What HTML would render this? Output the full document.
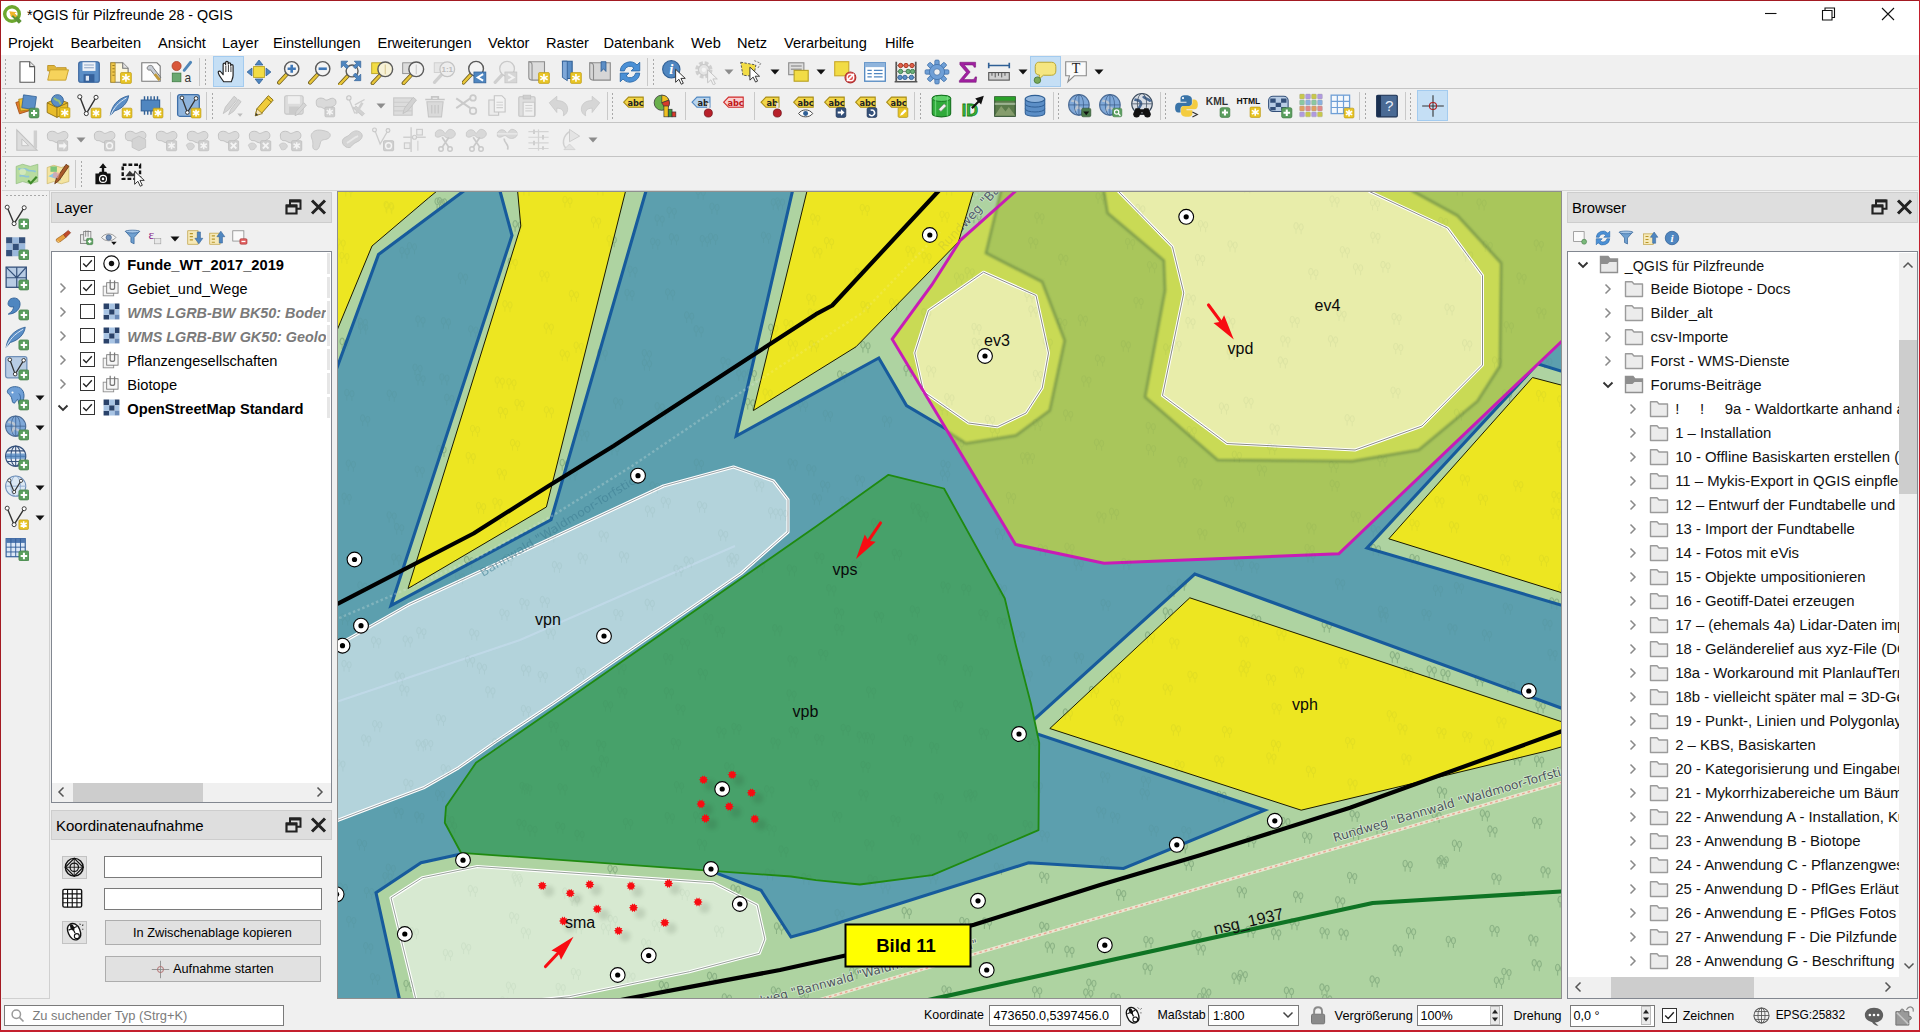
<!DOCTYPE html><html lang="de"><head><meta charset="utf-8"><title>QGIS für Pilzfreunde 28 - QGIS</title><style>
*{box-sizing:border-box}
html,body{margin:0;padding:0}
body{width:1920px;height:1032px;overflow:hidden;background:#f0f0f0;font-family:"Liberation Sans",sans-serif;color:#000;position:relative}
div{position:absolute}
.t{white-space:nowrap}
svg{position:absolute}
.hl{background:#c5dff5;border:1px solid #a3cbef}
.sep{background:#c9c9c9;width:1px}
.hsep{background:#c4c4c4;height:1px}
.hd{width:3px;background-image:radial-gradient(circle,#a8a8a8 0.9px,transparent 1.1px);background-size:3px 4px}
.inp{background:#fff;border:1px solid #7a7a7a}
.btn{background:#e1e1e1;border:1px solid #adadad;text-align:center}
.ttl{background:#dedede;border:1px solid #cdcdcd}
.tree{background:#fff;border:1px solid #828790}
.cb{width:15px;height:15px;background:#fff;border:1px solid #333}
</style></head><body>
<div style="left:0px;top:0px;width:1920px;height:30px;background:#fff"></div>
<div style="left:0px;top:30px;width:1920px;height:25px;background:#fff"></div>
<div class="t" style="left:27px;top:5px;font-size:14.3px;line-height:20px;">*QGIS für Pilzfreunde 28 - QGIS</div>
<div class="t" style="left:8px;top:32.5px;font-size:14.6px;line-height:20px;">Projekt</div>
<div class="t" style="left:70.5px;top:32.5px;font-size:14.6px;line-height:20px;">Bearbeiten</div>
<div class="t" style="left:158px;top:32.5px;font-size:14.6px;line-height:20px;">Ansicht</div>
<div class="t" style="left:222px;top:32.5px;font-size:14.6px;line-height:20px;">Layer</div>
<div class="t" style="left:273px;top:32.5px;font-size:14.6px;line-height:20px;">Einstellungen</div>
<div class="t" style="left:377.5px;top:32.5px;font-size:14.6px;line-height:20px;">Erweiterungen</div>
<div class="t" style="left:488px;top:32.5px;font-size:14.6px;line-height:20px;">Vektor</div>
<div class="t" style="left:546px;top:32.5px;font-size:14.6px;line-height:20px;">Raster</div>
<div class="t" style="left:603.5px;top:32.5px;font-size:14.6px;line-height:20px;">Datenbank</div>
<div class="t" style="left:691px;top:32.5px;font-size:14.6px;line-height:20px;">Web</div>
<div class="t" style="left:737px;top:32.5px;font-size:14.6px;line-height:20px;">Netz</div>
<div class="t" style="left:784px;top:32.5px;font-size:14.6px;line-height:20px;">Verarbeitung</div>
<div class="t" style="left:885px;top:32.5px;font-size:14.6px;line-height:20px;">Hilfe</div>
<svg style="left:1750px;top:0" width="170" height="30" viewBox="0 0 170 30"><g fill="none" stroke="#111" stroke-width="1.1"><path d="M15 13.5h11.5"/><path d="M72.500 10.500h9.500v9.500h-9.500z M75 10.500v-2.500h9.500v9.500h-2.500"/><path d="M132 8l12 12M144 8l-12 12"/></g></svg>
<div class="hsep" style="left:2px;top:88px;width:1916px;height:1px;"></div>
<div class="hsep" style="left:2px;top:122px;width:1916px;height:1px;"></div>
<div class="hsep" style="left:2px;top:156px;width:1916px;height:1px;"></div>
<div style="left:2px;top:190px;width:1916px;height:1px;background:#d5d5d5"></div>
<svg width="1223" height="807" viewBox="338 191 1223 807" style="position:absolute;left:338px;top:191px;display:block;overflow:hidden">
<defs><filter id="bl" x="-20%" y="-20%" width="140%" height="140%"><feGaussianBlur stdDeviation="1.1"/></filter><filter id="sh" x="-100%" y="-100%" width="300%" height="300%"><feGaussianBlur stdDeviation="2.2"/></filter></defs>
<rect x="330" y="180" width="1250" height="830" fill="#aed3a1"/>
<path d="M345.7 196.6v-4.5a2.1 3.3 0 1 1 .1 0M350.8 197.2v-4.2a2 3.1 0 1 1 .1 0M386.7 213.6v-4.5a2.1 3.3 0 1 1 .1 0M391.8 214.2v-4.2a2 3.1 0 1 1 .1 0M386.1 212.3v-4.5a2.1 3.3 0 1 1 .1 0M391.2 212.9v-4.2a2 3.1 0 1 1 .1 0M437.1 209.1v-4.5a2.1 3.3 0 1 1 .1 0M442.2 209.7v-4.2a2 3.1 0 1 1 .1 0M439.5 208.7v-4.5a2.1 3.3 0 1 1 .1 0M444.6 209.3v-4.2a2 3.1 0 1 1 .1 0M523.9 195.4v-4.5a2.1 3.3 0 1 1 .1 0M529.0 196.0v-4.2a2 3.1 0 1 1 .1 0M515.1 231.7v-4.5a2.1 3.3 0 1 1 .1 0M520.2 232.3v-4.2a2 3.1 0 1 1 .1 0M564.9 207.5v-4.5a2.1 3.3 0 1 1 .1 0M570.0 208.1v-4.2a2 3.1 0 1 1 .1 0M593.5 227.8v-4.5a2.1 3.3 0 1 1 .1 0M598.6 228.4v-4.2a2 3.1 0 1 1 .1 0M597.8 195.2v-4.5a2.1 3.3 0 1 1 .1 0M602.9 195.8v-4.2a2 3.1 0 1 1 .1 0M657.1 225.9v-4.5a2.1 3.3 0 1 1 .1 0M662.2 226.5v-4.2a2 3.1 0 1 1 .1 0M669.1 218.1v-4.5a2.1 3.3 0 1 1 .1 0M674.2 218.7v-4.2a2 3.1 0 1 1 .1 0M711.9 214.1v-4.5a2.1 3.3 0 1 1 .1 0M717.0 214.7v-4.2a2 3.1 0 1 1 .1 0M698.1 199.1v-4.5a2.1 3.3 0 1 1 .1 0M703.2 199.7v-4.2a2 3.1 0 1 1 .1 0M777.4 208.8v-4.5a2.1 3.3 0 1 1 .1 0M782.5 209.4v-4.2a2 3.1 0 1 1 .1 0M773.3 209.9v-4.5a2.1 3.3 0 1 1 .1 0M778.4 210.5v-4.2a2 3.1 0 1 1 .1 0M812.7 225.0v-4.5a2.1 3.3 0 1 1 .1 0M817.8 225.6v-4.2a2 3.1 0 1 1 .1 0M862.2 215.3v-4.5a2.1 3.3 0 1 1 .1 0M867.3 215.9v-4.2a2 3.1 0 1 1 .1 0M942.0 222.1v-4.5a2.1 3.3 0 1 1 .1 0M947.1 222.7v-4.2a2 3.1 0 1 1 .1 0M946.6 195.2v-4.5a2.1 3.3 0 1 1 .1 0M951.7 195.8v-4.2a2 3.1 0 1 1 .1 0M973.9 223.3v-4.5a2.1 3.3 0 1 1 .1 0M979.0 223.9v-4.2a2 3.1 0 1 1 .1 0M977.0 191.7v-4.5a2.1 3.3 0 1 1 .1 0M982.1 192.3v-4.2a2 3.1 0 1 1 .1 0M1036.9 223.6v-4.5a2.1 3.3 0 1 1 .1 0M1042.0 224.2v-4.2a2 3.1 0 1 1 .1 0M1098.0 203.8v-4.5a2.1 3.3 0 1 1 .1 0M1103.1 204.4v-4.2a2 3.1 0 1 1 .1 0M1137.7 215.5v-4.5a2.1 3.3 0 1 1 .1 0M1142.8 216.1v-4.2a2 3.1 0 1 1 .1 0M1200.5 231.6v-4.5a2.1 3.3 0 1 1 .1 0M1205.6 232.2v-4.2a2 3.1 0 1 1 .1 0M1244.7 192.7v-4.5a2.1 3.3 0 1 1 .1 0M1249.8 193.3v-4.2a2 3.1 0 1 1 .1 0M1296.0 233.7v-4.5a2.1 3.3 0 1 1 .1 0M1301.1 234.3v-4.2a2 3.1 0 1 1 .1 0M1332.0 207.0v-4.5a2.1 3.3 0 1 1 .1 0M1337.1 207.6v-4.2a2 3.1 0 1 1 .1 0M1372.5 210.3v-4.5a2.1 3.3 0 1 1 .1 0M1377.6 210.9v-4.2a2 3.1 0 1 1 .1 0M1376.7 192.6v-4.5a2.1 3.3 0 1 1 .1 0M1381.8 193.2v-4.2a2 3.1 0 1 1 .1 0M1457.3 195.7v-4.5a2.1 3.3 0 1 1 .1 0M1462.4 196.3v-4.2a2 3.1 0 1 1 .1 0M1440.7 228.3v-4.5a2.1 3.3 0 1 1 .1 0M1445.8 228.9v-4.2a2 3.1 0 1 1 .1 0M1479.0 209.8v-4.5a2.1 3.3 0 1 1 .1 0M1484.1 210.4v-4.2a2 3.1 0 1 1 .1 0M1566.4 226.0v-4.5a2.1 3.3 0 1 1 .1 0M1571.5 226.6v-4.2a2 3.1 0 1 1 .1 0M1591.8 208.3v-4.5a2.1 3.3 0 1 1 .1 0M1596.9 208.9v-4.2a2 3.1 0 1 1 .1 0M1618.4 232.1v-4.5a2.1 3.3 0 1 1 .1 0M1623.5 232.7v-4.2a2 3.1 0 1 1 .1 0M338.1 249.8v-4.5a2.1 3.3 0 1 1 .1 0M343.2 250.4v-4.2a2 3.1 0 1 1 .1 0M341.8 263.3v-4.5a2.1 3.3 0 1 1 .1 0M346.9 263.9v-4.2a2 3.1 0 1 1 .1 0M409.4 253.6v-4.5a2.1 3.3 0 1 1 .1 0M414.5 254.2v-4.2a2 3.1 0 1 1 .1 0M401.9 258.2v-4.5a2.1 3.3 0 1 1 .1 0M407.0 258.8v-4.2a2 3.1 0 1 1 .1 0M460.4 283.9v-4.5a2.1 3.3 0 1 1 .1 0M465.5 284.5v-4.2a2 3.1 0 1 1 .1 0M510.2 269.2v-4.5a2.1 3.3 0 1 1 .1 0M515.3 269.8v-4.2a2 3.1 0 1 1 .1 0M541.9 281.6v-4.5a2.1 3.3 0 1 1 .1 0M547.0 282.2v-4.2a2 3.1 0 1 1 .1 0M630.0 277.1v-4.5a2.1 3.3 0 1 1 .1 0M635.1 277.7v-4.2a2 3.1 0 1 1 .1 0M609.1 246.6v-4.5a2.1 3.3 0 1 1 .1 0M614.2 247.2v-4.2a2 3.1 0 1 1 .1 0M671.4 244.7v-4.5a2.1 3.3 0 1 1 .1 0M676.5 245.3v-4.2a2 3.1 0 1 1 .1 0M652.7 249.1v-4.5a2.1 3.3 0 1 1 .1 0M657.8 249.7v-4.2a2 3.1 0 1 1 .1 0M710.5 244.3v-4.5a2.1 3.3 0 1 1 .1 0M715.6 244.9v-4.2a2 3.1 0 1 1 .1 0M702.2 246.5v-4.5a2.1 3.3 0 1 1 .1 0M707.3 247.1v-4.2a2 3.1 0 1 1 .1 0M763.5 243.1v-4.5a2.1 3.3 0 1 1 .1 0M768.6 243.7v-4.2a2 3.1 0 1 1 .1 0M826.5 248.5v-4.5a2.1 3.3 0 1 1 .1 0M831.6 249.1v-4.2a2 3.1 0 1 1 .1 0M814.8 258.0v-4.5a2.1 3.3 0 1 1 .1 0M819.9 258.6v-4.2a2 3.1 0 1 1 .1 0M856.9 279.4v-4.5a2.1 3.3 0 1 1 .1 0M862.0 280.0v-4.2a2 3.1 0 1 1 .1 0M924.0 263.3v-4.5a2.1 3.3 0 1 1 .1 0M929.1 263.9v-4.2a2 3.1 0 1 1 .1 0M908.0 257.1v-4.5a2.1 3.3 0 1 1 .1 0M913.1 257.7v-4.2a2 3.1 0 1 1 .1 0M967.1 278.5v-4.5a2.1 3.3 0 1 1 .1 0M972.2 279.1v-4.2a2 3.1 0 1 1 .1 0M956.5 283.8v-4.5a2.1 3.3 0 1 1 .1 0M961.6 284.4v-4.2a2 3.1 0 1 1 .1 0M1030.7 248.5v-4.5a2.1 3.3 0 1 1 .1 0M1035.8 249.1v-4.2a2 3.1 0 1 1 .1 0M1060.7 265.2v-4.5a2.1 3.3 0 1 1 .1 0M1065.8 265.8v-4.2a2 3.1 0 1 1 .1 0M1149.5 272.6v-4.5a2.1 3.3 0 1 1 .1 0M1154.6 273.2v-4.2a2 3.1 0 1 1 .1 0M1127.6 249.3v-4.5a2.1 3.3 0 1 1 .1 0M1132.7 249.9v-4.2a2 3.1 0 1 1 .1 0M1197.5 265.4v-4.5a2.1 3.3 0 1 1 .1 0M1202.6 266.0v-4.2a2 3.1 0 1 1 .1 0M1230.0 251.8v-4.5a2.1 3.3 0 1 1 .1 0M1235.1 252.4v-4.2a2 3.1 0 1 1 .1 0M1310.8 279.5v-4.5a2.1 3.3 0 1 1 .1 0M1315.9 280.1v-4.2a2 3.1 0 1 1 .1 0M1355.5 274.6v-4.5a2.1 3.3 0 1 1 .1 0M1360.6 275.2v-4.2a2 3.1 0 1 1 .1 0M1342.3 257.6v-4.5a2.1 3.3 0 1 1 .1 0M1347.4 258.2v-4.2a2 3.1 0 1 1 .1 0M1372.8 243.2v-4.5a2.1 3.3 0 1 1 .1 0M1377.9 243.8v-4.2a2 3.1 0 1 1 .1 0M1382.9 272.5v-4.5a2.1 3.3 0 1 1 .1 0M1388.0 273.1v-4.2a2 3.1 0 1 1 .1 0M1465.6 261.7v-4.5a2.1 3.3 0 1 1 .1 0M1470.7 262.3v-4.2a2 3.1 0 1 1 .1 0M1519.0 284.0v-4.5a2.1 3.3 0 1 1 .1 0M1524.1 284.6v-4.2a2 3.1 0 1 1 .1 0M1485.2 252.0v-4.5a2.1 3.3 0 1 1 .1 0M1490.3 252.6v-4.2a2 3.1 0 1 1 .1 0M1536.2 251.0v-4.5a2.1 3.3 0 1 1 .1 0M1541.3 251.6v-4.2a2 3.1 0 1 1 .1 0M1619.1 279.0v-4.5a2.1 3.3 0 1 1 .1 0M1624.2 279.6v-4.2a2 3.1 0 1 1 .1 0M360.2 329.2v-4.5a2.1 3.3 0 1 1 .1 0M365.3 329.8v-4.2a2 3.1 0 1 1 .1 0M360.6 334.0v-4.5a2.1 3.3 0 1 1 .1 0M365.7 334.6v-4.2a2 3.1 0 1 1 .1 0M417.9 327.0v-4.5a2.1 3.3 0 1 1 .1 0M423.0 327.6v-4.2a2 3.1 0 1 1 .1 0M443.4 328.7v-4.5a2.1 3.3 0 1 1 .1 0M448.5 329.3v-4.2a2 3.1 0 1 1 .1 0M470.7 336.8v-4.5a2.1 3.3 0 1 1 .1 0M475.8 337.4v-4.2a2 3.1 0 1 1 .1 0M504.9 311.7v-4.5a2.1 3.3 0 1 1 .1 0M510.0 312.3v-4.2a2 3.1 0 1 1 .1 0M571.4 301.5v-4.5a2.1 3.3 0 1 1 .1 0M576.5 302.1v-4.2a2 3.1 0 1 1 .1 0M546.2 333.8v-4.5a2.1 3.3 0 1 1 .1 0M551.3 334.4v-4.2a2 3.1 0 1 1 .1 0M627.0 300.4v-4.5a2.1 3.3 0 1 1 .1 0M632.1 301.0v-4.2a2 3.1 0 1 1 .1 0M686.6 322.9v-4.5a2.1 3.3 0 1 1 .1 0M691.7 323.5v-4.2a2 3.1 0 1 1 .1 0M667.6 299.8v-4.5a2.1 3.3 0 1 1 .1 0M672.7 300.4v-4.2a2 3.1 0 1 1 .1 0M696.1 336.7v-4.5a2.1 3.3 0 1 1 .1 0M701.2 337.3v-4.2a2 3.1 0 1 1 .1 0M770.7 335.1v-4.5a2.1 3.3 0 1 1 .1 0M775.8 335.7v-4.2a2 3.1 0 1 1 .1 0M785.9 330.4v-4.5a2.1 3.3 0 1 1 .1 0M791.0 331.0v-4.2a2 3.1 0 1 1 .1 0M808.8 305.1v-4.5a2.1 3.3 0 1 1 .1 0M813.9 305.7v-4.2a2 3.1 0 1 1 .1 0M810.1 319.8v-4.5a2.1 3.3 0 1 1 .1 0M815.2 320.4v-4.2a2 3.1 0 1 1 .1 0M862.9 312.4v-4.5a2.1 3.3 0 1 1 .1 0M868.0 313.0v-4.2a2 3.1 0 1 1 .1 0M891.5 309.6v-4.5a2.1 3.3 0 1 1 .1 0M896.6 310.2v-4.2a2 3.1 0 1 1 .1 0M923.7 319.7v-4.5a2.1 3.3 0 1 1 .1 0M928.8 320.3v-4.2a2 3.1 0 1 1 .1 0M974.0 334.4v-4.5a2.1 3.3 0 1 1 .1 0M979.1 335.0v-4.2a2 3.1 0 1 1 .1 0M1030.9 317.0v-4.5a2.1 3.3 0 1 1 .1 0M1036.0 317.6v-4.2a2 3.1 0 1 1 .1 0M1026.9 302.1v-4.5a2.1 3.3 0 1 1 .1 0M1032.0 302.7v-4.2a2 3.1 0 1 1 .1 0M1059.7 329.2v-4.5a2.1 3.3 0 1 1 .1 0M1064.8 329.8v-4.2a2 3.1 0 1 1 .1 0M1080.3 325.9v-4.5a2.1 3.3 0 1 1 .1 0M1085.4 326.5v-4.2a2 3.1 0 1 1 .1 0M1136.0 308.3v-4.5a2.1 3.3 0 1 1 .1 0M1141.1 308.9v-4.2a2 3.1 0 1 1 .1 0M1187.9 328.5v-4.5a2.1 3.3 0 1 1 .1 0M1193.0 329.1v-4.2a2 3.1 0 1 1 .1 0M1188.2 304.9v-4.5a2.1 3.3 0 1 1 .1 0M1193.3 305.5v-4.2a2 3.1 0 1 1 .1 0M1227.7 328.0v-4.5a2.1 3.3 0 1 1 .1 0M1232.8 328.6v-4.2a2 3.1 0 1 1 .1 0M1292.2 327.4v-4.5a2.1 3.3 0 1 1 .1 0M1297.3 328.0v-4.2a2 3.1 0 1 1 .1 0M1339.0 321.0v-4.5a2.1 3.3 0 1 1 .1 0M1344.1 321.6v-4.2a2 3.1 0 1 1 .1 0M1394.0 324.5v-4.5a2.1 3.3 0 1 1 .1 0M1399.1 325.1v-4.2a2 3.1 0 1 1 .1 0M1447.0 315.0v-4.5a2.1 3.3 0 1 1 .1 0M1452.1 315.6v-4.2a2 3.1 0 1 1 .1 0M1506.3 332.6v-4.5a2.1 3.3 0 1 1 .1 0M1511.4 333.2v-4.2a2 3.1 0 1 1 .1 0M1538.9 318.6v-4.5a2.1 3.3 0 1 1 .1 0M1544.0 319.2v-4.2a2 3.1 0 1 1 .1 0M1616.5 300.0v-4.5a2.1 3.3 0 1 1 .1 0M1621.6 300.6v-4.2a2 3.1 0 1 1 .1 0M1599.0 297.2v-4.5a2.1 3.3 0 1 1 .1 0M1604.1 297.8v-4.2a2 3.1 0 1 1 .1 0M342.1 349.2v-4.5a2.1 3.3 0 1 1 .1 0M347.2 349.8v-4.2a2 3.1 0 1 1 .1 0M418.0 385.5v-4.5a2.1 3.3 0 1 1 .1 0M423.1 386.1v-4.2a2 3.1 0 1 1 .1 0M415.0 375.1v-4.5a2.1 3.3 0 1 1 .1 0M420.1 375.7v-4.2a2 3.1 0 1 1 .1 0M441.8 384.8v-4.5a2.1 3.3 0 1 1 .1 0M446.9 385.4v-4.2a2 3.1 0 1 1 .1 0M497.2 387.9v-4.5a2.1 3.3 0 1 1 .1 0M502.3 388.5v-4.2a2 3.1 0 1 1 .1 0M508.9 389.6v-4.5a2.1 3.3 0 1 1 .1 0M514.0 390.2v-4.2a2 3.1 0 1 1 .1 0M576.1 353.1v-4.5a2.1 3.3 0 1 1 .1 0M581.2 353.7v-4.2a2 3.1 0 1 1 .1 0M562.2 360.9v-4.5a2.1 3.3 0 1 1 .1 0M567.3 361.5v-4.2a2 3.1 0 1 1 .1 0M600.1 360.0v-4.5a2.1 3.3 0 1 1 .1 0M605.2 360.6v-4.2a2 3.1 0 1 1 .1 0M644.4 370.4v-4.5a2.1 3.3 0 1 1 .1 0M649.5 371.0v-4.2a2 3.1 0 1 1 .1 0M644.3 360.6v-4.5a2.1 3.3 0 1 1 .1 0M649.4 361.2v-4.2a2 3.1 0 1 1 .1 0M723.0 368.5v-4.5a2.1 3.3 0 1 1 .1 0M728.1 369.1v-4.2a2 3.1 0 1 1 .1 0M738.8 380.7v-4.5a2.1 3.3 0 1 1 .1 0M743.9 381.3v-4.2a2 3.1 0 1 1 .1 0M790.3 350.6v-4.5a2.1 3.3 0 1 1 .1 0M795.4 351.2v-4.2a2 3.1 0 1 1 .1 0M749.2 380.3v-4.5a2.1 3.3 0 1 1 .1 0M754.3 380.9v-4.2a2 3.1 0 1 1 .1 0M811.4 351.7v-4.5a2.1 3.3 0 1 1 .1 0M816.5 352.3v-4.2a2 3.1 0 1 1 .1 0M839.6 382.0v-4.5a2.1 3.3 0 1 1 .1 0M844.7 382.6v-4.2a2 3.1 0 1 1 .1 0M862.9 352.6v-4.5a2.1 3.3 0 1 1 .1 0M868.0 353.2v-4.2a2 3.1 0 1 1 .1 0M928.6 376.8v-4.5a2.1 3.3 0 1 1 .1 0M933.7 377.4v-4.2a2 3.1 0 1 1 .1 0M906.0 376.3v-4.5a2.1 3.3 0 1 1 .1 0M911.1 376.9v-4.2a2 3.1 0 1 1 .1 0M974.2 349.2v-4.5a2.1 3.3 0 1 1 .1 0M979.3 349.8v-4.2a2 3.1 0 1 1 .1 0M1035.4 381.3v-4.5a2.1 3.3 0 1 1 .1 0M1040.5 381.9v-4.2a2 3.1 0 1 1 .1 0M1045.2 348.9v-4.5a2.1 3.3 0 1 1 .1 0M1050.3 349.5v-4.2a2 3.1 0 1 1 .1 0M1097.5 366.0v-4.5a2.1 3.3 0 1 1 .1 0M1102.6 366.6v-4.2a2 3.1 0 1 1 .1 0M1083.8 386.8v-4.5a2.1 3.3 0 1 1 .1 0M1088.9 387.4v-4.2a2 3.1 0 1 1 .1 0M1123.3 351.7v-4.5a2.1 3.3 0 1 1 .1 0M1128.4 352.3v-4.2a2 3.1 0 1 1 .1 0M1174.0 350.8v-4.5a2.1 3.3 0 1 1 .1 0M1179.1 351.4v-4.2a2 3.1 0 1 1 .1 0M1165.7 354.9v-4.5a2.1 3.3 0 1 1 .1 0M1170.8 355.5v-4.2a2 3.1 0 1 1 .1 0M1229.2 359.4v-4.5a2.1 3.3 0 1 1 .1 0M1234.3 360.0v-4.2a2 3.1 0 1 1 .1 0M1280.3 368.0v-4.5a2.1 3.3 0 1 1 .1 0M1285.4 368.6v-4.2a2 3.1 0 1 1 .1 0M1282.8 346.8v-4.5a2.1 3.3 0 1 1 .1 0M1287.9 347.4v-4.2a2 3.1 0 1 1 .1 0M1330.5 346.7v-4.5a2.1 3.3 0 1 1 .1 0M1335.6 347.3v-4.2a2 3.1 0 1 1 .1 0M1395.7 354.3v-4.5a2.1 3.3 0 1 1 .1 0M1400.8 354.9v-4.2a2 3.1 0 1 1 .1 0M1464.6 350.7v-4.5a2.1 3.3 0 1 1 .1 0M1469.7 351.3v-4.2a2 3.1 0 1 1 .1 0M1494.5 367.8v-4.5a2.1 3.3 0 1 1 .1 0M1499.6 368.4v-4.2a2 3.1 0 1 1 .1 0M1544.8 368.3v-4.5a2.1 3.3 0 1 1 .1 0M1549.9 368.9v-4.2a2 3.1 0 1 1 .1 0M1622.7 361.1v-4.5a2.1 3.3 0 1 1 .1 0M1627.8 361.7v-4.2a2 3.1 0 1 1 .1 0M362.6 426.0v-4.5a2.1 3.3 0 1 1 .1 0M367.7 426.6v-4.2a2 3.1 0 1 1 .1 0M346.8 400.4v-4.5a2.1 3.3 0 1 1 .1 0M351.9 401.0v-4.2a2 3.1 0 1 1 .1 0M389.2 401.1v-4.5a2.1 3.3 0 1 1 .1 0M394.3 401.7v-4.2a2 3.1 0 1 1 .1 0M446.7 405.2v-4.5a2.1 3.3 0 1 1 .1 0M451.8 405.8v-4.2a2 3.1 0 1 1 .1 0M472.5 436.3v-4.5a2.1 3.3 0 1 1 .1 0M477.6 436.9v-4.2a2 3.1 0 1 1 .1 0M517.0 410.4v-4.5a2.1 3.3 0 1 1 .1 0M522.1 411.0v-4.2a2 3.1 0 1 1 .1 0M500.4 418.2v-4.5a2.1 3.3 0 1 1 .1 0M505.5 418.8v-4.2a2 3.1 0 1 1 .1 0M546.4 417.6v-4.5a2.1 3.3 0 1 1 .1 0M551.5 418.2v-4.2a2 3.1 0 1 1 .1 0M581.8 440.8v-4.5a2.1 3.3 0 1 1 .1 0M586.9 441.4v-4.2a2 3.1 0 1 1 .1 0M615.6 408.8v-4.5a2.1 3.3 0 1 1 .1 0M620.7 409.4v-4.2a2 3.1 0 1 1 .1 0M657.1 413.7v-4.5a2.1 3.3 0 1 1 .1 0M662.2 414.3v-4.2a2 3.1 0 1 1 .1 0M660.3 418.9v-4.5a2.1 3.3 0 1 1 .1 0M665.4 419.5v-4.2a2 3.1 0 1 1 .1 0M717.6 406.8v-4.5a2.1 3.3 0 1 1 .1 0M722.7 407.4v-4.2a2 3.1 0 1 1 .1 0M747.7 409.6v-4.5a2.1 3.3 0 1 1 .1 0M752.8 410.2v-4.2a2 3.1 0 1 1 .1 0M765.1 399.8v-4.5a2.1 3.3 0 1 1 .1 0M770.2 400.4v-4.2a2 3.1 0 1 1 .1 0M800.5 411.4v-4.5a2.1 3.3 0 1 1 .1 0M805.6 412.0v-4.2a2 3.1 0 1 1 .1 0M825.3 421.3v-4.5a2.1 3.3 0 1 1 .1 0M830.4 421.9v-4.2a2 3.1 0 1 1 .1 0M884.5 426.9v-4.5a2.1 3.3 0 1 1 .1 0M889.6 427.5v-4.2a2 3.1 0 1 1 .1 0M942.2 415.1v-4.5a2.1 3.3 0 1 1 .1 0M947.3 415.7v-4.2a2 3.1 0 1 1 .1 0M946.8 404.6v-4.5a2.1 3.3 0 1 1 .1 0M951.9 405.2v-4.2a2 3.1 0 1 1 .1 0M987.4 426.3v-4.5a2.1 3.3 0 1 1 .1 0M992.5 426.9v-4.2a2 3.1 0 1 1 .1 0M992.3 437.2v-4.5a2.1 3.3 0 1 1 .1 0M997.4 437.8v-4.2a2 3.1 0 1 1 .1 0M1035.1 430.3v-4.5a2.1 3.3 0 1 1 .1 0M1040.2 430.9v-4.2a2 3.1 0 1 1 .1 0M1065.6 421.0v-4.5a2.1 3.3 0 1 1 .1 0M1070.7 421.6v-4.2a2 3.1 0 1 1 .1 0M1148.2 433.4v-4.5a2.1 3.3 0 1 1 .1 0M1153.3 434.0v-4.2a2 3.1 0 1 1 .1 0M1189.2 437.3v-4.5a2.1 3.3 0 1 1 .1 0M1194.3 437.9v-4.2a2 3.1 0 1 1 .1 0M1246.0 408.1v-4.5a2.1 3.3 0 1 1 .1 0M1251.1 408.7v-4.2a2 3.1 0 1 1 .1 0M1221.4 413.9v-4.5a2.1 3.3 0 1 1 .1 0M1226.5 414.5v-4.2a2 3.1 0 1 1 .1 0M1272.1 434.8v-4.5a2.1 3.3 0 1 1 .1 0M1277.2 435.4v-4.2a2 3.1 0 1 1 .1 0M1347.1 425.6v-4.5a2.1 3.3 0 1 1 .1 0M1352.2 426.2v-4.2a2 3.1 0 1 1 .1 0M1393.0 398.1v-4.5a2.1 3.3 0 1 1 .1 0M1398.1 398.7v-4.2a2 3.1 0 1 1 .1 0M1456.4 420.1v-4.5a2.1 3.3 0 1 1 .1 0M1461.5 420.7v-4.2a2 3.1 0 1 1 .1 0M1504.5 400.9v-4.5a2.1 3.3 0 1 1 .1 0M1509.6 401.5v-4.2a2 3.1 0 1 1 .1 0M1538.6 401.3v-4.5a2.1 3.3 0 1 1 .1 0M1543.7 401.9v-4.2a2 3.1 0 1 1 .1 0M1559.6 407.0v-4.5a2.1 3.3 0 1 1 .1 0M1564.7 407.6v-4.2a2 3.1 0 1 1 .1 0M1612.1 440.9v-4.5a2.1 3.3 0 1 1 .1 0M1617.2 441.5v-4.2a2 3.1 0 1 1 .1 0M348.3 471.1v-4.5a2.1 3.3 0 1 1 .1 0M353.4 471.7v-4.2a2 3.1 0 1 1 .1 0M417.2 477.1v-4.5a2.1 3.3 0 1 1 .1 0M422.3 477.7v-4.2a2 3.1 0 1 1 .1 0M438.9 456.5v-4.5a2.1 3.3 0 1 1 .1 0M444.0 457.1v-4.2a2 3.1 0 1 1 .1 0M468.2 463.4v-4.5a2.1 3.3 0 1 1 .1 0M473.3 464.0v-4.2a2 3.1 0 1 1 .1 0M512.5 450.5v-4.5a2.1 3.3 0 1 1 .1 0M517.6 451.1v-4.2a2 3.1 0 1 1 .1 0M499.3 479.6v-4.5a2.1 3.3 0 1 1 .1 0M504.4 480.2v-4.2a2 3.1 0 1 1 .1 0M570.0 479.7v-4.5a2.1 3.3 0 1 1 .1 0M575.1 480.3v-4.2a2 3.1 0 1 1 .1 0M562.2 470.4v-4.5a2.1 3.3 0 1 1 .1 0M567.3 471.0v-4.2a2 3.1 0 1 1 .1 0M612.0 455.2v-4.5a2.1 3.3 0 1 1 .1 0M617.1 455.8v-4.2a2 3.1 0 1 1 .1 0M652.3 493.0v-4.5a2.1 3.3 0 1 1 .1 0M657.4 493.6v-4.2a2 3.1 0 1 1 .1 0M696.3 470.2v-4.5a2.1 3.3 0 1 1 .1 0M701.4 470.8v-4.2a2 3.1 0 1 1 .1 0M790.1 469.8v-4.5a2.1 3.3 0 1 1 .1 0M795.2 470.4v-4.2a2 3.1 0 1 1 .1 0M756.7 491.6v-4.5a2.1 3.3 0 1 1 .1 0M761.8 492.2v-4.2a2 3.1 0 1 1 .1 0M808.8 475.6v-4.5a2.1 3.3 0 1 1 .1 0M813.9 476.2v-4.2a2 3.1 0 1 1 .1 0M822.6 491.9v-4.5a2.1 3.3 0 1 1 .1 0M827.7 492.5v-4.2a2 3.1 0 1 1 .1 0M857.3 486.1v-4.5a2.1 3.3 0 1 1 .1 0M862.4 486.7v-4.2a2 3.1 0 1 1 .1 0M942.5 480.9v-4.5a2.1 3.3 0 1 1 .1 0M947.6 481.5v-4.2a2 3.1 0 1 1 .1 0M943.0 471.4v-4.5a2.1 3.3 0 1 1 .1 0M948.1 472.0v-4.2a2 3.1 0 1 1 .1 0M956.6 450.2v-4.5a2.1 3.3 0 1 1 .1 0M961.7 450.8v-4.2a2 3.1 0 1 1 .1 0M1027.3 463.3v-4.5a2.1 3.3 0 1 1 .1 0M1032.4 463.9v-4.2a2 3.1 0 1 1 .1 0M1022.6 463.9v-4.5a2.1 3.3 0 1 1 .1 0M1027.7 464.5v-4.2a2 3.1 0 1 1 .1 0M1096.5 450.1v-4.5a2.1 3.3 0 1 1 .1 0M1101.6 450.7v-4.2a2 3.1 0 1 1 .1 0M1148.4 455.3v-4.5a2.1 3.3 0 1 1 .1 0M1153.5 455.9v-4.2a2 3.1 0 1 1 .1 0M1194.9 489.7v-4.5a2.1 3.3 0 1 1 .1 0M1200.0 490.3v-4.2a2 3.1 0 1 1 .1 0M1179.9 467.3v-4.5a2.1 3.3 0 1 1 .1 0M1185.0 467.9v-4.2a2 3.1 0 1 1 .1 0M1259.4 475.9v-4.5a2.1 3.3 0 1 1 .1 0M1264.5 476.5v-4.2a2 3.1 0 1 1 .1 0M1234.3 462.1v-4.5a2.1 3.3 0 1 1 .1 0M1239.4 462.7v-4.2a2 3.1 0 1 1 .1 0M1269.6 454.5v-4.5a2.1 3.3 0 1 1 .1 0M1274.7 455.1v-4.2a2 3.1 0 1 1 .1 0M1332.1 491.2v-4.5a2.1 3.3 0 1 1 .1 0M1337.2 491.8v-4.2a2 3.1 0 1 1 .1 0M1331.2 472.5v-4.5a2.1 3.3 0 1 1 .1 0M1336.3 473.1v-4.2a2 3.1 0 1 1 .1 0M1379.9 466.4v-4.5a2.1 3.3 0 1 1 .1 0M1385.0 467.0v-4.2a2 3.1 0 1 1 .1 0M1462.4 485.7v-4.5a2.1 3.3 0 1 1 .1 0M1467.5 486.3v-4.2a2 3.1 0 1 1 .1 0M1515.7 491.4v-4.5a2.1 3.3 0 1 1 .1 0M1520.8 492.0v-4.2a2 3.1 0 1 1 .1 0M1559.2 452.2v-4.5a2.1 3.3 0 1 1 .1 0M1564.3 452.8v-4.2a2 3.1 0 1 1 .1 0M1599.3 483.1v-4.5a2.1 3.3 0 1 1 .1 0M1604.4 483.7v-4.2a2 3.1 0 1 1 .1 0M344.1 504.2v-4.5a2.1 3.3 0 1 1 .1 0M349.2 504.8v-4.2a2 3.1 0 1 1 .1 0M389.1 522.8v-4.5a2.1 3.3 0 1 1 .1 0M394.2 523.4v-4.2a2 3.1 0 1 1 .1 0M396.6 534.5v-4.5a2.1 3.3 0 1 1 .1 0M401.7 535.1v-4.2a2 3.1 0 1 1 .1 0M478.5 513.4v-4.5a2.1 3.3 0 1 1 .1 0M483.6 514.0v-4.2a2 3.1 0 1 1 .1 0M500.7 526.5v-4.5a2.1 3.3 0 1 1 .1 0M505.8 527.1v-4.2a2 3.1 0 1 1 .1 0M494.9 509.1v-4.5a2.1 3.3 0 1 1 .1 0M500.0 509.7v-4.2a2 3.1 0 1 1 .1 0M548.6 541.9v-4.5a2.1 3.3 0 1 1 .1 0M553.7 542.5v-4.2a2 3.1 0 1 1 .1 0M601.2 541.9v-4.5a2.1 3.3 0 1 1 .1 0M606.3 542.5v-4.2a2 3.1 0 1 1 .1 0M663.3 508.1v-4.5a2.1 3.3 0 1 1 .1 0M668.4 508.7v-4.2a2 3.1 0 1 1 .1 0M647.5 517.0v-4.5a2.1 3.3 0 1 1 .1 0M652.6 517.6v-4.2a2 3.1 0 1 1 .1 0M699.5 512.5v-4.5a2.1 3.3 0 1 1 .1 0M704.6 513.1v-4.2a2 3.1 0 1 1 .1 0M720.6 541.0v-4.5a2.1 3.3 0 1 1 .1 0M725.7 541.6v-4.2a2 3.1 0 1 1 .1 0M780.5 520.2v-4.5a2.1 3.3 0 1 1 .1 0M785.6 520.8v-4.2a2 3.1 0 1 1 .1 0M770.6 518.6v-4.5a2.1 3.3 0 1 1 .1 0M775.7 519.2v-4.2a2 3.1 0 1 1 .1 0M814.4 504.7v-4.5a2.1 3.3 0 1 1 .1 0M819.5 505.3v-4.2a2 3.1 0 1 1 .1 0M842.1 507.5v-4.5a2.1 3.3 0 1 1 .1 0M847.2 508.1v-4.2a2 3.1 0 1 1 .1 0M873.6 529.7v-4.5a2.1 3.3 0 1 1 .1 0M878.7 530.3v-4.2a2 3.1 0 1 1 .1 0M913.0 513.9v-4.5a2.1 3.3 0 1 1 .1 0M918.1 514.5v-4.2a2 3.1 0 1 1 .1 0M921.1 521.6v-4.5a2.1 3.3 0 1 1 .1 0M926.2 522.2v-4.2a2 3.1 0 1 1 .1 0M997.5 539.3v-4.5a2.1 3.3 0 1 1 .1 0M1002.6 539.9v-4.2a2 3.1 0 1 1 .1 0M1008.5 503.4v-4.5a2.1 3.3 0 1 1 .1 0M1013.6 504.0v-4.2a2 3.1 0 1 1 .1 0M1098.9 522.8v-4.5a2.1 3.3 0 1 1 .1 0M1104.0 523.4v-4.2a2 3.1 0 1 1 .1 0M1111.5 519.2v-4.5a2.1 3.3 0 1 1 .1 0M1116.6 519.8v-4.2a2 3.1 0 1 1 .1 0M1199.8 539.6v-4.5a2.1 3.3 0 1 1 .1 0M1204.9 540.2v-4.2a2 3.1 0 1 1 .1 0M1226.4 506.8v-4.5a2.1 3.3 0 1 1 .1 0M1231.5 507.4v-4.2a2 3.1 0 1 1 .1 0M1238.5 532.0v-4.5a2.1 3.3 0 1 1 .1 0M1243.6 532.6v-4.2a2 3.1 0 1 1 .1 0M1308.9 533.8v-4.5a2.1 3.3 0 1 1 .1 0M1314.0 534.4v-4.2a2 3.1 0 1 1 .1 0M1353.2 522.1v-4.5a2.1 3.3 0 1 1 .1 0M1358.3 522.7v-4.2a2 3.1 0 1 1 .1 0M1373.2 536.4v-4.5a2.1 3.3 0 1 1 .1 0M1378.3 537.0v-4.2a2 3.1 0 1 1 .1 0M1412.0 530.4v-4.5a2.1 3.3 0 1 1 .1 0M1417.1 531.0v-4.2a2 3.1 0 1 1 .1 0M1436.9 507.6v-4.5a2.1 3.3 0 1 1 .1 0M1442.0 508.2v-4.2a2 3.1 0 1 1 .1 0M1451.5 532.7v-4.5a2.1 3.3 0 1 1 .1 0M1456.6 533.3v-4.2a2 3.1 0 1 1 .1 0M1480.4 505.1v-4.5a2.1 3.3 0 1 1 .1 0M1485.5 505.7v-4.2a2 3.1 0 1 1 .1 0M1553.1 519.1v-4.5a2.1 3.3 0 1 1 .1 0M1558.2 519.7v-4.2a2 3.1 0 1 1 .1 0M1553.9 502.5v-4.5a2.1 3.3 0 1 1 .1 0M1559.0 503.1v-4.2a2 3.1 0 1 1 .1 0M1592.8 522.3v-4.5a2.1 3.3 0 1 1 .1 0M1597.9 522.9v-4.2a2 3.1 0 1 1 .1 0M359.9 592.9v-4.5a2.1 3.3 0 1 1 .1 0M365.0 593.5v-4.2a2 3.1 0 1 1 .1 0M393.8 564.9v-4.5a2.1 3.3 0 1 1 .1 0M398.9 565.5v-4.2a2 3.1 0 1 1 .1 0M466.5 567.5v-4.5a2.1 3.3 0 1 1 .1 0M471.6 568.1v-4.2a2 3.1 0 1 1 .1 0M457.4 583.7v-4.5a2.1 3.3 0 1 1 .1 0M462.5 584.3v-4.2a2 3.1 0 1 1 .1 0M506.0 565.3v-4.5a2.1 3.3 0 1 1 .1 0M511.1 565.9v-4.2a2 3.1 0 1 1 .1 0M580.2 564.0v-4.5a2.1 3.3 0 1 1 .1 0M585.3 564.6v-4.2a2 3.1 0 1 1 .1 0M554.4 572.5v-4.5a2.1 3.3 0 1 1 .1 0M559.5 573.1v-4.2a2 3.1 0 1 1 .1 0M621.5 562.7v-4.5a2.1 3.3 0 1 1 .1 0M626.6 563.3v-4.2a2 3.1 0 1 1 .1 0M676.0 576.2v-4.5a2.1 3.3 0 1 1 .1 0M681.1 576.8v-4.2a2 3.1 0 1 1 .1 0M686.2 567.7v-4.5a2.1 3.3 0 1 1 .1 0M691.3 568.3v-4.2a2 3.1 0 1 1 .1 0M731.6 564.2v-4.5a2.1 3.3 0 1 1 .1 0M736.7 564.8v-4.2a2 3.1 0 1 1 .1 0M729.0 567.0v-4.5a2.1 3.3 0 1 1 .1 0M734.1 567.6v-4.2a2 3.1 0 1 1 .1 0M789.4 575.8v-4.5a2.1 3.3 0 1 1 .1 0M794.5 576.4v-4.2a2 3.1 0 1 1 .1 0M757.3 572.3v-4.5a2.1 3.3 0 1 1 .1 0M762.4 572.9v-4.2a2 3.1 0 1 1 .1 0M828.8 595.7v-4.5a2.1 3.3 0 1 1 .1 0M833.9 596.3v-4.2a2 3.1 0 1 1 .1 0M816.8 563.4v-4.5a2.1 3.3 0 1 1 .1 0M821.9 564.0v-4.2a2 3.1 0 1 1 .1 0M894.4 560.2v-4.5a2.1 3.3 0 1 1 .1 0M899.5 560.8v-4.2a2 3.1 0 1 1 .1 0M854.1 571.3v-4.5a2.1 3.3 0 1 1 .1 0M859.2 571.9v-4.2a2 3.1 0 1 1 .1 0M943.0 592.9v-4.5a2.1 3.3 0 1 1 .1 0M948.1 593.5v-4.2a2 3.1 0 1 1 .1 0M999.4 595.0v-4.5a2.1 3.3 0 1 1 .1 0M1004.5 595.6v-4.2a2 3.1 0 1 1 .1 0M963.7 595.2v-4.5a2.1 3.3 0 1 1 .1 0M968.8 595.8v-4.2a2 3.1 0 1 1 .1 0M1040.3 555.4v-4.5a2.1 3.3 0 1 1 .1 0M1045.4 556.0v-4.2a2 3.1 0 1 1 .1 0M1076.2 570.5v-4.5a2.1 3.3 0 1 1 .1 0M1081.3 571.1v-4.2a2 3.1 0 1 1 .1 0M1066.9 554.1v-4.5a2.1 3.3 0 1 1 .1 0M1072.0 554.7v-4.2a2 3.1 0 1 1 .1 0M1123.8 569.5v-4.5a2.1 3.3 0 1 1 .1 0M1128.9 570.1v-4.2a2 3.1 0 1 1 .1 0M1168.9 596.4v-4.5a2.1 3.3 0 1 1 .1 0M1174.0 597.0v-4.2a2 3.1 0 1 1 .1 0M1179.2 590.1v-4.5a2.1 3.3 0 1 1 .1 0M1184.3 590.7v-4.2a2 3.1 0 1 1 .1 0M1251.7 573.0v-4.5a2.1 3.3 0 1 1 .1 0M1256.8 573.6v-4.2a2 3.1 0 1 1 .1 0M1236.3 570.4v-4.5a2.1 3.3 0 1 1 .1 0M1241.4 571.0v-4.2a2 3.1 0 1 1 .1 0M1308.0 562.5v-4.5a2.1 3.3 0 1 1 .1 0M1313.1 563.1v-4.2a2 3.1 0 1 1 .1 0M1307.0 555.3v-4.5a2.1 3.3 0 1 1 .1 0M1312.1 555.9v-4.2a2 3.1 0 1 1 .1 0M1337.6 589.7v-4.5a2.1 3.3 0 1 1 .1 0M1342.7 590.3v-4.2a2 3.1 0 1 1 .1 0M1373.3 555.5v-4.5a2.1 3.3 0 1 1 .1 0M1378.4 556.1v-4.2a2 3.1 0 1 1 .1 0M1412.0 565.3v-4.5a2.1 3.3 0 1 1 .1 0M1417.1 565.9v-4.2a2 3.1 0 1 1 .1 0M1456.4 593.5v-4.5a2.1 3.3 0 1 1 .1 0M1461.5 594.1v-4.2a2 3.1 0 1 1 .1 0M1435.5 596.1v-4.5a2.1 3.3 0 1 1 .1 0M1440.6 596.7v-4.2a2 3.1 0 1 1 .1 0M1502.6 565.5v-4.5a2.1 3.3 0 1 1 .1 0M1507.7 566.1v-4.2a2 3.1 0 1 1 .1 0M1541.4 566.1v-4.5a2.1 3.3 0 1 1 .1 0M1546.5 566.7v-4.2a2 3.1 0 1 1 .1 0M1560.7 594.3v-4.5a2.1 3.3 0 1 1 .1 0M1565.8 594.9v-4.2a2 3.1 0 1 1 .1 0M1607.4 595.5v-4.5a2.1 3.3 0 1 1 .1 0M1612.5 596.1v-4.2a2 3.1 0 1 1 .1 0M1589.8 574.9v-4.5a2.1 3.3 0 1 1 .1 0M1594.9 575.5v-4.2a2 3.1 0 1 1 .1 0M373.6 648.0v-4.5a2.1 3.3 0 1 1 .1 0M378.7 648.6v-4.2a2 3.1 0 1 1 .1 0M342.5 624.9v-4.5a2.1 3.3 0 1 1 .1 0M347.6 625.5v-4.2a2 3.1 0 1 1 .1 0M405.2 646.8v-4.5a2.1 3.3 0 1 1 .1 0M410.3 647.4v-4.2a2 3.1 0 1 1 .1 0M418.8 638.5v-4.5a2.1 3.3 0 1 1 .1 0M423.9 639.1v-4.2a2 3.1 0 1 1 .1 0M471.7 640.0v-4.5a2.1 3.3 0 1 1 .1 0M476.8 640.6v-4.2a2 3.1 0 1 1 .1 0M501.9 620.1v-4.5a2.1 3.3 0 1 1 .1 0M507.0 620.7v-4.2a2 3.1 0 1 1 .1 0M521.9 609.5v-4.5a2.1 3.3 0 1 1 .1 0M527.0 610.1v-4.2a2 3.1 0 1 1 .1 0M548.2 639.1v-4.5a2.1 3.3 0 1 1 .1 0M553.3 639.7v-4.2a2 3.1 0 1 1 .1 0M542.3 607.5v-4.5a2.1 3.3 0 1 1 .1 0M547.4 608.1v-4.2a2 3.1 0 1 1 .1 0M615.8 620.3v-4.5a2.1 3.3 0 1 1 .1 0M620.9 620.9v-4.2a2 3.1 0 1 1 .1 0M682.4 649.5v-4.5a2.1 3.3 0 1 1 .1 0M687.5 650.1v-4.2a2 3.1 0 1 1 .1 0M647.2 610.2v-4.5a2.1 3.3 0 1 1 .1 0M652.3 610.8v-4.2a2 3.1 0 1 1 .1 0M717.4 637.2v-4.5a2.1 3.3 0 1 1 .1 0M722.5 637.8v-4.2a2 3.1 0 1 1 .1 0M705.8 624.3v-4.5a2.1 3.3 0 1 1 .1 0M710.9 624.9v-4.2a2 3.1 0 1 1 .1 0M774.8 635.7v-4.5a2.1 3.3 0 1 1 .1 0M779.9 636.3v-4.2a2 3.1 0 1 1 .1 0M836.8 635.2v-4.5a2.1 3.3 0 1 1 .1 0M841.9 635.8v-4.2a2 3.1 0 1 1 .1 0M836.5 618.9v-4.5a2.1 3.3 0 1 1 .1 0M841.6 619.5v-4.2a2 3.1 0 1 1 .1 0M876.4 622.4v-4.5a2.1 3.3 0 1 1 .1 0M881.5 623.0v-4.2a2 3.1 0 1 1 .1 0M912.3 616.9v-4.5a2.1 3.3 0 1 1 .1 0M917.4 617.5v-4.2a2 3.1 0 1 1 .1 0M910.2 644.9v-4.5a2.1 3.3 0 1 1 .1 0M915.3 645.5v-4.2a2 3.1 0 1 1 .1 0M980.9 620.4v-4.5a2.1 3.3 0 1 1 .1 0M986.0 621.0v-4.2a2 3.1 0 1 1 .1 0M999.2 628.3v-4.5a2.1 3.3 0 1 1 .1 0M1004.3 628.9v-4.2a2 3.1 0 1 1 .1 0M1017.7 641.6v-4.5a2.1 3.3 0 1 1 .1 0M1022.8 642.2v-4.2a2 3.1 0 1 1 .1 0M1103.1 610.5v-4.5a2.1 3.3 0 1 1 .1 0M1108.2 611.1v-4.2a2 3.1 0 1 1 .1 0M1147.5 643.0v-4.5a2.1 3.3 0 1 1 .1 0M1152.6 643.6v-4.2a2 3.1 0 1 1 .1 0M1165.3 618.9v-4.5a2.1 3.3 0 1 1 .1 0M1170.4 619.5v-4.2a2 3.1 0 1 1 .1 0M1171.8 648.8v-4.5a2.1 3.3 0 1 1 .1 0M1176.9 649.4v-4.2a2 3.1 0 1 1 .1 0M1241.2 646.9v-4.5a2.1 3.3 0 1 1 .1 0M1246.3 647.5v-4.2a2 3.1 0 1 1 .1 0M1253.6 625.8v-4.5a2.1 3.3 0 1 1 .1 0M1258.7 626.4v-4.2a2 3.1 0 1 1 .1 0M1278.9 640.2v-4.5a2.1 3.3 0 1 1 .1 0M1284.0 640.8v-4.2a2 3.1 0 1 1 .1 0M1324.2 632.2v-4.5a2.1 3.3 0 1 1 .1 0M1329.3 632.8v-4.2a2 3.1 0 1 1 .1 0M1381.1 622.2v-4.5a2.1 3.3 0 1 1 .1 0M1386.2 622.8v-4.2a2 3.1 0 1 1 .1 0M1380.5 617.2v-4.5a2.1 3.3 0 1 1 .1 0M1385.6 617.8v-4.2a2 3.1 0 1 1 .1 0M1449.9 634.7v-4.5a2.1 3.3 0 1 1 .1 0M1455.0 635.3v-4.2a2 3.1 0 1 1 .1 0M1424.0 620.4v-4.5a2.1 3.3 0 1 1 .1 0M1429.1 621.0v-4.2a2 3.1 0 1 1 .1 0M1505.3 614.1v-4.5a2.1 3.3 0 1 1 .1 0M1510.4 614.7v-4.2a2 3.1 0 1 1 .1 0M1484.4 641.0v-4.5a2.1 3.3 0 1 1 .1 0M1489.5 641.6v-4.2a2 3.1 0 1 1 .1 0M1551.6 608.8v-4.5a2.1 3.3 0 1 1 .1 0M1556.7 609.4v-4.2a2 3.1 0 1 1 .1 0M1544.9 630.2v-4.5a2.1 3.3 0 1 1 .1 0M1550.0 630.8v-4.2a2 3.1 0 1 1 .1 0M1607.6 610.0v-4.5a2.1 3.3 0 1 1 .1 0M1612.7 610.6v-4.2a2 3.1 0 1 1 .1 0M1610.1 624.0v-4.5a2.1 3.3 0 1 1 .1 0M1615.2 624.6v-4.2a2 3.1 0 1 1 .1 0M344.0 671.5v-4.5a2.1 3.3 0 1 1 .1 0M349.1 672.1v-4.2a2 3.1 0 1 1 .1 0M397.2 682.9v-4.5a2.1 3.3 0 1 1 .1 0M402.3 683.5v-4.2a2 3.1 0 1 1 .1 0M401.8 696.0v-4.5a2.1 3.3 0 1 1 .1 0M406.9 696.6v-4.2a2 3.1 0 1 1 .1 0M479.4 674.0v-4.5a2.1 3.3 0 1 1 .1 0M484.5 674.6v-4.2a2 3.1 0 1 1 .1 0M467.5 667.0v-4.5a2.1 3.3 0 1 1 .1 0M472.6 667.6v-4.2a2 3.1 0 1 1 .1 0M487.8 697.7v-4.5a2.1 3.3 0 1 1 .1 0M492.9 698.3v-4.2a2 3.1 0 1 1 .1 0M523.6 675.9v-4.5a2.1 3.3 0 1 1 .1 0M528.7 676.5v-4.2a2 3.1 0 1 1 .1 0M578.3 678.3v-4.5a2.1 3.3 0 1 1 .1 0M583.4 678.9v-4.2a2 3.1 0 1 1 .1 0M540.2 682.3v-4.5a2.1 3.3 0 1 1 .1 0M545.3 682.9v-4.2a2 3.1 0 1 1 .1 0M619.7 698.0v-4.5a2.1 3.3 0 1 1 .1 0M624.8 698.6v-4.2a2 3.1 0 1 1 .1 0M618.9 674.3v-4.5a2.1 3.3 0 1 1 .1 0M624.0 674.9v-4.2a2 3.1 0 1 1 .1 0M665.7 664.4v-4.5a2.1 3.3 0 1 1 .1 0M670.8 665.0v-4.2a2 3.1 0 1 1 .1 0M666.4 698.7v-4.5a2.1 3.3 0 1 1 .1 0M671.5 699.3v-4.2a2 3.1 0 1 1 .1 0M700.3 679.6v-4.5a2.1 3.3 0 1 1 .1 0M705.4 680.2v-4.2a2 3.1 0 1 1 .1 0M790.0 666.7v-4.5a2.1 3.3 0 1 1 .1 0M795.1 667.3v-4.2a2 3.1 0 1 1 .1 0M789.0 700.9v-4.5a2.1 3.3 0 1 1 .1 0M794.1 701.5v-4.2a2 3.1 0 1 1 .1 0M820.7 660.3v-4.5a2.1 3.3 0 1 1 .1 0M825.8 660.9v-4.2a2 3.1 0 1 1 .1 0M868.6 697.8v-4.5a2.1 3.3 0 1 1 .1 0M873.7 698.4v-4.2a2 3.1 0 1 1 .1 0M939.8 665.1v-4.5a2.1 3.3 0 1 1 .1 0M944.9 665.7v-4.2a2 3.1 0 1 1 .1 0M965.3 675.8v-4.5a2.1 3.3 0 1 1 .1 0M970.4 676.4v-4.2a2 3.1 0 1 1 .1 0M1044.0 666.1v-4.5a2.1 3.3 0 1 1 .1 0M1049.1 666.7v-4.2a2 3.1 0 1 1 .1 0M1025.1 680.8v-4.5a2.1 3.3 0 1 1 .1 0M1030.2 681.4v-4.2a2 3.1 0 1 1 .1 0M1076.4 663.4v-4.5a2.1 3.3 0 1 1 .1 0M1081.5 664.0v-4.2a2 3.1 0 1 1 .1 0M1091.4 697.5v-4.5a2.1 3.3 0 1 1 .1 0M1096.5 698.1v-4.2a2 3.1 0 1 1 .1 0M1113.3 682.7v-4.5a2.1 3.3 0 1 1 .1 0M1118.4 683.3v-4.2a2 3.1 0 1 1 .1 0M1165.2 694.9v-4.5a2.1 3.3 0 1 1 .1 0M1170.3 695.5v-4.2a2 3.1 0 1 1 .1 0M1189.9 682.2v-4.5a2.1 3.3 0 1 1 .1 0M1195.0 682.8v-4.2a2 3.1 0 1 1 .1 0M1243.1 671.5v-4.5a2.1 3.3 0 1 1 .1 0M1248.2 672.1v-4.2a2 3.1 0 1 1 .1 0M1241.1 676.7v-4.5a2.1 3.3 0 1 1 .1 0M1246.2 677.3v-4.2a2 3.1 0 1 1 .1 0M1296.5 677.7v-4.5a2.1 3.3 0 1 1 .1 0M1301.6 678.3v-4.2a2 3.1 0 1 1 .1 0M1268.5 685.2v-4.5a2.1 3.3 0 1 1 .1 0M1273.6 685.8v-4.2a2 3.1 0 1 1 .1 0M1341.0 668.4v-4.5a2.1 3.3 0 1 1 .1 0M1346.1 669.0v-4.2a2 3.1 0 1 1 .1 0M1405.8 678.2v-4.5a2.1 3.3 0 1 1 .1 0M1410.9 678.8v-4.2a2 3.1 0 1 1 .1 0M1392.3 662.7v-4.5a2.1 3.3 0 1 1 .1 0M1397.4 663.3v-4.2a2 3.1 0 1 1 .1 0M1429.2 676.9v-4.5a2.1 3.3 0 1 1 .1 0M1434.3 677.5v-4.2a2 3.1 0 1 1 .1 0M1442.9 680.4v-4.5a2.1 3.3 0 1 1 .1 0M1448.0 681.0v-4.2a2 3.1 0 1 1 .1 0M1477.3 686.0v-4.5a2.1 3.3 0 1 1 .1 0M1482.4 686.6v-4.2a2 3.1 0 1 1 .1 0M1507.8 692.2v-4.5a2.1 3.3 0 1 1 .1 0M1512.9 692.8v-4.2a2 3.1 0 1 1 .1 0M1550.0 660.4v-4.5a2.1 3.3 0 1 1 .1 0M1555.1 661.0v-4.2a2 3.1 0 1 1 .1 0M1596.1 699.8v-4.5a2.1 3.3 0 1 1 .1 0M1601.2 700.4v-4.2a2 3.1 0 1 1 .1 0M1617.2 701.8v-4.5a2.1 3.3 0 1 1 .1 0M1622.3 702.4v-4.2a2 3.1 0 1 1 .1 0M363.7 745.9v-4.5a2.1 3.3 0 1 1 .1 0M368.8 746.5v-4.2a2 3.1 0 1 1 .1 0M374.7 731.6v-4.5a2.1 3.3 0 1 1 .1 0M379.8 732.2v-4.2a2 3.1 0 1 1 .1 0M425.6 750.3v-4.5a2.1 3.3 0 1 1 .1 0M430.7 750.9v-4.2a2 3.1 0 1 1 .1 0M418.2 750.9v-4.5a2.1 3.3 0 1 1 .1 0M423.3 751.5v-4.2a2 3.1 0 1 1 .1 0M438.4 725.4v-4.5a2.1 3.3 0 1 1 .1 0M443.5 726.0v-4.2a2 3.1 0 1 1 .1 0M494.5 749.4v-4.5a2.1 3.3 0 1 1 .1 0M499.6 750.0v-4.2a2 3.1 0 1 1 .1 0M523.4 716.3v-4.5a2.1 3.3 0 1 1 .1 0M528.5 716.9v-4.2a2 3.1 0 1 1 .1 0M561.6 750.5v-4.5a2.1 3.3 0 1 1 .1 0M566.7 751.1v-4.2a2 3.1 0 1 1 .1 0M551.1 732.3v-4.5a2.1 3.3 0 1 1 .1 0M556.2 732.9v-4.2a2 3.1 0 1 1 .1 0M605.5 711.6v-4.5a2.1 3.3 0 1 1 .1 0M610.6 712.2v-4.2a2 3.1 0 1 1 .1 0M598.6 751.2v-4.5a2.1 3.3 0 1 1 .1 0M603.7 751.8v-4.2a2 3.1 0 1 1 .1 0M673.4 749.4v-4.5a2.1 3.3 0 1 1 .1 0M678.5 750.0v-4.2a2 3.1 0 1 1 .1 0M678.0 715.1v-4.5a2.1 3.3 0 1 1 .1 0M683.1 715.7v-4.2a2 3.1 0 1 1 .1 0M718.9 738.0v-4.5a2.1 3.3 0 1 1 .1 0M724.0 738.6v-4.2a2 3.1 0 1 1 .1 0M733.9 734.4v-4.5a2.1 3.3 0 1 1 .1 0M739.0 735.0v-4.2a2 3.1 0 1 1 .1 0M773.0 748.8v-4.5a2.1 3.3 0 1 1 .1 0M778.1 749.4v-4.2a2 3.1 0 1 1 .1 0M791.2 737.7v-4.5a2.1 3.3 0 1 1 .1 0M796.3 738.3v-4.2a2 3.1 0 1 1 .1 0M816.8 745.1v-4.5a2.1 3.3 0 1 1 .1 0M821.9 745.7v-4.2a2 3.1 0 1 1 .1 0M843.1 735.4v-4.5a2.1 3.3 0 1 1 .1 0M848.2 736.0v-4.2a2 3.1 0 1 1 .1 0M867.4 743.6v-4.5a2.1 3.3 0 1 1 .1 0M872.5 744.2v-4.2a2 3.1 0 1 1 .1 0M859.3 742.7v-4.5a2.1 3.3 0 1 1 .1 0M864.4 743.3v-4.2a2 3.1 0 1 1 .1 0M905.6 746.1v-4.5a2.1 3.3 0 1 1 .1 0M910.7 746.7v-4.2a2 3.1 0 1 1 .1 0M931.6 753.3v-4.5a2.1 3.3 0 1 1 .1 0M936.7 753.9v-4.2a2 3.1 0 1 1 .1 0M981.3 739.2v-4.5a2.1 3.3 0 1 1 .1 0M986.4 739.8v-4.2a2 3.1 0 1 1 .1 0M955.6 711.5v-4.5a2.1 3.3 0 1 1 .1 0M960.7 712.1v-4.2a2 3.1 0 1 1 .1 0M1014.1 737.1v-4.5a2.1 3.3 0 1 1 .1 0M1019.2 737.7v-4.2a2 3.1 0 1 1 .1 0M1030.1 749.4v-4.5a2.1 3.3 0 1 1 .1 0M1035.2 750.0v-4.2a2 3.1 0 1 1 .1 0M1065.3 720.0v-4.5a2.1 3.3 0 1 1 .1 0M1070.4 720.6v-4.2a2 3.1 0 1 1 .1 0M1112.5 710.1v-4.5a2.1 3.3 0 1 1 .1 0M1117.6 710.7v-4.2a2 3.1 0 1 1 .1 0M1116.2 725.7v-4.5a2.1 3.3 0 1 1 .1 0M1121.3 726.3v-4.2a2 3.1 0 1 1 .1 0M1173.4 735.7v-4.5a2.1 3.3 0 1 1 .1 0M1178.5 736.3v-4.2a2 3.1 0 1 1 .1 0M1224.5 737.5v-4.5a2.1 3.3 0 1 1 .1 0M1229.6 738.1v-4.2a2 3.1 0 1 1 .1 0M1273.4 751.2v-4.5a2.1 3.3 0 1 1 .1 0M1278.5 751.8v-4.2a2 3.1 0 1 1 .1 0M1274.1 714.2v-4.5a2.1 3.3 0 1 1 .1 0M1279.2 714.8v-4.2a2 3.1 0 1 1 .1 0M1347.6 748.3v-4.5a2.1 3.3 0 1 1 .1 0M1352.7 748.9v-4.2a2 3.1 0 1 1 .1 0M1389.2 721.6v-4.5a2.1 3.3 0 1 1 .1 0M1394.3 722.2v-4.2a2 3.1 0 1 1 .1 0M1399.9 734.7v-4.5a2.1 3.3 0 1 1 .1 0M1405.0 735.3v-4.2a2 3.1 0 1 1 .1 0M1438.9 738.4v-4.5a2.1 3.3 0 1 1 .1 0M1444.0 739.0v-4.2a2 3.1 0 1 1 .1 0M1464.7 742.3v-4.5a2.1 3.3 0 1 1 .1 0M1469.8 742.9v-4.2a2 3.1 0 1 1 .1 0M1486.4 749.8v-4.5a2.1 3.3 0 1 1 .1 0M1491.5 750.4v-4.2a2 3.1 0 1 1 .1 0M1498.9 727.9v-4.5a2.1 3.3 0 1 1 .1 0M1504.0 728.5v-4.2a2 3.1 0 1 1 .1 0M1538.0 712.6v-4.5a2.1 3.3 0 1 1 .1 0M1543.1 713.2v-4.2a2 3.1 0 1 1 .1 0M1580.0 734.2v-4.5a2.1 3.3 0 1 1 .1 0M1585.1 734.8v-4.2a2 3.1 0 1 1 .1 0M337.8 770.8v-4.5a2.1 3.3 0 1 1 .1 0M342.9 771.4v-4.2a2 3.1 0 1 1 .1 0M405.8 790.2v-4.5a2.1 3.3 0 1 1 .1 0M410.9 790.8v-4.2a2 3.1 0 1 1 .1 0M443.2 775.6v-4.5a2.1 3.3 0 1 1 .1 0M448.3 776.2v-4.2a2 3.1 0 1 1 .1 0M437.6 801.1v-4.5a2.1 3.3 0 1 1 .1 0M442.7 801.7v-4.2a2 3.1 0 1 1 .1 0M522.0 793.5v-4.5a2.1 3.3 0 1 1 .1 0M527.1 794.1v-4.2a2 3.1 0 1 1 .1 0M524.7 794.8v-4.5a2.1 3.3 0 1 1 .1 0M529.8 795.4v-4.2a2 3.1 0 1 1 .1 0M560.0 794.6v-4.5a2.1 3.3 0 1 1 .1 0M565.1 795.2v-4.2a2 3.1 0 1 1 .1 0M601.4 766.6v-4.5a2.1 3.3 0 1 1 .1 0M606.5 767.2v-4.2a2 3.1 0 1 1 .1 0M593.2 776.8v-4.5a2.1 3.3 0 1 1 .1 0M598.3 777.4v-4.2a2 3.1 0 1 1 .1 0M676.5 792.6v-4.5a2.1 3.3 0 1 1 .1 0M681.6 793.2v-4.2a2 3.1 0 1 1 .1 0M726.8 773.7v-4.5a2.1 3.3 0 1 1 .1 0M731.9 774.3v-4.2a2 3.1 0 1 1 .1 0M766.7 796.7v-4.5a2.1 3.3 0 1 1 .1 0M771.8 797.3v-4.2a2 3.1 0 1 1 .1 0M811.2 790.2v-4.5a2.1 3.3 0 1 1 .1 0M816.3 790.8v-4.2a2 3.1 0 1 1 .1 0M861.0 800.7v-4.5a2.1 3.3 0 1 1 .1 0M866.1 801.3v-4.2a2 3.1 0 1 1 .1 0M863.0 772.4v-4.5a2.1 3.3 0 1 1 .1 0M868.1 773.0v-4.2a2 3.1 0 1 1 .1 0M936.2 803.6v-4.5a2.1 3.3 0 1 1 .1 0M941.3 804.2v-4.2a2 3.1 0 1 1 .1 0M969.9 800.7v-4.5a2.1 3.3 0 1 1 .1 0M975.0 801.3v-4.2a2 3.1 0 1 1 .1 0M966.0 801.9v-4.5a2.1 3.3 0 1 1 .1 0M971.1 802.5v-4.2a2 3.1 0 1 1 .1 0M1035.3 792.5v-4.5a2.1 3.3 0 1 1 .1 0M1040.4 793.1v-4.2a2 3.1 0 1 1 .1 0M1102.6 782.7v-4.5a2.1 3.3 0 1 1 .1 0M1107.7 783.3v-4.2a2 3.1 0 1 1 .1 0M1142.2 799.7v-4.5a2.1 3.3 0 1 1 .1 0M1147.3 800.3v-4.2a2 3.1 0 1 1 .1 0M1143.4 787.1v-4.5a2.1 3.3 0 1 1 .1 0M1148.5 787.7v-4.2a2 3.1 0 1 1 .1 0M1177.0 771.3v-4.5a2.1 3.3 0 1 1 .1 0M1182.1 771.9v-4.2a2 3.1 0 1 1 .1 0M1218.9 802.1v-4.5a2.1 3.3 0 1 1 .1 0M1224.0 802.7v-4.2a2 3.1 0 1 1 .1 0M1216.7 766.7v-4.5a2.1 3.3 0 1 1 .1 0M1221.8 767.3v-4.2a2 3.1 0 1 1 .1 0M1308.4 777.2v-4.5a2.1 3.3 0 1 1 .1 0M1313.5 777.8v-4.2a2 3.1 0 1 1 .1 0M1268.8 763.8v-4.5a2.1 3.3 0 1 1 .1 0M1273.9 764.4v-4.2a2 3.1 0 1 1 .1 0M1350.0 789.9v-4.5a2.1 3.3 0 1 1 .1 0M1355.1 790.5v-4.2a2 3.1 0 1 1 .1 0M1403.9 764.9v-4.5a2.1 3.3 0 1 1 .1 0M1409.0 765.5v-4.2a2 3.1 0 1 1 .1 0M1439.5 798.0v-4.5a2.1 3.3 0 1 1 .1 0M1444.6 798.6v-4.2a2 3.1 0 1 1 .1 0M1514.7 764.9v-4.5a2.1 3.3 0 1 1 .1 0M1519.8 765.5v-4.2a2 3.1 0 1 1 .1 0M1567.7 803.6v-4.5a2.1 3.3 0 1 1 .1 0M1572.8 804.2v-4.2a2 3.1 0 1 1 .1 0M1536.6 766.9v-4.5a2.1 3.3 0 1 1 .1 0M1541.7 767.5v-4.2a2 3.1 0 1 1 .1 0M1581.0 799.3v-4.5a2.1 3.3 0 1 1 .1 0M1586.1 799.9v-4.2a2 3.1 0 1 1 .1 0M359.4 850.3v-4.5a2.1 3.3 0 1 1 .1 0M364.5 850.9v-4.2a2 3.1 0 1 1 .1 0M396.1 818.4v-4.5a2.1 3.3 0 1 1 .1 0M401.2 819.0v-4.2a2 3.1 0 1 1 .1 0M416.8 823.0v-4.5a2.1 3.3 0 1 1 .1 0M421.9 823.6v-4.2a2 3.1 0 1 1 .1 0M449.5 832.6v-4.5a2.1 3.3 0 1 1 .1 0M454.6 833.2v-4.2a2 3.1 0 1 1 .1 0M446.8 826.4v-4.5a2.1 3.3 0 1 1 .1 0M451.9 827.0v-4.2a2 3.1 0 1 1 .1 0M519.0 830.2v-4.5a2.1 3.3 0 1 1 .1 0M524.1 830.8v-4.2a2 3.1 0 1 1 .1 0M529.9 836.2v-4.5a2.1 3.3 0 1 1 .1 0M535.0 836.8v-4.2a2 3.1 0 1 1 .1 0M577.0 841.2v-4.5a2.1 3.3 0 1 1 .1 0M582.1 841.8v-4.2a2 3.1 0 1 1 .1 0M557.7 833.2v-4.5a2.1 3.3 0 1 1 .1 0M562.8 833.8v-4.2a2 3.1 0 1 1 .1 0M625.5 829.3v-4.5a2.1 3.3 0 1 1 .1 0M630.6 829.9v-4.2a2 3.1 0 1 1 .1 0M667.2 823.5v-4.5a2.1 3.3 0 1 1 .1 0M672.3 824.1v-4.2a2 3.1 0 1 1 .1 0M699.5 850.1v-4.5a2.1 3.3 0 1 1 .1 0M704.6 850.7v-4.2a2 3.1 0 1 1 .1 0M695.6 822.9v-4.5a2.1 3.3 0 1 1 .1 0M700.7 823.5v-4.2a2 3.1 0 1 1 .1 0M781.0 857.0v-4.5a2.1 3.3 0 1 1 .1 0M786.1 857.6v-4.2a2 3.1 0 1 1 .1 0M769.1 835.6v-4.5a2.1 3.3 0 1 1 .1 0M774.2 836.2v-4.2a2 3.1 0 1 1 .1 0M834.6 822.1v-4.5a2.1 3.3 0 1 1 .1 0M839.7 822.7v-4.2a2 3.1 0 1 1 .1 0M866.8 850.6v-4.5a2.1 3.3 0 1 1 .1 0M871.9 851.2v-4.2a2 3.1 0 1 1 .1 0M893.0 826.5v-4.5a2.1 3.3 0 1 1 .1 0M898.1 827.1v-4.2a2 3.1 0 1 1 .1 0M912.9 844.8v-4.5a2.1 3.3 0 1 1 .1 0M918.0 845.4v-4.2a2 3.1 0 1 1 .1 0M960.3 842.0v-4.5a2.1 3.3 0 1 1 .1 0M965.4 842.6v-4.2a2 3.1 0 1 1 .1 0M990.2 844.7v-4.5a2.1 3.3 0 1 1 .1 0M995.3 845.3v-4.2a2 3.1 0 1 1 .1 0M1042.1 841.6v-4.5a2.1 3.3 0 1 1 .1 0M1047.2 842.2v-4.2a2 3.1 0 1 1 .1 0M1025.2 831.4v-4.5a2.1 3.3 0 1 1 .1 0M1030.3 832.0v-4.2a2 3.1 0 1 1 .1 0M1098.7 817.8v-4.5a2.1 3.3 0 1 1 .1 0M1103.8 818.4v-4.2a2 3.1 0 1 1 .1 0M1112.6 823.1v-4.5a2.1 3.3 0 1 1 .1 0M1117.7 823.7v-4.2a2 3.1 0 1 1 .1 0M1151.2 836.1v-4.5a2.1 3.3 0 1 1 .1 0M1156.3 836.7v-4.2a2 3.1 0 1 1 .1 0M1180.2 852.9v-4.5a2.1 3.3 0 1 1 .1 0M1185.3 853.5v-4.2a2 3.1 0 1 1 .1 0M1183.8 837.4v-4.5a2.1 3.3 0 1 1 .1 0M1188.9 838.0v-4.2a2 3.1 0 1 1 .1 0M1248.7 847.1v-4.5a2.1 3.3 0 1 1 .1 0M1253.8 847.7v-4.2a2 3.1 0 1 1 .1 0M1282.8 828.4v-4.5a2.1 3.3 0 1 1 .1 0M1287.9 829.0v-4.2a2 3.1 0 1 1 .1 0M1304.6 843.1v-4.5a2.1 3.3 0 1 1 .1 0M1309.7 843.7v-4.2a2 3.1 0 1 1 .1 0M1352.1 821.5v-4.5a2.1 3.3 0 1 1 .1 0M1357.2 822.1v-4.2a2 3.1 0 1 1 .1 0M1353.5 839.5v-4.5a2.1 3.3 0 1 1 .1 0M1358.6 840.1v-4.2a2 3.1 0 1 1 .1 0M1377.0 834.3v-4.5a2.1 3.3 0 1 1 .1 0M1382.1 834.9v-4.2a2 3.1 0 1 1 .1 0M1434.0 822.4v-4.5a2.1 3.3 0 1 1 .1 0M1439.1 823.0v-4.2a2 3.1 0 1 1 .1 0M1454.4 851.1v-4.5a2.1 3.3 0 1 1 .1 0M1459.5 851.7v-4.2a2 3.1 0 1 1 .1 0M1482.3 820.9v-4.5a2.1 3.3 0 1 1 .1 0M1487.4 821.5v-4.2a2 3.1 0 1 1 .1 0M1489.9 837.0v-4.5a2.1 3.3 0 1 1 .1 0M1495.0 837.6v-4.2a2 3.1 0 1 1 .1 0M1534.6 828.4v-4.5a2.1 3.3 0 1 1 .1 0M1539.7 829.0v-4.2a2 3.1 0 1 1 .1 0M1570.4 846.1v-4.5a2.1 3.3 0 1 1 .1 0M1575.5 846.7v-4.2a2 3.1 0 1 1 .1 0M1584.0 856.3v-4.5a2.1 3.3 0 1 1 .1 0M1589.1 856.9v-4.2a2 3.1 0 1 1 .1 0M1596.4 857.3v-4.5a2.1 3.3 0 1 1 .1 0M1601.5 857.9v-4.2a2 3.1 0 1 1 .1 0M366.5 898.3v-4.5a2.1 3.3 0 1 1 .1 0M371.6 898.9v-4.2a2 3.1 0 1 1 .1 0M340.1 894.1v-4.5a2.1 3.3 0 1 1 .1 0M345.2 894.7v-4.2a2 3.1 0 1 1 .1 0M388.2 875.1v-4.5a2.1 3.3 0 1 1 .1 0M393.3 875.7v-4.2a2 3.1 0 1 1 .1 0M385.0 883.6v-4.5a2.1 3.3 0 1 1 .1 0M390.1 884.2v-4.2a2 3.1 0 1 1 .1 0M470.3 896.5v-4.5a2.1 3.3 0 1 1 .1 0M475.4 897.1v-4.2a2 3.1 0 1 1 .1 0M515.3 886.4v-4.5a2.1 3.3 0 1 1 .1 0M520.4 887.0v-4.2a2 3.1 0 1 1 .1 0M514.1 883.8v-4.5a2.1 3.3 0 1 1 .1 0M519.2 884.4v-4.2a2 3.1 0 1 1 .1 0M572.1 906.0v-4.5a2.1 3.3 0 1 1 .1 0M577.2 906.6v-4.2a2 3.1 0 1 1 .1 0M564.8 899.0v-4.5a2.1 3.3 0 1 1 .1 0M569.9 899.6v-4.2a2 3.1 0 1 1 .1 0M610.0 876.1v-4.5a2.1 3.3 0 1 1 .1 0M615.1 876.7v-4.2a2 3.1 0 1 1 .1 0M682.2 900.1v-4.5a2.1 3.3 0 1 1 .1 0M687.3 900.7v-4.2a2 3.1 0 1 1 .1 0M733.0 895.9v-4.5a2.1 3.3 0 1 1 .1 0M738.1 896.5v-4.2a2 3.1 0 1 1 .1 0M767.5 879.8v-4.5a2.1 3.3 0 1 1 .1 0M772.6 880.4v-4.2a2 3.1 0 1 1 .1 0M803.8 884.5v-4.5a2.1 3.3 0 1 1 .1 0M808.9 885.1v-4.2a2 3.1 0 1 1 .1 0M882.9 893.7v-4.5a2.1 3.3 0 1 1 .1 0M888.0 894.3v-4.2a2 3.1 0 1 1 .1 0M870.1 886.0v-4.5a2.1 3.3 0 1 1 .1 0M875.2 886.6v-4.2a2 3.1 0 1 1 .1 0M930.8 884.0v-4.5a2.1 3.3 0 1 1 .1 0M935.9 884.6v-4.2a2 3.1 0 1 1 .1 0M996.4 874.1v-4.5a2.1 3.3 0 1 1 .1 0M1001.5 874.7v-4.2a2 3.1 0 1 1 .1 0M1041.7 883.1v-4.5a2.1 3.3 0 1 1 .1 0M1046.8 883.7v-4.2a2 3.1 0 1 1 .1 0M1102.4 867.7v-4.5a2.1 3.3 0 1 1 .1 0M1107.5 868.3v-4.2a2 3.1 0 1 1 .1 0M1118.6 900.4v-4.5a2.1 3.3 0 1 1 .1 0M1123.7 901.0v-4.2a2 3.1 0 1 1 .1 0M1186.3 870.4v-4.5a2.1 3.3 0 1 1 .1 0M1191.4 871.0v-4.2a2 3.1 0 1 1 .1 0M1239.3 897.6v-4.5a2.1 3.3 0 1 1 .1 0M1244.4 898.2v-4.2a2 3.1 0 1 1 .1 0M1295.6 902.5v-4.5a2.1 3.3 0 1 1 .1 0M1300.7 903.1v-4.2a2 3.1 0 1 1 .1 0M1337.6 907.7v-4.5a2.1 3.3 0 1 1 .1 0M1342.7 908.3v-4.2a2 3.1 0 1 1 .1 0M1349.6 883.3v-4.5a2.1 3.3 0 1 1 .1 0M1354.7 883.9v-4.2a2 3.1 0 1 1 .1 0M1405.1 871.4v-4.5a2.1 3.3 0 1 1 .1 0M1410.2 872.0v-4.2a2 3.1 0 1 1 .1 0M1439.1 868.5v-4.5a2.1 3.3 0 1 1 .1 0M1444.2 869.1v-4.2a2 3.1 0 1 1 .1 0M1441.1 866.6v-4.5a2.1 3.3 0 1 1 .1 0M1446.2 867.2v-4.2a2 3.1 0 1 1 .1 0M1493.9 884.5v-4.5a2.1 3.3 0 1 1 .1 0M1499.0 885.1v-4.2a2 3.1 0 1 1 .1 0M1543.0 877.7v-4.5a2.1 3.3 0 1 1 .1 0M1548.1 878.3v-4.2a2 3.1 0 1 1 .1 0M1560.1 907.4v-4.5a2.1 3.3 0 1 1 .1 0M1565.2 908.0v-4.2a2 3.1 0 1 1 .1 0M1602.7 875.6v-4.5a2.1 3.3 0 1 1 .1 0M1607.8 876.2v-4.2a2 3.1 0 1 1 .1 0M348.7 927.3v-4.5a2.1 3.3 0 1 1 .1 0M353.8 927.9v-4.2a2 3.1 0 1 1 .1 0M365.7 953.6v-4.5a2.1 3.3 0 1 1 .1 0M370.8 954.2v-4.2a2 3.1 0 1 1 .1 0M411.4 938.6v-4.5a2.1 3.3 0 1 1 .1 0M416.5 939.2v-4.2a2 3.1 0 1 1 .1 0M445.4 960.4v-4.5a2.1 3.3 0 1 1 .1 0M450.5 961.0v-4.2a2 3.1 0 1 1 .1 0M463.6 954.0v-4.5a2.1 3.3 0 1 1 .1 0M468.7 954.6v-4.2a2 3.1 0 1 1 .1 0M523.4 938.6v-4.5a2.1 3.3 0 1 1 .1 0M528.5 939.2v-4.2a2 3.1 0 1 1 .1 0M511.6 923.5v-4.5a2.1 3.3 0 1 1 .1 0M516.7 924.1v-4.2a2 3.1 0 1 1 .1 0M576.2 933.6v-4.5a2.1 3.3 0 1 1 .1 0M581.3 934.2v-4.2a2 3.1 0 1 1 .1 0M603.3 934.6v-4.5a2.1 3.3 0 1 1 .1 0M608.4 935.2v-4.2a2 3.1 0 1 1 .1 0M610.2 926.2v-4.5a2.1 3.3 0 1 1 .1 0M615.3 926.8v-4.2a2 3.1 0 1 1 .1 0M643.6 949.8v-4.5a2.1 3.3 0 1 1 .1 0M648.7 950.4v-4.2a2 3.1 0 1 1 .1 0M654.3 931.3v-4.5a2.1 3.3 0 1 1 .1 0M659.4 931.9v-4.2a2 3.1 0 1 1 .1 0M716.6 936.9v-4.5a2.1 3.3 0 1 1 .1 0M721.7 937.5v-4.2a2 3.1 0 1 1 .1 0M776.5 933.9v-4.5a2.1 3.3 0 1 1 .1 0M781.6 934.5v-4.2a2 3.1 0 1 1 .1 0M837.1 920.5v-4.5a2.1 3.3 0 1 1 .1 0M842.2 921.1v-4.2a2 3.1 0 1 1 .1 0M891.4 952.5v-4.5a2.1 3.3 0 1 1 .1 0M896.5 953.1v-4.2a2 3.1 0 1 1 .1 0M888.1 945.9v-4.5a2.1 3.3 0 1 1 .1 0M893.2 946.5v-4.2a2 3.1 0 1 1 .1 0M904.2 918.5v-4.5a2.1 3.3 0 1 1 .1 0M909.3 919.1v-4.2a2 3.1 0 1 1 .1 0M984.4 929.0v-4.5a2.1 3.3 0 1 1 .1 0M989.5 929.6v-4.2a2 3.1 0 1 1 .1 0M961.8 928.3v-4.5a2.1 3.3 0 1 1 .1 0M966.9 928.9v-4.2a2 3.1 0 1 1 .1 0M1041.7 933.2v-4.5a2.1 3.3 0 1 1 .1 0M1046.8 933.8v-4.2a2 3.1 0 1 1 .1 0M1047.3 952.8v-4.5a2.1 3.3 0 1 1 .1 0M1052.4 953.4v-4.2a2 3.1 0 1 1 .1 0M1066.9 957.2v-4.5a2.1 3.3 0 1 1 .1 0M1072.0 957.8v-4.2a2 3.1 0 1 1 .1 0M1145.9 947.4v-4.5a2.1 3.3 0 1 1 .1 0M1151.0 948.0v-4.2a2 3.1 0 1 1 .1 0M1198.2 954.9v-4.5a2.1 3.3 0 1 1 .1 0M1203.3 955.5v-4.2a2 3.1 0 1 1 .1 0M1194.0 941.4v-4.5a2.1 3.3 0 1 1 .1 0M1199.1 942.0v-4.2a2 3.1 0 1 1 .1 0M1248.1 937.3v-4.5a2.1 3.3 0 1 1 .1 0M1253.2 937.9v-4.2a2 3.1 0 1 1 .1 0M1291.9 929.6v-4.5a2.1 3.3 0 1 1 .1 0M1297.0 930.2v-4.2a2 3.1 0 1 1 .1 0M1273.6 939.7v-4.5a2.1 3.3 0 1 1 .1 0M1278.7 940.3v-4.2a2 3.1 0 1 1 .1 0M1322.1 938.6v-4.5a2.1 3.3 0 1 1 .1 0M1327.2 939.2v-4.2a2 3.1 0 1 1 .1 0M1341.1 939.9v-4.5a2.1 3.3 0 1 1 .1 0M1346.2 940.5v-4.2a2 3.1 0 1 1 .1 0M1395.2 956.0v-4.5a2.1 3.3 0 1 1 .1 0M1400.3 956.6v-4.2a2 3.1 0 1 1 .1 0M1408.5 938.6v-4.5a2.1 3.3 0 1 1 .1 0M1413.6 939.2v-4.2a2 3.1 0 1 1 .1 0M1448.3 947.3v-4.5a2.1 3.3 0 1 1 .1 0M1453.4 947.9v-4.2a2 3.1 0 1 1 .1 0M1492.0 936.4v-4.5a2.1 3.3 0 1 1 .1 0M1497.1 937.0v-4.2a2 3.1 0 1 1 .1 0M1530.8 946.0v-4.5a2.1 3.3 0 1 1 .1 0M1535.9 946.6v-4.2a2 3.1 0 1 1 .1 0M1580.8 944.8v-4.5a2.1 3.3 0 1 1 .1 0M1585.9 945.4v-4.2a2 3.1 0 1 1 .1 0M372.5 984.5v-4.5a2.1 3.3 0 1 1 .1 0M377.6 985.1v-4.2a2 3.1 0 1 1 .1 0M406.0 991.3v-4.5a2.1 3.3 0 1 1 .1 0M411.1 991.9v-4.2a2 3.1 0 1 1 .1 0M437.0 1001.6v-4.5a2.1 3.3 0 1 1 .1 0M442.1 1002.2v-4.2a2 3.1 0 1 1 .1 0M502.4 1007.9v-4.5a2.1 3.3 0 1 1 .1 0M507.5 1008.5v-4.2a2 3.1 0 1 1 .1 0M508.4 993.1v-4.5a2.1 3.3 0 1 1 .1 0M513.5 993.7v-4.2a2 3.1 0 1 1 .1 0M573.4 979.3v-4.5a2.1 3.3 0 1 1 .1 0M578.5 979.9v-4.2a2 3.1 0 1 1 .1 0M558.1 994.4v-4.5a2.1 3.3 0 1 1 .1 0M563.2 995.0v-4.2a2 3.1 0 1 1 .1 0M627.9 982.9v-4.5a2.1 3.3 0 1 1 .1 0M633.0 983.5v-4.2a2 3.1 0 1 1 .1 0M661.3 992.2v-4.5a2.1 3.3 0 1 1 .1 0M666.4 992.8v-4.2a2 3.1 0 1 1 .1 0M665.8 1012.9v-4.5a2.1 3.3 0 1 1 .1 0M670.9 1013.5v-4.2a2 3.1 0 1 1 .1 0M724.3 1004.8v-4.5a2.1 3.3 0 1 1 .1 0M729.4 1005.4v-4.2a2 3.1 0 1 1 .1 0M709.5 983.2v-4.5a2.1 3.3 0 1 1 .1 0M714.6 983.8v-4.2a2 3.1 0 1 1 .1 0M773.3 997.9v-4.5a2.1 3.3 0 1 1 .1 0M778.4 998.5v-4.2a2 3.1 0 1 1 .1 0M801.3 1001.8v-4.5a2.1 3.3 0 1 1 .1 0M806.4 1002.4v-4.2a2 3.1 0 1 1 .1 0M875.5 972.2v-4.5a2.1 3.3 0 1 1 .1 0M880.6 972.8v-4.2a2 3.1 0 1 1 .1 0M851.8 978.4v-4.5a2.1 3.3 0 1 1 .1 0M856.9 979.0v-4.2a2 3.1 0 1 1 .1 0M944.0 996.8v-4.5a2.1 3.3 0 1 1 .1 0M949.1 997.4v-4.2a2 3.1 0 1 1 .1 0M990.2 1010.0v-4.5a2.1 3.3 0 1 1 .1 0M995.3 1010.6v-4.2a2 3.1 0 1 1 .1 0M1034.6 997.6v-4.5a2.1 3.3 0 1 1 .1 0M1039.7 998.2v-4.2a2 3.1 0 1 1 .1 0M1085.7 1000.0v-4.5a2.1 3.3 0 1 1 .1 0M1090.8 1000.6v-4.2a2 3.1 0 1 1 .1 0M1088.8 990.1v-4.5a2.1 3.3 0 1 1 .1 0M1093.9 990.7v-4.2a2 3.1 0 1 1 .1 0M1145.1 974.5v-4.5a2.1 3.3 0 1 1 .1 0M1150.2 975.1v-4.2a2 3.1 0 1 1 .1 0M1113.1 1004.1v-4.5a2.1 3.3 0 1 1 .1 0M1118.2 1004.7v-4.2a2 3.1 0 1 1 .1 0M1203.7 998.9v-4.5a2.1 3.3 0 1 1 .1 0M1208.8 999.5v-4.2a2 3.1 0 1 1 .1 0M1199.7 1004.6v-4.5a2.1 3.3 0 1 1 .1 0M1204.8 1005.2v-4.2a2 3.1 0 1 1 .1 0M1240.2 981.4v-4.5a2.1 3.3 0 1 1 .1 0M1245.3 982.0v-4.2a2 3.1 0 1 1 .1 0M1234.1 984.0v-4.5a2.1 3.3 0 1 1 .1 0M1239.2 984.6v-4.2a2 3.1 0 1 1 .1 0M1286.4 998.2v-4.5a2.1 3.3 0 1 1 .1 0M1291.5 998.8v-4.2a2 3.1 0 1 1 .1 0M1321.9 995.0v-4.5a2.1 3.3 0 1 1 .1 0M1327.0 995.6v-4.2a2 3.1 0 1 1 .1 0M1324.7 1005.7v-4.5a2.1 3.3 0 1 1 .1 0M1329.8 1006.3v-4.2a2 3.1 0 1 1 .1 0M1396.8 1010.4v-4.5a2.1 3.3 0 1 1 .1 0M1401.9 1011.0v-4.2a2 3.1 0 1 1 .1 0M1372.1 987.0v-4.5a2.1 3.3 0 1 1 .1 0M1377.2 987.6v-4.2a2 3.1 0 1 1 .1 0M1449.5 1011.3v-4.5a2.1 3.3 0 1 1 .1 0M1454.6 1011.9v-4.2a2 3.1 0 1 1 .1 0M1496.4 988.1v-4.5a2.1 3.3 0 1 1 .1 0M1501.5 988.7v-4.2a2 3.1 0 1 1 .1 0M1503.9 979.3v-4.5a2.1 3.3 0 1 1 .1 0M1509.0 979.9v-4.2a2 3.1 0 1 1 .1 0M1534.2 970.7v-4.5a2.1 3.3 0 1 1 .1 0M1539.3 971.3v-4.2a2 3.1 0 1 1 .1 0M1557.6 975.4v-4.5a2.1 3.3 0 1 1 .1 0M1562.7 976.0v-4.2a2 3.1 0 1 1 .1 0M1622.0 973.9v-4.5a2.1 3.3 0 1 1 .1 0M1627.1 974.5v-4.2a2 3.1 0 1 1 .1 0" fill="#2d5a3a" fill-opacity=".12" stroke="#2d5a3a" stroke-width="1.1" opacity=".22"/>
<text transform="translate(943.5 251.5) rotate(-47)" font-family="'DejaVu Sans','Liberation Sans',sans-serif" font-size="12.5" fill="#56626c" stroke="#cfe6cb" stroke-width="1.2" paint-order="stroke">Rundweg "Bannwald</text>
<polyline points="700.0,1035.0 971.0,955.0 1296.0,860.0 1561.0,782.5 1580.0,777.0" fill="none" stroke="#f3ead9" stroke-width="3.2" opacity=".85"/>
<polyline points="700.0,1035.0 971.0,955.0 1296.0,860.0 1561.0,782.5 1580.0,777.0" fill="none" stroke="#e89884" stroke-width="1.5" stroke-dasharray="2.6 3" opacity=".8"/>
<polygon points="330.0,386.0 338.0,365.0 378.5,254.5 463.7,191.0 470.0,186.0 496.0,186.0 500.0,191.0 512.0,235.5 391.0,605.5 551.0,519.8 646.0,191.0 648.0,186.0 794.0,186.0 792.5,191.0 736.2,436.0 878.8,358.0 906.5,405.5 948.5,430.5 1000.0,470.0 1200.0,500.0 1450.0,440.0 1570.0,330.0 1570.0,373.0 1561.0,371.0 1537.5,363.8 1367.0,548.0 1561.0,605.0 1570.0,607.5 1570.0,711.0 1561.0,708.0 1194.8,574.0 1030.5,722.8 1037.2,734.0 1264.8,810.2 1123.5,868.5 1028.5,862.8 816.0,930.0 791.0,937.0 761.0,890.2 718.5,874.0 700.0,860.0 480.0,845.0 461.0,854.0 421.0,862.8 376.0,892.8 399.3,998.3 401.0,1006.0 330.0,1006.0" fill="#5c9fae" stroke="#175b9c" stroke-width="3.1" stroke-linejoin="miter"/>
<polyline points="330.0,622.0 391.0,596.0 480.0,556.0 553.6,515.0 632.0,466.0 700.0,420.0 758.5,380.5 816.0,343.0 862.0,313.0 985.0,186.0" fill="none" stroke="#d8e6e2" stroke-width="2.4" stroke-dasharray="2.5 2.5" opacity=".3"/>
<polygon points="330.0,186.0 443.0,186.0 437.0,191.0 428.5,198.0 372.0,246.0 338.0,328.0 330.0,347.0" fill="#ede621" stroke="#1a1a00" stroke-width="1"/>
<polygon points="517.5,186.0 517.6,191.0 520.8,226.0 408.0,588.5 546.4,507.0 625.6,191.0 627.0,186.0" fill="#ede621" stroke="#1a1a00" stroke-width="1"/>
<polygon points="808.0,186.0 807.0,191.0 753.4,410.5 856.0,346.8 958.5,241.8 973.5,191.0 975.0,186.0" fill="#ede621" stroke="#1a1a00" stroke-width="1"/>
<polygon points="1532.5,377.5 1388.8,538.8 1561.0,592.5 1575.0,597.0 1575.0,388.5 1561.0,385.0" fill="#ede621" stroke="#1a1a00" stroke-width="1"/>
<polygon points="1189.8,597.8 1049.8,728.5 1301.2,810.2 1400.0,786.5 1550.0,750.2 1561.0,747.0 1580.0,741.0 1580.0,728.0 1561.0,721.5" fill="#ede621" stroke="#1a1a00" stroke-width="1"/>
<polyline points="758.5,380.5 816.0,343.0 862.0,313.0 940.0,232.0" fill="none" stroke="#f6f0a0" stroke-width="2.4" stroke-dasharray="2.5 2.5" opacity=".22"/>
<polygon points="330.0,649.0 338.0,644.8 408.5,604.8 663.5,486.0 733.5,467.0 773.5,481.0 788.0,499.8 788.0,532.0 741.0,573.5 552.2,704.0 496.0,741.5 458.5,767.8 423.5,787.8 338.0,820.2 330.0,823.0" fill="#b3d3db" stroke="#ffffff" stroke-width="3.2" stroke-linejoin="round"/>
<polygon points="330.0,649.0 338.0,644.8 408.5,604.8 663.5,486.0 733.5,467.0 773.5,481.0 788.0,499.8 788.0,532.0 741.0,573.5 552.2,704.0 496.0,741.5 458.5,767.8 423.5,787.8 338.0,820.2 330.0,823.0" fill="none" stroke="#7d8a90" stroke-width=".8" stroke-linejoin="round"/>
<polyline points="330.0,704.0 520.0,640.0 735.0,546.0" fill="none" stroke="#c4dcec" stroke-width="2.2" opacity=".7"/>
<polygon points="477.2,866.5 713.5,882.8 757.2,905.2 764.8,939.0 759.3,953.3 689.3,971.7 569.3,996.7 500.0,1004.0 417.0,1004.0 391.0,897.8 422.2,877.8" fill="#d7e9d1" stroke="#ffffff" stroke-width="3.2" stroke-linejoin="round"/>
<polygon points="477.2,866.5 713.5,882.8 757.2,905.2 764.8,939.0 759.3,953.3 689.3,971.7 569.3,996.7 500.0,1004.0 417.0,1004.0 391.0,897.8 422.2,877.8" fill="none" stroke="#7d8a80" stroke-width=".8" stroke-linejoin="round"/>
<polygon points="888.5,474.8 944.0,488.5 1004.8,598.5 1016.0,646.0 1031.0,704.0 1039.2,742.8 1038.5,830.2 932.2,875.2 859.8,884.5 816.0,880.2 791.0,876.5 461.0,852.8 444.8,822.8 446.0,806.5 476.0,762.8 561.0,704.0 816.0,526.5" fill="#47a16a" stroke="#1f8a10" stroke-width="1.8" stroke-linejoin="round"/>
<polygon points="1015.8,191.0 960.3,240.3 931.8,285.0 892.2,339.2 1015.5,544.5 1104.0,563.2 1338.8,553.8 1561.0,342.0 1600.0,305.0 1600.0,150.0 1050.0,150.0" fill="#c9da55"/>
<polygon points="1002.0,186.0 1001.0,191.0 986.0,253.0 1042.2,281.8 1064.8,340.5 1049.8,410.5 1016.0,435.5 966.0,443.5 948.0,432.0 1015.5,544.5 1104.0,563.2 1338.8,553.8 1561.0,342.0 1600.0,305.0 1600.0,150.0 1412.5,150.0 1412.5,191.0 1457.5,215.5 1501.2,263.0 1500.0,366.0 1477.5,401.2 1418.8,450.0 1352.5,461.2 1217.5,460.0 1145.0,397.0 1165.0,290.5 1163.8,260.5 1107.5,213.0 1103.8,191.0 1103.8,150.0" fill="#a9c65b"/>
<polyline points="1002.0,186.0 1001.0,191.0 986.0,253.0 1042.2,281.8 1064.8,340.5 1049.8,410.5 1016.0,435.5 966.0,443.5 948.0,432.0" fill="none" stroke="#7f9d4b" stroke-width="2.6" filter="url(#bl)"/>
<polyline points="1412.5,186.0 1412.5,191.0 1457.5,215.5 1501.2,263.0 1500.0,366.0 1477.5,401.2 1418.8,450.0 1352.5,461.2 1217.5,460.0 1145.0,397.0 1165.0,290.5 1163.8,260.5 1107.5,213.0 1103.8,191.0 1103.8,186.0" fill="none" stroke="#7f9d4b" stroke-width="2.6" filter="url(#bl)"/>
<polygon points="983.5,272.2 1036.0,295.5 1048.5,353.0 1042.2,388.0 1026.0,413.0 997.2,426.8 968.5,423.0 923.5,391.8 914.8,353.0 928.5,310.5" fill="#e8edaa" stroke="#ffffff" stroke-width="3" stroke-linejoin="round"/>
<polygon points="983.5,272.2 1036.0,295.5 1048.5,353.0 1042.2,388.0 1026.0,413.0 997.2,426.8 968.5,423.0 923.5,391.8 914.8,353.0 928.5,310.5" fill="none" stroke="#6d6d66" stroke-width=".8" stroke-linejoin="round"/>
<polygon points="1118.8,191.8 1172.5,246.8 1183.8,293.0 1162.5,395.5 1227.0,443.5 1355.0,450.0 1422.0,426.0 1482.5,365.0 1482.5,275.5 1447.5,228.0 1370.0,191.8 1362.0,186.0 1113.0,186.0" fill="#e8edaa" stroke="#ffffff" stroke-width="3" stroke-linejoin="round"/>
<polygon points="1118.8,191.8 1172.5,246.8 1183.8,293.0 1162.5,395.5 1227.0,443.5 1355.0,450.0 1422.0,426.0 1482.5,365.0 1482.5,275.5 1447.5,228.0 1370.0,191.8 1362.0,186.0 1113.0,186.0" fill="none" stroke="#6d6d66" stroke-width=".8" stroke-linejoin="round"/>
<polygon points="1015.8,191.0 960.3,240.3 931.8,285.0 892.2,339.2 1015.5,544.5 1104.0,563.2 1338.8,553.8 1561.0,342.0 1600.0,305.0 1600.0,150.0 1050.0,150.0" fill="none" stroke="#c81cb6" stroke-width="3" stroke-linejoin="miter"/>
<polyline points="330.0,607.5 338.0,603.5 473.5,533.5 548.5,486.0 613.5,446.0 816.0,314.2 832.2,305.5 938.5,191.0 943.0,186.0" fill="none" stroke="#000" stroke-width="4.2" stroke-linejoin="round"/>
<polyline points="600.0,1004.3 629.3,998.3 780.0,970.0 844.3,955.8 962.0,928.0 974.0,924.8 1100.0,885.0 1200.0,855.2 1350.0,807.8 1561.0,731.5 1575.0,726.5" fill="none" stroke="#000" stroke-width="4.2" stroke-linejoin="round"/>
<polyline points="915.0,1003.0 936.0,998.3 1372.7,903.0 1561.0,891.5 1575.0,890.6" fill="none" stroke="#0f7424" stroke-width="4.2" stroke-linejoin="round"/>
<path d="M345.7 196.6v-4.5a2.1 3.3 0 1 1 .1 0M350.8 197.2v-4.2a2 3.1 0 1 1 .1 0M386.7 213.6v-4.5a2.1 3.3 0 1 1 .1 0M391.8 214.2v-4.2a2 3.1 0 1 1 .1 0M386.1 212.3v-4.5a2.1 3.3 0 1 1 .1 0M391.2 212.9v-4.2a2 3.1 0 1 1 .1 0M437.1 209.1v-4.5a2.1 3.3 0 1 1 .1 0M442.2 209.7v-4.2a2 3.1 0 1 1 .1 0M439.5 208.7v-4.5a2.1 3.3 0 1 1 .1 0M444.6 209.3v-4.2a2 3.1 0 1 1 .1 0M523.9 195.4v-4.5a2.1 3.3 0 1 1 .1 0M529.0 196.0v-4.2a2 3.1 0 1 1 .1 0M515.1 231.7v-4.5a2.1 3.3 0 1 1 .1 0M520.2 232.3v-4.2a2 3.1 0 1 1 .1 0M564.9 207.5v-4.5a2.1 3.3 0 1 1 .1 0M570.0 208.1v-4.2a2 3.1 0 1 1 .1 0M593.5 227.8v-4.5a2.1 3.3 0 1 1 .1 0M598.6 228.4v-4.2a2 3.1 0 1 1 .1 0M597.8 195.2v-4.5a2.1 3.3 0 1 1 .1 0M602.9 195.8v-4.2a2 3.1 0 1 1 .1 0M657.1 225.9v-4.5a2.1 3.3 0 1 1 .1 0M662.2 226.5v-4.2a2 3.1 0 1 1 .1 0M669.1 218.1v-4.5a2.1 3.3 0 1 1 .1 0M674.2 218.7v-4.2a2 3.1 0 1 1 .1 0M711.9 214.1v-4.5a2.1 3.3 0 1 1 .1 0M717.0 214.7v-4.2a2 3.1 0 1 1 .1 0M698.1 199.1v-4.5a2.1 3.3 0 1 1 .1 0M703.2 199.7v-4.2a2 3.1 0 1 1 .1 0M777.4 208.8v-4.5a2.1 3.3 0 1 1 .1 0M782.5 209.4v-4.2a2 3.1 0 1 1 .1 0M773.3 209.9v-4.5a2.1 3.3 0 1 1 .1 0M778.4 210.5v-4.2a2 3.1 0 1 1 .1 0M812.7 225.0v-4.5a2.1 3.3 0 1 1 .1 0M817.8 225.6v-4.2a2 3.1 0 1 1 .1 0M862.2 215.3v-4.5a2.1 3.3 0 1 1 .1 0M867.3 215.9v-4.2a2 3.1 0 1 1 .1 0M942.0 222.1v-4.5a2.1 3.3 0 1 1 .1 0M947.1 222.7v-4.2a2 3.1 0 1 1 .1 0M946.6 195.2v-4.5a2.1 3.3 0 1 1 .1 0M951.7 195.8v-4.2a2 3.1 0 1 1 .1 0M973.9 223.3v-4.5a2.1 3.3 0 1 1 .1 0M979.0 223.9v-4.2a2 3.1 0 1 1 .1 0M977.0 191.7v-4.5a2.1 3.3 0 1 1 .1 0M982.1 192.3v-4.2a2 3.1 0 1 1 .1 0M1036.9 223.6v-4.5a2.1 3.3 0 1 1 .1 0M1042.0 224.2v-4.2a2 3.1 0 1 1 .1 0M1098.0 203.8v-4.5a2.1 3.3 0 1 1 .1 0M1103.1 204.4v-4.2a2 3.1 0 1 1 .1 0M1137.7 215.5v-4.5a2.1 3.3 0 1 1 .1 0M1142.8 216.1v-4.2a2 3.1 0 1 1 .1 0M1200.5 231.6v-4.5a2.1 3.3 0 1 1 .1 0M1205.6 232.2v-4.2a2 3.1 0 1 1 .1 0M1244.7 192.7v-4.5a2.1 3.3 0 1 1 .1 0M1249.8 193.3v-4.2a2 3.1 0 1 1 .1 0M1296.0 233.7v-4.5a2.1 3.3 0 1 1 .1 0M1301.1 234.3v-4.2a2 3.1 0 1 1 .1 0M1332.0 207.0v-4.5a2.1 3.3 0 1 1 .1 0M1337.1 207.6v-4.2a2 3.1 0 1 1 .1 0M1372.5 210.3v-4.5a2.1 3.3 0 1 1 .1 0M1377.6 210.9v-4.2a2 3.1 0 1 1 .1 0M1376.7 192.6v-4.5a2.1 3.3 0 1 1 .1 0M1381.8 193.2v-4.2a2 3.1 0 1 1 .1 0M1457.3 195.7v-4.5a2.1 3.3 0 1 1 .1 0M1462.4 196.3v-4.2a2 3.1 0 1 1 .1 0M1440.7 228.3v-4.5a2.1 3.3 0 1 1 .1 0M1445.8 228.9v-4.2a2 3.1 0 1 1 .1 0M1479.0 209.8v-4.5a2.1 3.3 0 1 1 .1 0M1484.1 210.4v-4.2a2 3.1 0 1 1 .1 0M1566.4 226.0v-4.5a2.1 3.3 0 1 1 .1 0M1571.5 226.6v-4.2a2 3.1 0 1 1 .1 0M1591.8 208.3v-4.5a2.1 3.3 0 1 1 .1 0M1596.9 208.9v-4.2a2 3.1 0 1 1 .1 0M1618.4 232.1v-4.5a2.1 3.3 0 1 1 .1 0M1623.5 232.7v-4.2a2 3.1 0 1 1 .1 0M338.1 249.8v-4.5a2.1 3.3 0 1 1 .1 0M343.2 250.4v-4.2a2 3.1 0 1 1 .1 0M341.8 263.3v-4.5a2.1 3.3 0 1 1 .1 0M346.9 263.9v-4.2a2 3.1 0 1 1 .1 0M409.4 253.6v-4.5a2.1 3.3 0 1 1 .1 0M414.5 254.2v-4.2a2 3.1 0 1 1 .1 0M401.9 258.2v-4.5a2.1 3.3 0 1 1 .1 0M407.0 258.8v-4.2a2 3.1 0 1 1 .1 0M460.4 283.9v-4.5a2.1 3.3 0 1 1 .1 0M465.5 284.5v-4.2a2 3.1 0 1 1 .1 0M510.2 269.2v-4.5a2.1 3.3 0 1 1 .1 0M515.3 269.8v-4.2a2 3.1 0 1 1 .1 0M541.9 281.6v-4.5a2.1 3.3 0 1 1 .1 0M547.0 282.2v-4.2a2 3.1 0 1 1 .1 0M630.0 277.1v-4.5a2.1 3.3 0 1 1 .1 0M635.1 277.7v-4.2a2 3.1 0 1 1 .1 0M609.1 246.6v-4.5a2.1 3.3 0 1 1 .1 0M614.2 247.2v-4.2a2 3.1 0 1 1 .1 0M671.4 244.7v-4.5a2.1 3.3 0 1 1 .1 0M676.5 245.3v-4.2a2 3.1 0 1 1 .1 0M652.7 249.1v-4.5a2.1 3.3 0 1 1 .1 0M657.8 249.7v-4.2a2 3.1 0 1 1 .1 0M710.5 244.3v-4.5a2.1 3.3 0 1 1 .1 0M715.6 244.9v-4.2a2 3.1 0 1 1 .1 0M702.2 246.5v-4.5a2.1 3.3 0 1 1 .1 0M707.3 247.1v-4.2a2 3.1 0 1 1 .1 0M763.5 243.1v-4.5a2.1 3.3 0 1 1 .1 0M768.6 243.7v-4.2a2 3.1 0 1 1 .1 0M826.5 248.5v-4.5a2.1 3.3 0 1 1 .1 0M831.6 249.1v-4.2a2 3.1 0 1 1 .1 0M814.8 258.0v-4.5a2.1 3.3 0 1 1 .1 0M819.9 258.6v-4.2a2 3.1 0 1 1 .1 0M856.9 279.4v-4.5a2.1 3.3 0 1 1 .1 0M862.0 280.0v-4.2a2 3.1 0 1 1 .1 0M924.0 263.3v-4.5a2.1 3.3 0 1 1 .1 0M929.1 263.9v-4.2a2 3.1 0 1 1 .1 0M908.0 257.1v-4.5a2.1 3.3 0 1 1 .1 0M913.1 257.7v-4.2a2 3.1 0 1 1 .1 0M967.1 278.5v-4.5a2.1 3.3 0 1 1 .1 0M972.2 279.1v-4.2a2 3.1 0 1 1 .1 0M956.5 283.8v-4.5a2.1 3.3 0 1 1 .1 0M961.6 284.4v-4.2a2 3.1 0 1 1 .1 0M1030.7 248.5v-4.5a2.1 3.3 0 1 1 .1 0M1035.8 249.1v-4.2a2 3.1 0 1 1 .1 0M1060.7 265.2v-4.5a2.1 3.3 0 1 1 .1 0M1065.8 265.8v-4.2a2 3.1 0 1 1 .1 0M1149.5 272.6v-4.5a2.1 3.3 0 1 1 .1 0M1154.6 273.2v-4.2a2 3.1 0 1 1 .1 0M1127.6 249.3v-4.5a2.1 3.3 0 1 1 .1 0M1132.7 249.9v-4.2a2 3.1 0 1 1 .1 0M1197.5 265.4v-4.5a2.1 3.3 0 1 1 .1 0M1202.6 266.0v-4.2a2 3.1 0 1 1 .1 0M1230.0 251.8v-4.5a2.1 3.3 0 1 1 .1 0M1235.1 252.4v-4.2a2 3.1 0 1 1 .1 0M1310.8 279.5v-4.5a2.1 3.3 0 1 1 .1 0M1315.9 280.1v-4.2a2 3.1 0 1 1 .1 0M1355.5 274.6v-4.5a2.1 3.3 0 1 1 .1 0M1360.6 275.2v-4.2a2 3.1 0 1 1 .1 0M1342.3 257.6v-4.5a2.1 3.3 0 1 1 .1 0M1347.4 258.2v-4.2a2 3.1 0 1 1 .1 0M1372.8 243.2v-4.5a2.1 3.3 0 1 1 .1 0M1377.9 243.8v-4.2a2 3.1 0 1 1 .1 0M1382.9 272.5v-4.5a2.1 3.3 0 1 1 .1 0M1388.0 273.1v-4.2a2 3.1 0 1 1 .1 0M1465.6 261.7v-4.5a2.1 3.3 0 1 1 .1 0M1470.7 262.3v-4.2a2 3.1 0 1 1 .1 0M1519.0 284.0v-4.5a2.1 3.3 0 1 1 .1 0M1524.1 284.6v-4.2a2 3.1 0 1 1 .1 0M1485.2 252.0v-4.5a2.1 3.3 0 1 1 .1 0M1490.3 252.6v-4.2a2 3.1 0 1 1 .1 0M1536.2 251.0v-4.5a2.1 3.3 0 1 1 .1 0M1541.3 251.6v-4.2a2 3.1 0 1 1 .1 0M1619.1 279.0v-4.5a2.1 3.3 0 1 1 .1 0M1624.2 279.6v-4.2a2 3.1 0 1 1 .1 0M360.2 329.2v-4.5a2.1 3.3 0 1 1 .1 0M365.3 329.8v-4.2a2 3.1 0 1 1 .1 0M360.6 334.0v-4.5a2.1 3.3 0 1 1 .1 0M365.7 334.6v-4.2a2 3.1 0 1 1 .1 0M417.9 327.0v-4.5a2.1 3.3 0 1 1 .1 0M423.0 327.6v-4.2a2 3.1 0 1 1 .1 0M443.4 328.7v-4.5a2.1 3.3 0 1 1 .1 0M448.5 329.3v-4.2a2 3.1 0 1 1 .1 0M470.7 336.8v-4.5a2.1 3.3 0 1 1 .1 0M475.8 337.4v-4.2a2 3.1 0 1 1 .1 0M504.9 311.7v-4.5a2.1 3.3 0 1 1 .1 0M510.0 312.3v-4.2a2 3.1 0 1 1 .1 0M571.4 301.5v-4.5a2.1 3.3 0 1 1 .1 0M576.5 302.1v-4.2a2 3.1 0 1 1 .1 0M546.2 333.8v-4.5a2.1 3.3 0 1 1 .1 0M551.3 334.4v-4.2a2 3.1 0 1 1 .1 0M627.0 300.4v-4.5a2.1 3.3 0 1 1 .1 0M632.1 301.0v-4.2a2 3.1 0 1 1 .1 0M686.6 322.9v-4.5a2.1 3.3 0 1 1 .1 0M691.7 323.5v-4.2a2 3.1 0 1 1 .1 0M667.6 299.8v-4.5a2.1 3.3 0 1 1 .1 0M672.7 300.4v-4.2a2 3.1 0 1 1 .1 0M696.1 336.7v-4.5a2.1 3.3 0 1 1 .1 0M701.2 337.3v-4.2a2 3.1 0 1 1 .1 0M770.7 335.1v-4.5a2.1 3.3 0 1 1 .1 0M775.8 335.7v-4.2a2 3.1 0 1 1 .1 0M785.9 330.4v-4.5a2.1 3.3 0 1 1 .1 0M791.0 331.0v-4.2a2 3.1 0 1 1 .1 0M808.8 305.1v-4.5a2.1 3.3 0 1 1 .1 0M813.9 305.7v-4.2a2 3.1 0 1 1 .1 0M810.1 319.8v-4.5a2.1 3.3 0 1 1 .1 0M815.2 320.4v-4.2a2 3.1 0 1 1 .1 0M862.9 312.4v-4.5a2.1 3.3 0 1 1 .1 0M868.0 313.0v-4.2a2 3.1 0 1 1 .1 0M891.5 309.6v-4.5a2.1 3.3 0 1 1 .1 0M896.6 310.2v-4.2a2 3.1 0 1 1 .1 0M923.7 319.7v-4.5a2.1 3.3 0 1 1 .1 0M928.8 320.3v-4.2a2 3.1 0 1 1 .1 0M974.0 334.4v-4.5a2.1 3.3 0 1 1 .1 0M979.1 335.0v-4.2a2 3.1 0 1 1 .1 0M1030.9 317.0v-4.5a2.1 3.3 0 1 1 .1 0M1036.0 317.6v-4.2a2 3.1 0 1 1 .1 0M1026.9 302.1v-4.5a2.1 3.3 0 1 1 .1 0M1032.0 302.7v-4.2a2 3.1 0 1 1 .1 0M1059.7 329.2v-4.5a2.1 3.3 0 1 1 .1 0M1064.8 329.8v-4.2a2 3.1 0 1 1 .1 0M1080.3 325.9v-4.5a2.1 3.3 0 1 1 .1 0M1085.4 326.5v-4.2a2 3.1 0 1 1 .1 0M1136.0 308.3v-4.5a2.1 3.3 0 1 1 .1 0M1141.1 308.9v-4.2a2 3.1 0 1 1 .1 0M1187.9 328.5v-4.5a2.1 3.3 0 1 1 .1 0M1193.0 329.1v-4.2a2 3.1 0 1 1 .1 0M1188.2 304.9v-4.5a2.1 3.3 0 1 1 .1 0M1193.3 305.5v-4.2a2 3.1 0 1 1 .1 0M1227.7 328.0v-4.5a2.1 3.3 0 1 1 .1 0M1232.8 328.6v-4.2a2 3.1 0 1 1 .1 0M1292.2 327.4v-4.5a2.1 3.3 0 1 1 .1 0M1297.3 328.0v-4.2a2 3.1 0 1 1 .1 0M1339.0 321.0v-4.5a2.1 3.3 0 1 1 .1 0M1344.1 321.6v-4.2a2 3.1 0 1 1 .1 0M1394.0 324.5v-4.5a2.1 3.3 0 1 1 .1 0M1399.1 325.1v-4.2a2 3.1 0 1 1 .1 0M1447.0 315.0v-4.5a2.1 3.3 0 1 1 .1 0M1452.1 315.6v-4.2a2 3.1 0 1 1 .1 0M1506.3 332.6v-4.5a2.1 3.3 0 1 1 .1 0M1511.4 333.2v-4.2a2 3.1 0 1 1 .1 0M1538.9 318.6v-4.5a2.1 3.3 0 1 1 .1 0M1544.0 319.2v-4.2a2 3.1 0 1 1 .1 0M1616.5 300.0v-4.5a2.1 3.3 0 1 1 .1 0M1621.6 300.6v-4.2a2 3.1 0 1 1 .1 0M1599.0 297.2v-4.5a2.1 3.3 0 1 1 .1 0M1604.1 297.8v-4.2a2 3.1 0 1 1 .1 0M342.1 349.2v-4.5a2.1 3.3 0 1 1 .1 0M347.2 349.8v-4.2a2 3.1 0 1 1 .1 0M418.0 385.5v-4.5a2.1 3.3 0 1 1 .1 0M423.1 386.1v-4.2a2 3.1 0 1 1 .1 0M415.0 375.1v-4.5a2.1 3.3 0 1 1 .1 0M420.1 375.7v-4.2a2 3.1 0 1 1 .1 0M441.8 384.8v-4.5a2.1 3.3 0 1 1 .1 0M446.9 385.4v-4.2a2 3.1 0 1 1 .1 0M497.2 387.9v-4.5a2.1 3.3 0 1 1 .1 0M502.3 388.5v-4.2a2 3.1 0 1 1 .1 0M508.9 389.6v-4.5a2.1 3.3 0 1 1 .1 0M514.0 390.2v-4.2a2 3.1 0 1 1 .1 0M576.1 353.1v-4.5a2.1 3.3 0 1 1 .1 0M581.2 353.7v-4.2a2 3.1 0 1 1 .1 0M562.2 360.9v-4.5a2.1 3.3 0 1 1 .1 0M567.3 361.5v-4.2a2 3.1 0 1 1 .1 0M600.1 360.0v-4.5a2.1 3.3 0 1 1 .1 0M605.2 360.6v-4.2a2 3.1 0 1 1 .1 0M644.4 370.4v-4.5a2.1 3.3 0 1 1 .1 0M649.5 371.0v-4.2a2 3.1 0 1 1 .1 0M644.3 360.6v-4.5a2.1 3.3 0 1 1 .1 0M649.4 361.2v-4.2a2 3.1 0 1 1 .1 0M723.0 368.5v-4.5a2.1 3.3 0 1 1 .1 0M728.1 369.1v-4.2a2 3.1 0 1 1 .1 0M738.8 380.7v-4.5a2.1 3.3 0 1 1 .1 0M743.9 381.3v-4.2a2 3.1 0 1 1 .1 0M790.3 350.6v-4.5a2.1 3.3 0 1 1 .1 0M795.4 351.2v-4.2a2 3.1 0 1 1 .1 0M749.2 380.3v-4.5a2.1 3.3 0 1 1 .1 0M754.3 380.9v-4.2a2 3.1 0 1 1 .1 0M811.4 351.7v-4.5a2.1 3.3 0 1 1 .1 0M816.5 352.3v-4.2a2 3.1 0 1 1 .1 0M839.6 382.0v-4.5a2.1 3.3 0 1 1 .1 0M844.7 382.6v-4.2a2 3.1 0 1 1 .1 0M862.9 352.6v-4.5a2.1 3.3 0 1 1 .1 0M868.0 353.2v-4.2a2 3.1 0 1 1 .1 0M928.6 376.8v-4.5a2.1 3.3 0 1 1 .1 0M933.7 377.4v-4.2a2 3.1 0 1 1 .1 0M906.0 376.3v-4.5a2.1 3.3 0 1 1 .1 0M911.1 376.9v-4.2a2 3.1 0 1 1 .1 0M974.2 349.2v-4.5a2.1 3.3 0 1 1 .1 0M979.3 349.8v-4.2a2 3.1 0 1 1 .1 0M1035.4 381.3v-4.5a2.1 3.3 0 1 1 .1 0M1040.5 381.9v-4.2a2 3.1 0 1 1 .1 0M1045.2 348.9v-4.5a2.1 3.3 0 1 1 .1 0M1050.3 349.5v-4.2a2 3.1 0 1 1 .1 0M1097.5 366.0v-4.5a2.1 3.3 0 1 1 .1 0M1102.6 366.6v-4.2a2 3.1 0 1 1 .1 0M1083.8 386.8v-4.5a2.1 3.3 0 1 1 .1 0M1088.9 387.4v-4.2a2 3.1 0 1 1 .1 0M1123.3 351.7v-4.5a2.1 3.3 0 1 1 .1 0M1128.4 352.3v-4.2a2 3.1 0 1 1 .1 0M1174.0 350.8v-4.5a2.1 3.3 0 1 1 .1 0M1179.1 351.4v-4.2a2 3.1 0 1 1 .1 0M1165.7 354.9v-4.5a2.1 3.3 0 1 1 .1 0M1170.8 355.5v-4.2a2 3.1 0 1 1 .1 0M1229.2 359.4v-4.5a2.1 3.3 0 1 1 .1 0M1234.3 360.0v-4.2a2 3.1 0 1 1 .1 0M1280.3 368.0v-4.5a2.1 3.3 0 1 1 .1 0M1285.4 368.6v-4.2a2 3.1 0 1 1 .1 0M1282.8 346.8v-4.5a2.1 3.3 0 1 1 .1 0M1287.9 347.4v-4.2a2 3.1 0 1 1 .1 0M1330.5 346.7v-4.5a2.1 3.3 0 1 1 .1 0M1335.6 347.3v-4.2a2 3.1 0 1 1 .1 0M1395.7 354.3v-4.5a2.1 3.3 0 1 1 .1 0M1400.8 354.9v-4.2a2 3.1 0 1 1 .1 0M1464.6 350.7v-4.5a2.1 3.3 0 1 1 .1 0M1469.7 351.3v-4.2a2 3.1 0 1 1 .1 0M1494.5 367.8v-4.5a2.1 3.3 0 1 1 .1 0M1499.6 368.4v-4.2a2 3.1 0 1 1 .1 0M1544.8 368.3v-4.5a2.1 3.3 0 1 1 .1 0M1549.9 368.9v-4.2a2 3.1 0 1 1 .1 0M1622.7 361.1v-4.5a2.1 3.3 0 1 1 .1 0M1627.8 361.7v-4.2a2 3.1 0 1 1 .1 0M362.6 426.0v-4.5a2.1 3.3 0 1 1 .1 0M367.7 426.6v-4.2a2 3.1 0 1 1 .1 0M346.8 400.4v-4.5a2.1 3.3 0 1 1 .1 0M351.9 401.0v-4.2a2 3.1 0 1 1 .1 0M389.2 401.1v-4.5a2.1 3.3 0 1 1 .1 0M394.3 401.7v-4.2a2 3.1 0 1 1 .1 0M446.7 405.2v-4.5a2.1 3.3 0 1 1 .1 0M451.8 405.8v-4.2a2 3.1 0 1 1 .1 0M472.5 436.3v-4.5a2.1 3.3 0 1 1 .1 0M477.6 436.9v-4.2a2 3.1 0 1 1 .1 0M517.0 410.4v-4.5a2.1 3.3 0 1 1 .1 0M522.1 411.0v-4.2a2 3.1 0 1 1 .1 0M500.4 418.2v-4.5a2.1 3.3 0 1 1 .1 0M505.5 418.8v-4.2a2 3.1 0 1 1 .1 0M546.4 417.6v-4.5a2.1 3.3 0 1 1 .1 0M551.5 418.2v-4.2a2 3.1 0 1 1 .1 0M581.8 440.8v-4.5a2.1 3.3 0 1 1 .1 0M586.9 441.4v-4.2a2 3.1 0 1 1 .1 0M615.6 408.8v-4.5a2.1 3.3 0 1 1 .1 0M620.7 409.4v-4.2a2 3.1 0 1 1 .1 0M657.1 413.7v-4.5a2.1 3.3 0 1 1 .1 0M662.2 414.3v-4.2a2 3.1 0 1 1 .1 0M660.3 418.9v-4.5a2.1 3.3 0 1 1 .1 0M665.4 419.5v-4.2a2 3.1 0 1 1 .1 0M717.6 406.8v-4.5a2.1 3.3 0 1 1 .1 0M722.7 407.4v-4.2a2 3.1 0 1 1 .1 0M747.7 409.6v-4.5a2.1 3.3 0 1 1 .1 0M752.8 410.2v-4.2a2 3.1 0 1 1 .1 0M765.1 399.8v-4.5a2.1 3.3 0 1 1 .1 0M770.2 400.4v-4.2a2 3.1 0 1 1 .1 0M800.5 411.4v-4.5a2.1 3.3 0 1 1 .1 0M805.6 412.0v-4.2a2 3.1 0 1 1 .1 0M825.3 421.3v-4.5a2.1 3.3 0 1 1 .1 0M830.4 421.9v-4.2a2 3.1 0 1 1 .1 0M884.5 426.9v-4.5a2.1 3.3 0 1 1 .1 0M889.6 427.5v-4.2a2 3.1 0 1 1 .1 0M942.2 415.1v-4.5a2.1 3.3 0 1 1 .1 0M947.3 415.7v-4.2a2 3.1 0 1 1 .1 0M946.8 404.6v-4.5a2.1 3.3 0 1 1 .1 0M951.9 405.2v-4.2a2 3.1 0 1 1 .1 0M987.4 426.3v-4.5a2.1 3.3 0 1 1 .1 0M992.5 426.9v-4.2a2 3.1 0 1 1 .1 0M992.3 437.2v-4.5a2.1 3.3 0 1 1 .1 0M997.4 437.8v-4.2a2 3.1 0 1 1 .1 0M1035.1 430.3v-4.5a2.1 3.3 0 1 1 .1 0M1040.2 430.9v-4.2a2 3.1 0 1 1 .1 0M1065.6 421.0v-4.5a2.1 3.3 0 1 1 .1 0M1070.7 421.6v-4.2a2 3.1 0 1 1 .1 0M1148.2 433.4v-4.5a2.1 3.3 0 1 1 .1 0M1153.3 434.0v-4.2a2 3.1 0 1 1 .1 0M1189.2 437.3v-4.5a2.1 3.3 0 1 1 .1 0M1194.3 437.9v-4.2a2 3.1 0 1 1 .1 0M1246.0 408.1v-4.5a2.1 3.3 0 1 1 .1 0M1251.1 408.7v-4.2a2 3.1 0 1 1 .1 0M1221.4 413.9v-4.5a2.1 3.3 0 1 1 .1 0M1226.5 414.5v-4.2a2 3.1 0 1 1 .1 0M1272.1 434.8v-4.5a2.1 3.3 0 1 1 .1 0M1277.2 435.4v-4.2a2 3.1 0 1 1 .1 0M1347.1 425.6v-4.5a2.1 3.3 0 1 1 .1 0M1352.2 426.2v-4.2a2 3.1 0 1 1 .1 0M1393.0 398.1v-4.5a2.1 3.3 0 1 1 .1 0M1398.1 398.7v-4.2a2 3.1 0 1 1 .1 0M1456.4 420.1v-4.5a2.1 3.3 0 1 1 .1 0M1461.5 420.7v-4.2a2 3.1 0 1 1 .1 0M1504.5 400.9v-4.5a2.1 3.3 0 1 1 .1 0M1509.6 401.5v-4.2a2 3.1 0 1 1 .1 0M1538.6 401.3v-4.5a2.1 3.3 0 1 1 .1 0M1543.7 401.9v-4.2a2 3.1 0 1 1 .1 0M1559.6 407.0v-4.5a2.1 3.3 0 1 1 .1 0M1564.7 407.6v-4.2a2 3.1 0 1 1 .1 0M1612.1 440.9v-4.5a2.1 3.3 0 1 1 .1 0M1617.2 441.5v-4.2a2 3.1 0 1 1 .1 0M348.3 471.1v-4.5a2.1 3.3 0 1 1 .1 0M353.4 471.7v-4.2a2 3.1 0 1 1 .1 0M417.2 477.1v-4.5a2.1 3.3 0 1 1 .1 0M422.3 477.7v-4.2a2 3.1 0 1 1 .1 0M438.9 456.5v-4.5a2.1 3.3 0 1 1 .1 0M444.0 457.1v-4.2a2 3.1 0 1 1 .1 0M468.2 463.4v-4.5a2.1 3.3 0 1 1 .1 0M473.3 464.0v-4.2a2 3.1 0 1 1 .1 0M512.5 450.5v-4.5a2.1 3.3 0 1 1 .1 0M517.6 451.1v-4.2a2 3.1 0 1 1 .1 0M499.3 479.6v-4.5a2.1 3.3 0 1 1 .1 0M504.4 480.2v-4.2a2 3.1 0 1 1 .1 0M570.0 479.7v-4.5a2.1 3.3 0 1 1 .1 0M575.1 480.3v-4.2a2 3.1 0 1 1 .1 0M562.2 470.4v-4.5a2.1 3.3 0 1 1 .1 0M567.3 471.0v-4.2a2 3.1 0 1 1 .1 0M612.0 455.2v-4.5a2.1 3.3 0 1 1 .1 0M617.1 455.8v-4.2a2 3.1 0 1 1 .1 0M652.3 493.0v-4.5a2.1 3.3 0 1 1 .1 0M657.4 493.6v-4.2a2 3.1 0 1 1 .1 0M696.3 470.2v-4.5a2.1 3.3 0 1 1 .1 0M701.4 470.8v-4.2a2 3.1 0 1 1 .1 0M790.1 469.8v-4.5a2.1 3.3 0 1 1 .1 0M795.2 470.4v-4.2a2 3.1 0 1 1 .1 0M756.7 491.6v-4.5a2.1 3.3 0 1 1 .1 0M761.8 492.2v-4.2a2 3.1 0 1 1 .1 0M808.8 475.6v-4.5a2.1 3.3 0 1 1 .1 0M813.9 476.2v-4.2a2 3.1 0 1 1 .1 0M822.6 491.9v-4.5a2.1 3.3 0 1 1 .1 0M827.7 492.5v-4.2a2 3.1 0 1 1 .1 0M857.3 486.1v-4.5a2.1 3.3 0 1 1 .1 0M862.4 486.7v-4.2a2 3.1 0 1 1 .1 0M942.5 480.9v-4.5a2.1 3.3 0 1 1 .1 0M947.6 481.5v-4.2a2 3.1 0 1 1 .1 0M943.0 471.4v-4.5a2.1 3.3 0 1 1 .1 0M948.1 472.0v-4.2a2 3.1 0 1 1 .1 0M956.6 450.2v-4.5a2.1 3.3 0 1 1 .1 0M961.7 450.8v-4.2a2 3.1 0 1 1 .1 0M1027.3 463.3v-4.5a2.1 3.3 0 1 1 .1 0M1032.4 463.9v-4.2a2 3.1 0 1 1 .1 0M1022.6 463.9v-4.5a2.1 3.3 0 1 1 .1 0M1027.7 464.5v-4.2a2 3.1 0 1 1 .1 0M1096.5 450.1v-4.5a2.1 3.3 0 1 1 .1 0M1101.6 450.7v-4.2a2 3.1 0 1 1 .1 0M1148.4 455.3v-4.5a2.1 3.3 0 1 1 .1 0M1153.5 455.9v-4.2a2 3.1 0 1 1 .1 0M1194.9 489.7v-4.5a2.1 3.3 0 1 1 .1 0M1200.0 490.3v-4.2a2 3.1 0 1 1 .1 0M1179.9 467.3v-4.5a2.1 3.3 0 1 1 .1 0M1185.0 467.9v-4.2a2 3.1 0 1 1 .1 0M1259.4 475.9v-4.5a2.1 3.3 0 1 1 .1 0M1264.5 476.5v-4.2a2 3.1 0 1 1 .1 0M1234.3 462.1v-4.5a2.1 3.3 0 1 1 .1 0M1239.4 462.7v-4.2a2 3.1 0 1 1 .1 0M1269.6 454.5v-4.5a2.1 3.3 0 1 1 .1 0M1274.7 455.1v-4.2a2 3.1 0 1 1 .1 0M1332.1 491.2v-4.5a2.1 3.3 0 1 1 .1 0M1337.2 491.8v-4.2a2 3.1 0 1 1 .1 0M1331.2 472.5v-4.5a2.1 3.3 0 1 1 .1 0M1336.3 473.1v-4.2a2 3.1 0 1 1 .1 0M1379.9 466.4v-4.5a2.1 3.3 0 1 1 .1 0M1385.0 467.0v-4.2a2 3.1 0 1 1 .1 0M1462.4 485.7v-4.5a2.1 3.3 0 1 1 .1 0M1467.5 486.3v-4.2a2 3.1 0 1 1 .1 0M1515.7 491.4v-4.5a2.1 3.3 0 1 1 .1 0M1520.8 492.0v-4.2a2 3.1 0 1 1 .1 0M1559.2 452.2v-4.5a2.1 3.3 0 1 1 .1 0M1564.3 452.8v-4.2a2 3.1 0 1 1 .1 0M1599.3 483.1v-4.5a2.1 3.3 0 1 1 .1 0M1604.4 483.7v-4.2a2 3.1 0 1 1 .1 0M344.1 504.2v-4.5a2.1 3.3 0 1 1 .1 0M349.2 504.8v-4.2a2 3.1 0 1 1 .1 0M389.1 522.8v-4.5a2.1 3.3 0 1 1 .1 0M394.2 523.4v-4.2a2 3.1 0 1 1 .1 0M396.6 534.5v-4.5a2.1 3.3 0 1 1 .1 0M401.7 535.1v-4.2a2 3.1 0 1 1 .1 0M478.5 513.4v-4.5a2.1 3.3 0 1 1 .1 0M483.6 514.0v-4.2a2 3.1 0 1 1 .1 0M500.7 526.5v-4.5a2.1 3.3 0 1 1 .1 0M505.8 527.1v-4.2a2 3.1 0 1 1 .1 0M494.9 509.1v-4.5a2.1 3.3 0 1 1 .1 0M500.0 509.7v-4.2a2 3.1 0 1 1 .1 0M548.6 541.9v-4.5a2.1 3.3 0 1 1 .1 0M553.7 542.5v-4.2a2 3.1 0 1 1 .1 0M601.2 541.9v-4.5a2.1 3.3 0 1 1 .1 0M606.3 542.5v-4.2a2 3.1 0 1 1 .1 0M663.3 508.1v-4.5a2.1 3.3 0 1 1 .1 0M668.4 508.7v-4.2a2 3.1 0 1 1 .1 0M647.5 517.0v-4.5a2.1 3.3 0 1 1 .1 0M652.6 517.6v-4.2a2 3.1 0 1 1 .1 0M699.5 512.5v-4.5a2.1 3.3 0 1 1 .1 0M704.6 513.1v-4.2a2 3.1 0 1 1 .1 0M720.6 541.0v-4.5a2.1 3.3 0 1 1 .1 0M725.7 541.6v-4.2a2 3.1 0 1 1 .1 0M780.5 520.2v-4.5a2.1 3.3 0 1 1 .1 0M785.6 520.8v-4.2a2 3.1 0 1 1 .1 0M770.6 518.6v-4.5a2.1 3.3 0 1 1 .1 0M775.7 519.2v-4.2a2 3.1 0 1 1 .1 0M814.4 504.7v-4.5a2.1 3.3 0 1 1 .1 0M819.5 505.3v-4.2a2 3.1 0 1 1 .1 0M842.1 507.5v-4.5a2.1 3.3 0 1 1 .1 0M847.2 508.1v-4.2a2 3.1 0 1 1 .1 0M873.6 529.7v-4.5a2.1 3.3 0 1 1 .1 0M878.7 530.3v-4.2a2 3.1 0 1 1 .1 0M913.0 513.9v-4.5a2.1 3.3 0 1 1 .1 0M918.1 514.5v-4.2a2 3.1 0 1 1 .1 0M921.1 521.6v-4.5a2.1 3.3 0 1 1 .1 0M926.2 522.2v-4.2a2 3.1 0 1 1 .1 0M997.5 539.3v-4.5a2.1 3.3 0 1 1 .1 0M1002.6 539.9v-4.2a2 3.1 0 1 1 .1 0M1008.5 503.4v-4.5a2.1 3.3 0 1 1 .1 0M1013.6 504.0v-4.2a2 3.1 0 1 1 .1 0M1098.9 522.8v-4.5a2.1 3.3 0 1 1 .1 0M1104.0 523.4v-4.2a2 3.1 0 1 1 .1 0M1111.5 519.2v-4.5a2.1 3.3 0 1 1 .1 0M1116.6 519.8v-4.2a2 3.1 0 1 1 .1 0M1199.8 539.6v-4.5a2.1 3.3 0 1 1 .1 0M1204.9 540.2v-4.2a2 3.1 0 1 1 .1 0M1226.4 506.8v-4.5a2.1 3.3 0 1 1 .1 0M1231.5 507.4v-4.2a2 3.1 0 1 1 .1 0M1238.5 532.0v-4.5a2.1 3.3 0 1 1 .1 0M1243.6 532.6v-4.2a2 3.1 0 1 1 .1 0M1308.9 533.8v-4.5a2.1 3.3 0 1 1 .1 0M1314.0 534.4v-4.2a2 3.1 0 1 1 .1 0M1353.2 522.1v-4.5a2.1 3.3 0 1 1 .1 0M1358.3 522.7v-4.2a2 3.1 0 1 1 .1 0M1373.2 536.4v-4.5a2.1 3.3 0 1 1 .1 0M1378.3 537.0v-4.2a2 3.1 0 1 1 .1 0M1412.0 530.4v-4.5a2.1 3.3 0 1 1 .1 0M1417.1 531.0v-4.2a2 3.1 0 1 1 .1 0M1436.9 507.6v-4.5a2.1 3.3 0 1 1 .1 0M1442.0 508.2v-4.2a2 3.1 0 1 1 .1 0M1451.5 532.7v-4.5a2.1 3.3 0 1 1 .1 0M1456.6 533.3v-4.2a2 3.1 0 1 1 .1 0M1480.4 505.1v-4.5a2.1 3.3 0 1 1 .1 0M1485.5 505.7v-4.2a2 3.1 0 1 1 .1 0M1553.1 519.1v-4.5a2.1 3.3 0 1 1 .1 0M1558.2 519.7v-4.2a2 3.1 0 1 1 .1 0M1553.9 502.5v-4.5a2.1 3.3 0 1 1 .1 0M1559.0 503.1v-4.2a2 3.1 0 1 1 .1 0M1592.8 522.3v-4.5a2.1 3.3 0 1 1 .1 0M1597.9 522.9v-4.2a2 3.1 0 1 1 .1 0M359.9 592.9v-4.5a2.1 3.3 0 1 1 .1 0M365.0 593.5v-4.2a2 3.1 0 1 1 .1 0M393.8 564.9v-4.5a2.1 3.3 0 1 1 .1 0M398.9 565.5v-4.2a2 3.1 0 1 1 .1 0M466.5 567.5v-4.5a2.1 3.3 0 1 1 .1 0M471.6 568.1v-4.2a2 3.1 0 1 1 .1 0M457.4 583.7v-4.5a2.1 3.3 0 1 1 .1 0M462.5 584.3v-4.2a2 3.1 0 1 1 .1 0M506.0 565.3v-4.5a2.1 3.3 0 1 1 .1 0M511.1 565.9v-4.2a2 3.1 0 1 1 .1 0M580.2 564.0v-4.5a2.1 3.3 0 1 1 .1 0M585.3 564.6v-4.2a2 3.1 0 1 1 .1 0M554.4 572.5v-4.5a2.1 3.3 0 1 1 .1 0M559.5 573.1v-4.2a2 3.1 0 1 1 .1 0M621.5 562.7v-4.5a2.1 3.3 0 1 1 .1 0M626.6 563.3v-4.2a2 3.1 0 1 1 .1 0M676.0 576.2v-4.5a2.1 3.3 0 1 1 .1 0M681.1 576.8v-4.2a2 3.1 0 1 1 .1 0M686.2 567.7v-4.5a2.1 3.3 0 1 1 .1 0M691.3 568.3v-4.2a2 3.1 0 1 1 .1 0M731.6 564.2v-4.5a2.1 3.3 0 1 1 .1 0M736.7 564.8v-4.2a2 3.1 0 1 1 .1 0M729.0 567.0v-4.5a2.1 3.3 0 1 1 .1 0M734.1 567.6v-4.2a2 3.1 0 1 1 .1 0M789.4 575.8v-4.5a2.1 3.3 0 1 1 .1 0M794.5 576.4v-4.2a2 3.1 0 1 1 .1 0M757.3 572.3v-4.5a2.1 3.3 0 1 1 .1 0M762.4 572.9v-4.2a2 3.1 0 1 1 .1 0M828.8 595.7v-4.5a2.1 3.3 0 1 1 .1 0M833.9 596.3v-4.2a2 3.1 0 1 1 .1 0M816.8 563.4v-4.5a2.1 3.3 0 1 1 .1 0M821.9 564.0v-4.2a2 3.1 0 1 1 .1 0M894.4 560.2v-4.5a2.1 3.3 0 1 1 .1 0M899.5 560.8v-4.2a2 3.1 0 1 1 .1 0M854.1 571.3v-4.5a2.1 3.3 0 1 1 .1 0M859.2 571.9v-4.2a2 3.1 0 1 1 .1 0M943.0 592.9v-4.5a2.1 3.3 0 1 1 .1 0M948.1 593.5v-4.2a2 3.1 0 1 1 .1 0M999.4 595.0v-4.5a2.1 3.3 0 1 1 .1 0M1004.5 595.6v-4.2a2 3.1 0 1 1 .1 0M963.7 595.2v-4.5a2.1 3.3 0 1 1 .1 0M968.8 595.8v-4.2a2 3.1 0 1 1 .1 0M1040.3 555.4v-4.5a2.1 3.3 0 1 1 .1 0M1045.4 556.0v-4.2a2 3.1 0 1 1 .1 0M1076.2 570.5v-4.5a2.1 3.3 0 1 1 .1 0M1081.3 571.1v-4.2a2 3.1 0 1 1 .1 0M1066.9 554.1v-4.5a2.1 3.3 0 1 1 .1 0M1072.0 554.7v-4.2a2 3.1 0 1 1 .1 0M1123.8 569.5v-4.5a2.1 3.3 0 1 1 .1 0M1128.9 570.1v-4.2a2 3.1 0 1 1 .1 0M1168.9 596.4v-4.5a2.1 3.3 0 1 1 .1 0M1174.0 597.0v-4.2a2 3.1 0 1 1 .1 0M1179.2 590.1v-4.5a2.1 3.3 0 1 1 .1 0M1184.3 590.7v-4.2a2 3.1 0 1 1 .1 0M1251.7 573.0v-4.5a2.1 3.3 0 1 1 .1 0M1256.8 573.6v-4.2a2 3.1 0 1 1 .1 0M1236.3 570.4v-4.5a2.1 3.3 0 1 1 .1 0M1241.4 571.0v-4.2a2 3.1 0 1 1 .1 0M1308.0 562.5v-4.5a2.1 3.3 0 1 1 .1 0M1313.1 563.1v-4.2a2 3.1 0 1 1 .1 0M1307.0 555.3v-4.5a2.1 3.3 0 1 1 .1 0M1312.1 555.9v-4.2a2 3.1 0 1 1 .1 0M1337.6 589.7v-4.5a2.1 3.3 0 1 1 .1 0M1342.7 590.3v-4.2a2 3.1 0 1 1 .1 0M1373.3 555.5v-4.5a2.1 3.3 0 1 1 .1 0M1378.4 556.1v-4.2a2 3.1 0 1 1 .1 0M1412.0 565.3v-4.5a2.1 3.3 0 1 1 .1 0M1417.1 565.9v-4.2a2 3.1 0 1 1 .1 0M1456.4 593.5v-4.5a2.1 3.3 0 1 1 .1 0M1461.5 594.1v-4.2a2 3.1 0 1 1 .1 0M1435.5 596.1v-4.5a2.1 3.3 0 1 1 .1 0M1440.6 596.7v-4.2a2 3.1 0 1 1 .1 0M1502.6 565.5v-4.5a2.1 3.3 0 1 1 .1 0M1507.7 566.1v-4.2a2 3.1 0 1 1 .1 0M1541.4 566.1v-4.5a2.1 3.3 0 1 1 .1 0M1546.5 566.7v-4.2a2 3.1 0 1 1 .1 0M1560.7 594.3v-4.5a2.1 3.3 0 1 1 .1 0M1565.8 594.9v-4.2a2 3.1 0 1 1 .1 0M1607.4 595.5v-4.5a2.1 3.3 0 1 1 .1 0M1612.5 596.1v-4.2a2 3.1 0 1 1 .1 0M1589.8 574.9v-4.5a2.1 3.3 0 1 1 .1 0M1594.9 575.5v-4.2a2 3.1 0 1 1 .1 0M373.6 648.0v-4.5a2.1 3.3 0 1 1 .1 0M378.7 648.6v-4.2a2 3.1 0 1 1 .1 0M342.5 624.9v-4.5a2.1 3.3 0 1 1 .1 0M347.6 625.5v-4.2a2 3.1 0 1 1 .1 0M405.2 646.8v-4.5a2.1 3.3 0 1 1 .1 0M410.3 647.4v-4.2a2 3.1 0 1 1 .1 0M418.8 638.5v-4.5a2.1 3.3 0 1 1 .1 0M423.9 639.1v-4.2a2 3.1 0 1 1 .1 0M471.7 640.0v-4.5a2.1 3.3 0 1 1 .1 0M476.8 640.6v-4.2a2 3.1 0 1 1 .1 0M501.9 620.1v-4.5a2.1 3.3 0 1 1 .1 0M507.0 620.7v-4.2a2 3.1 0 1 1 .1 0M521.9 609.5v-4.5a2.1 3.3 0 1 1 .1 0M527.0 610.1v-4.2a2 3.1 0 1 1 .1 0M548.2 639.1v-4.5a2.1 3.3 0 1 1 .1 0M553.3 639.7v-4.2a2 3.1 0 1 1 .1 0M542.3 607.5v-4.5a2.1 3.3 0 1 1 .1 0M547.4 608.1v-4.2a2 3.1 0 1 1 .1 0M615.8 620.3v-4.5a2.1 3.3 0 1 1 .1 0M620.9 620.9v-4.2a2 3.1 0 1 1 .1 0M682.4 649.5v-4.5a2.1 3.3 0 1 1 .1 0M687.5 650.1v-4.2a2 3.1 0 1 1 .1 0M647.2 610.2v-4.5a2.1 3.3 0 1 1 .1 0M652.3 610.8v-4.2a2 3.1 0 1 1 .1 0M717.4 637.2v-4.5a2.1 3.3 0 1 1 .1 0M722.5 637.8v-4.2a2 3.1 0 1 1 .1 0M705.8 624.3v-4.5a2.1 3.3 0 1 1 .1 0M710.9 624.9v-4.2a2 3.1 0 1 1 .1 0M774.8 635.7v-4.5a2.1 3.3 0 1 1 .1 0M779.9 636.3v-4.2a2 3.1 0 1 1 .1 0M836.8 635.2v-4.5a2.1 3.3 0 1 1 .1 0M841.9 635.8v-4.2a2 3.1 0 1 1 .1 0M836.5 618.9v-4.5a2.1 3.3 0 1 1 .1 0M841.6 619.5v-4.2a2 3.1 0 1 1 .1 0M876.4 622.4v-4.5a2.1 3.3 0 1 1 .1 0M881.5 623.0v-4.2a2 3.1 0 1 1 .1 0M912.3 616.9v-4.5a2.1 3.3 0 1 1 .1 0M917.4 617.5v-4.2a2 3.1 0 1 1 .1 0M910.2 644.9v-4.5a2.1 3.3 0 1 1 .1 0M915.3 645.5v-4.2a2 3.1 0 1 1 .1 0M980.9 620.4v-4.5a2.1 3.3 0 1 1 .1 0M986.0 621.0v-4.2a2 3.1 0 1 1 .1 0M999.2 628.3v-4.5a2.1 3.3 0 1 1 .1 0M1004.3 628.9v-4.2a2 3.1 0 1 1 .1 0M1017.7 641.6v-4.5a2.1 3.3 0 1 1 .1 0M1022.8 642.2v-4.2a2 3.1 0 1 1 .1 0M1103.1 610.5v-4.5a2.1 3.3 0 1 1 .1 0M1108.2 611.1v-4.2a2 3.1 0 1 1 .1 0M1147.5 643.0v-4.5a2.1 3.3 0 1 1 .1 0M1152.6 643.6v-4.2a2 3.1 0 1 1 .1 0M1165.3 618.9v-4.5a2.1 3.3 0 1 1 .1 0M1170.4 619.5v-4.2a2 3.1 0 1 1 .1 0M1171.8 648.8v-4.5a2.1 3.3 0 1 1 .1 0M1176.9 649.4v-4.2a2 3.1 0 1 1 .1 0M1241.2 646.9v-4.5a2.1 3.3 0 1 1 .1 0M1246.3 647.5v-4.2a2 3.1 0 1 1 .1 0M1253.6 625.8v-4.5a2.1 3.3 0 1 1 .1 0M1258.7 626.4v-4.2a2 3.1 0 1 1 .1 0M1278.9 640.2v-4.5a2.1 3.3 0 1 1 .1 0M1284.0 640.8v-4.2a2 3.1 0 1 1 .1 0M1324.2 632.2v-4.5a2.1 3.3 0 1 1 .1 0M1329.3 632.8v-4.2a2 3.1 0 1 1 .1 0M1381.1 622.2v-4.5a2.1 3.3 0 1 1 .1 0M1386.2 622.8v-4.2a2 3.1 0 1 1 .1 0M1380.5 617.2v-4.5a2.1 3.3 0 1 1 .1 0M1385.6 617.8v-4.2a2 3.1 0 1 1 .1 0M1449.9 634.7v-4.5a2.1 3.3 0 1 1 .1 0M1455.0 635.3v-4.2a2 3.1 0 1 1 .1 0M1424.0 620.4v-4.5a2.1 3.3 0 1 1 .1 0M1429.1 621.0v-4.2a2 3.1 0 1 1 .1 0M1505.3 614.1v-4.5a2.1 3.3 0 1 1 .1 0M1510.4 614.7v-4.2a2 3.1 0 1 1 .1 0M1484.4 641.0v-4.5a2.1 3.3 0 1 1 .1 0M1489.5 641.6v-4.2a2 3.1 0 1 1 .1 0M1551.6 608.8v-4.5a2.1 3.3 0 1 1 .1 0M1556.7 609.4v-4.2a2 3.1 0 1 1 .1 0M1544.9 630.2v-4.5a2.1 3.3 0 1 1 .1 0M1550.0 630.8v-4.2a2 3.1 0 1 1 .1 0M1607.6 610.0v-4.5a2.1 3.3 0 1 1 .1 0M1612.7 610.6v-4.2a2 3.1 0 1 1 .1 0M1610.1 624.0v-4.5a2.1 3.3 0 1 1 .1 0M1615.2 624.6v-4.2a2 3.1 0 1 1 .1 0M344.0 671.5v-4.5a2.1 3.3 0 1 1 .1 0M349.1 672.1v-4.2a2 3.1 0 1 1 .1 0M397.2 682.9v-4.5a2.1 3.3 0 1 1 .1 0M402.3 683.5v-4.2a2 3.1 0 1 1 .1 0M401.8 696.0v-4.5a2.1 3.3 0 1 1 .1 0M406.9 696.6v-4.2a2 3.1 0 1 1 .1 0M479.4 674.0v-4.5a2.1 3.3 0 1 1 .1 0M484.5 674.6v-4.2a2 3.1 0 1 1 .1 0M467.5 667.0v-4.5a2.1 3.3 0 1 1 .1 0M472.6 667.6v-4.2a2 3.1 0 1 1 .1 0M487.8 697.7v-4.5a2.1 3.3 0 1 1 .1 0M492.9 698.3v-4.2a2 3.1 0 1 1 .1 0M523.6 675.9v-4.5a2.1 3.3 0 1 1 .1 0M528.7 676.5v-4.2a2 3.1 0 1 1 .1 0M578.3 678.3v-4.5a2.1 3.3 0 1 1 .1 0M583.4 678.9v-4.2a2 3.1 0 1 1 .1 0M540.2 682.3v-4.5a2.1 3.3 0 1 1 .1 0M545.3 682.9v-4.2a2 3.1 0 1 1 .1 0M619.7 698.0v-4.5a2.1 3.3 0 1 1 .1 0M624.8 698.6v-4.2a2 3.1 0 1 1 .1 0M618.9 674.3v-4.5a2.1 3.3 0 1 1 .1 0M624.0 674.9v-4.2a2 3.1 0 1 1 .1 0M665.7 664.4v-4.5a2.1 3.3 0 1 1 .1 0M670.8 665.0v-4.2a2 3.1 0 1 1 .1 0M666.4 698.7v-4.5a2.1 3.3 0 1 1 .1 0M671.5 699.3v-4.2a2 3.1 0 1 1 .1 0M700.3 679.6v-4.5a2.1 3.3 0 1 1 .1 0M705.4 680.2v-4.2a2 3.1 0 1 1 .1 0M790.0 666.7v-4.5a2.1 3.3 0 1 1 .1 0M795.1 667.3v-4.2a2 3.1 0 1 1 .1 0M789.0 700.9v-4.5a2.1 3.3 0 1 1 .1 0M794.1 701.5v-4.2a2 3.1 0 1 1 .1 0M820.7 660.3v-4.5a2.1 3.3 0 1 1 .1 0M825.8 660.9v-4.2a2 3.1 0 1 1 .1 0M868.6 697.8v-4.5a2.1 3.3 0 1 1 .1 0M873.7 698.4v-4.2a2 3.1 0 1 1 .1 0M939.8 665.1v-4.5a2.1 3.3 0 1 1 .1 0M944.9 665.7v-4.2a2 3.1 0 1 1 .1 0M965.3 675.8v-4.5a2.1 3.3 0 1 1 .1 0M970.4 676.4v-4.2a2 3.1 0 1 1 .1 0M1044.0 666.1v-4.5a2.1 3.3 0 1 1 .1 0M1049.1 666.7v-4.2a2 3.1 0 1 1 .1 0M1025.1 680.8v-4.5a2.1 3.3 0 1 1 .1 0M1030.2 681.4v-4.2a2 3.1 0 1 1 .1 0M1076.4 663.4v-4.5a2.1 3.3 0 1 1 .1 0M1081.5 664.0v-4.2a2 3.1 0 1 1 .1 0M1091.4 697.5v-4.5a2.1 3.3 0 1 1 .1 0M1096.5 698.1v-4.2a2 3.1 0 1 1 .1 0M1113.3 682.7v-4.5a2.1 3.3 0 1 1 .1 0M1118.4 683.3v-4.2a2 3.1 0 1 1 .1 0M1165.2 694.9v-4.5a2.1 3.3 0 1 1 .1 0M1170.3 695.5v-4.2a2 3.1 0 1 1 .1 0M1189.9 682.2v-4.5a2.1 3.3 0 1 1 .1 0M1195.0 682.8v-4.2a2 3.1 0 1 1 .1 0M1243.1 671.5v-4.5a2.1 3.3 0 1 1 .1 0M1248.2 672.1v-4.2a2 3.1 0 1 1 .1 0M1241.1 676.7v-4.5a2.1 3.3 0 1 1 .1 0M1246.2 677.3v-4.2a2 3.1 0 1 1 .1 0M1296.5 677.7v-4.5a2.1 3.3 0 1 1 .1 0M1301.6 678.3v-4.2a2 3.1 0 1 1 .1 0M1268.5 685.2v-4.5a2.1 3.3 0 1 1 .1 0M1273.6 685.8v-4.2a2 3.1 0 1 1 .1 0M1341.0 668.4v-4.5a2.1 3.3 0 1 1 .1 0M1346.1 669.0v-4.2a2 3.1 0 1 1 .1 0M1405.8 678.2v-4.5a2.1 3.3 0 1 1 .1 0M1410.9 678.8v-4.2a2 3.1 0 1 1 .1 0M1392.3 662.7v-4.5a2.1 3.3 0 1 1 .1 0M1397.4 663.3v-4.2a2 3.1 0 1 1 .1 0M1429.2 676.9v-4.5a2.1 3.3 0 1 1 .1 0M1434.3 677.5v-4.2a2 3.1 0 1 1 .1 0M1442.9 680.4v-4.5a2.1 3.3 0 1 1 .1 0M1448.0 681.0v-4.2a2 3.1 0 1 1 .1 0M1477.3 686.0v-4.5a2.1 3.3 0 1 1 .1 0M1482.4 686.6v-4.2a2 3.1 0 1 1 .1 0M1507.8 692.2v-4.5a2.1 3.3 0 1 1 .1 0M1512.9 692.8v-4.2a2 3.1 0 1 1 .1 0M1550.0 660.4v-4.5a2.1 3.3 0 1 1 .1 0M1555.1 661.0v-4.2a2 3.1 0 1 1 .1 0M1596.1 699.8v-4.5a2.1 3.3 0 1 1 .1 0M1601.2 700.4v-4.2a2 3.1 0 1 1 .1 0M1617.2 701.8v-4.5a2.1 3.3 0 1 1 .1 0M1622.3 702.4v-4.2a2 3.1 0 1 1 .1 0M363.7 745.9v-4.5a2.1 3.3 0 1 1 .1 0M368.8 746.5v-4.2a2 3.1 0 1 1 .1 0M374.7 731.6v-4.5a2.1 3.3 0 1 1 .1 0M379.8 732.2v-4.2a2 3.1 0 1 1 .1 0M425.6 750.3v-4.5a2.1 3.3 0 1 1 .1 0M430.7 750.9v-4.2a2 3.1 0 1 1 .1 0M418.2 750.9v-4.5a2.1 3.3 0 1 1 .1 0M423.3 751.5v-4.2a2 3.1 0 1 1 .1 0M438.4 725.4v-4.5a2.1 3.3 0 1 1 .1 0M443.5 726.0v-4.2a2 3.1 0 1 1 .1 0M494.5 749.4v-4.5a2.1 3.3 0 1 1 .1 0M499.6 750.0v-4.2a2 3.1 0 1 1 .1 0M523.4 716.3v-4.5a2.1 3.3 0 1 1 .1 0M528.5 716.9v-4.2a2 3.1 0 1 1 .1 0M561.6 750.5v-4.5a2.1 3.3 0 1 1 .1 0M566.7 751.1v-4.2a2 3.1 0 1 1 .1 0M551.1 732.3v-4.5a2.1 3.3 0 1 1 .1 0M556.2 732.9v-4.2a2 3.1 0 1 1 .1 0M605.5 711.6v-4.5a2.1 3.3 0 1 1 .1 0M610.6 712.2v-4.2a2 3.1 0 1 1 .1 0M598.6 751.2v-4.5a2.1 3.3 0 1 1 .1 0M603.7 751.8v-4.2a2 3.1 0 1 1 .1 0M673.4 749.4v-4.5a2.1 3.3 0 1 1 .1 0M678.5 750.0v-4.2a2 3.1 0 1 1 .1 0M678.0 715.1v-4.5a2.1 3.3 0 1 1 .1 0M683.1 715.7v-4.2a2 3.1 0 1 1 .1 0M718.9 738.0v-4.5a2.1 3.3 0 1 1 .1 0M724.0 738.6v-4.2a2 3.1 0 1 1 .1 0M733.9 734.4v-4.5a2.1 3.3 0 1 1 .1 0M739.0 735.0v-4.2a2 3.1 0 1 1 .1 0M773.0 748.8v-4.5a2.1 3.3 0 1 1 .1 0M778.1 749.4v-4.2a2 3.1 0 1 1 .1 0M791.2 737.7v-4.5a2.1 3.3 0 1 1 .1 0M796.3 738.3v-4.2a2 3.1 0 1 1 .1 0M816.8 745.1v-4.5a2.1 3.3 0 1 1 .1 0M821.9 745.7v-4.2a2 3.1 0 1 1 .1 0M843.1 735.4v-4.5a2.1 3.3 0 1 1 .1 0M848.2 736.0v-4.2a2 3.1 0 1 1 .1 0M867.4 743.6v-4.5a2.1 3.3 0 1 1 .1 0M872.5 744.2v-4.2a2 3.1 0 1 1 .1 0M859.3 742.7v-4.5a2.1 3.3 0 1 1 .1 0M864.4 743.3v-4.2a2 3.1 0 1 1 .1 0M905.6 746.1v-4.5a2.1 3.3 0 1 1 .1 0M910.7 746.7v-4.2a2 3.1 0 1 1 .1 0M931.6 753.3v-4.5a2.1 3.3 0 1 1 .1 0M936.7 753.9v-4.2a2 3.1 0 1 1 .1 0M981.3 739.2v-4.5a2.1 3.3 0 1 1 .1 0M986.4 739.8v-4.2a2 3.1 0 1 1 .1 0M955.6 711.5v-4.5a2.1 3.3 0 1 1 .1 0M960.7 712.1v-4.2a2 3.1 0 1 1 .1 0M1014.1 737.1v-4.5a2.1 3.3 0 1 1 .1 0M1019.2 737.7v-4.2a2 3.1 0 1 1 .1 0M1030.1 749.4v-4.5a2.1 3.3 0 1 1 .1 0M1035.2 750.0v-4.2a2 3.1 0 1 1 .1 0M1065.3 720.0v-4.5a2.1 3.3 0 1 1 .1 0M1070.4 720.6v-4.2a2 3.1 0 1 1 .1 0M1112.5 710.1v-4.5a2.1 3.3 0 1 1 .1 0M1117.6 710.7v-4.2a2 3.1 0 1 1 .1 0M1116.2 725.7v-4.5a2.1 3.3 0 1 1 .1 0M1121.3 726.3v-4.2a2 3.1 0 1 1 .1 0M1173.4 735.7v-4.5a2.1 3.3 0 1 1 .1 0M1178.5 736.3v-4.2a2 3.1 0 1 1 .1 0M1224.5 737.5v-4.5a2.1 3.3 0 1 1 .1 0M1229.6 738.1v-4.2a2 3.1 0 1 1 .1 0M1273.4 751.2v-4.5a2.1 3.3 0 1 1 .1 0M1278.5 751.8v-4.2a2 3.1 0 1 1 .1 0M1274.1 714.2v-4.5a2.1 3.3 0 1 1 .1 0M1279.2 714.8v-4.2a2 3.1 0 1 1 .1 0M1347.6 748.3v-4.5a2.1 3.3 0 1 1 .1 0M1352.7 748.9v-4.2a2 3.1 0 1 1 .1 0M1389.2 721.6v-4.5a2.1 3.3 0 1 1 .1 0M1394.3 722.2v-4.2a2 3.1 0 1 1 .1 0M1399.9 734.7v-4.5a2.1 3.3 0 1 1 .1 0M1405.0 735.3v-4.2a2 3.1 0 1 1 .1 0M1438.9 738.4v-4.5a2.1 3.3 0 1 1 .1 0M1444.0 739.0v-4.2a2 3.1 0 1 1 .1 0M1464.7 742.3v-4.5a2.1 3.3 0 1 1 .1 0M1469.8 742.9v-4.2a2 3.1 0 1 1 .1 0M1486.4 749.8v-4.5a2.1 3.3 0 1 1 .1 0M1491.5 750.4v-4.2a2 3.1 0 1 1 .1 0M1498.9 727.9v-4.5a2.1 3.3 0 1 1 .1 0M1504.0 728.5v-4.2a2 3.1 0 1 1 .1 0M1538.0 712.6v-4.5a2.1 3.3 0 1 1 .1 0M1543.1 713.2v-4.2a2 3.1 0 1 1 .1 0M1580.0 734.2v-4.5a2.1 3.3 0 1 1 .1 0M1585.1 734.8v-4.2a2 3.1 0 1 1 .1 0M337.8 770.8v-4.5a2.1 3.3 0 1 1 .1 0M342.9 771.4v-4.2a2 3.1 0 1 1 .1 0M405.8 790.2v-4.5a2.1 3.3 0 1 1 .1 0M410.9 790.8v-4.2a2 3.1 0 1 1 .1 0M443.2 775.6v-4.5a2.1 3.3 0 1 1 .1 0M448.3 776.2v-4.2a2 3.1 0 1 1 .1 0M437.6 801.1v-4.5a2.1 3.3 0 1 1 .1 0M442.7 801.7v-4.2a2 3.1 0 1 1 .1 0M522.0 793.5v-4.5a2.1 3.3 0 1 1 .1 0M527.1 794.1v-4.2a2 3.1 0 1 1 .1 0M524.7 794.8v-4.5a2.1 3.3 0 1 1 .1 0M529.8 795.4v-4.2a2 3.1 0 1 1 .1 0M560.0 794.6v-4.5a2.1 3.3 0 1 1 .1 0M565.1 795.2v-4.2a2 3.1 0 1 1 .1 0M601.4 766.6v-4.5a2.1 3.3 0 1 1 .1 0M606.5 767.2v-4.2a2 3.1 0 1 1 .1 0M593.2 776.8v-4.5a2.1 3.3 0 1 1 .1 0M598.3 777.4v-4.2a2 3.1 0 1 1 .1 0M676.5 792.6v-4.5a2.1 3.3 0 1 1 .1 0M681.6 793.2v-4.2a2 3.1 0 1 1 .1 0M726.8 773.7v-4.5a2.1 3.3 0 1 1 .1 0M731.9 774.3v-4.2a2 3.1 0 1 1 .1 0M766.7 796.7v-4.5a2.1 3.3 0 1 1 .1 0M771.8 797.3v-4.2a2 3.1 0 1 1 .1 0M811.2 790.2v-4.5a2.1 3.3 0 1 1 .1 0M816.3 790.8v-4.2a2 3.1 0 1 1 .1 0M861.0 800.7v-4.5a2.1 3.3 0 1 1 .1 0M866.1 801.3v-4.2a2 3.1 0 1 1 .1 0M863.0 772.4v-4.5a2.1 3.3 0 1 1 .1 0M868.1 773.0v-4.2a2 3.1 0 1 1 .1 0M936.2 803.6v-4.5a2.1 3.3 0 1 1 .1 0M941.3 804.2v-4.2a2 3.1 0 1 1 .1 0M969.9 800.7v-4.5a2.1 3.3 0 1 1 .1 0M975.0 801.3v-4.2a2 3.1 0 1 1 .1 0M966.0 801.9v-4.5a2.1 3.3 0 1 1 .1 0M971.1 802.5v-4.2a2 3.1 0 1 1 .1 0M1035.3 792.5v-4.5a2.1 3.3 0 1 1 .1 0M1040.4 793.1v-4.2a2 3.1 0 1 1 .1 0M1102.6 782.7v-4.5a2.1 3.3 0 1 1 .1 0M1107.7 783.3v-4.2a2 3.1 0 1 1 .1 0M1142.2 799.7v-4.5a2.1 3.3 0 1 1 .1 0M1147.3 800.3v-4.2a2 3.1 0 1 1 .1 0M1143.4 787.1v-4.5a2.1 3.3 0 1 1 .1 0M1148.5 787.7v-4.2a2 3.1 0 1 1 .1 0M1177.0 771.3v-4.5a2.1 3.3 0 1 1 .1 0M1182.1 771.9v-4.2a2 3.1 0 1 1 .1 0M1218.9 802.1v-4.5a2.1 3.3 0 1 1 .1 0M1224.0 802.7v-4.2a2 3.1 0 1 1 .1 0M1216.7 766.7v-4.5a2.1 3.3 0 1 1 .1 0M1221.8 767.3v-4.2a2 3.1 0 1 1 .1 0M1308.4 777.2v-4.5a2.1 3.3 0 1 1 .1 0M1313.5 777.8v-4.2a2 3.1 0 1 1 .1 0M1268.8 763.8v-4.5a2.1 3.3 0 1 1 .1 0M1273.9 764.4v-4.2a2 3.1 0 1 1 .1 0M1350.0 789.9v-4.5a2.1 3.3 0 1 1 .1 0M1355.1 790.5v-4.2a2 3.1 0 1 1 .1 0M1403.9 764.9v-4.5a2.1 3.3 0 1 1 .1 0M1409.0 765.5v-4.2a2 3.1 0 1 1 .1 0M1439.5 798.0v-4.5a2.1 3.3 0 1 1 .1 0M1444.6 798.6v-4.2a2 3.1 0 1 1 .1 0M1514.7 764.9v-4.5a2.1 3.3 0 1 1 .1 0M1519.8 765.5v-4.2a2 3.1 0 1 1 .1 0M1567.7 803.6v-4.5a2.1 3.3 0 1 1 .1 0M1572.8 804.2v-4.2a2 3.1 0 1 1 .1 0M1536.6 766.9v-4.5a2.1 3.3 0 1 1 .1 0M1541.7 767.5v-4.2a2 3.1 0 1 1 .1 0M1581.0 799.3v-4.5a2.1 3.3 0 1 1 .1 0M1586.1 799.9v-4.2a2 3.1 0 1 1 .1 0M359.4 850.3v-4.5a2.1 3.3 0 1 1 .1 0M364.5 850.9v-4.2a2 3.1 0 1 1 .1 0M396.1 818.4v-4.5a2.1 3.3 0 1 1 .1 0M401.2 819.0v-4.2a2 3.1 0 1 1 .1 0M416.8 823.0v-4.5a2.1 3.3 0 1 1 .1 0M421.9 823.6v-4.2a2 3.1 0 1 1 .1 0M449.5 832.6v-4.5a2.1 3.3 0 1 1 .1 0M454.6 833.2v-4.2a2 3.1 0 1 1 .1 0M446.8 826.4v-4.5a2.1 3.3 0 1 1 .1 0M451.9 827.0v-4.2a2 3.1 0 1 1 .1 0M519.0 830.2v-4.5a2.1 3.3 0 1 1 .1 0M524.1 830.8v-4.2a2 3.1 0 1 1 .1 0M529.9 836.2v-4.5a2.1 3.3 0 1 1 .1 0M535.0 836.8v-4.2a2 3.1 0 1 1 .1 0M577.0 841.2v-4.5a2.1 3.3 0 1 1 .1 0M582.1 841.8v-4.2a2 3.1 0 1 1 .1 0M557.7 833.2v-4.5a2.1 3.3 0 1 1 .1 0M562.8 833.8v-4.2a2 3.1 0 1 1 .1 0M625.5 829.3v-4.5a2.1 3.3 0 1 1 .1 0M630.6 829.9v-4.2a2 3.1 0 1 1 .1 0M667.2 823.5v-4.5a2.1 3.3 0 1 1 .1 0M672.3 824.1v-4.2a2 3.1 0 1 1 .1 0M699.5 850.1v-4.5a2.1 3.3 0 1 1 .1 0M704.6 850.7v-4.2a2 3.1 0 1 1 .1 0M695.6 822.9v-4.5a2.1 3.3 0 1 1 .1 0M700.7 823.5v-4.2a2 3.1 0 1 1 .1 0M781.0 857.0v-4.5a2.1 3.3 0 1 1 .1 0M786.1 857.6v-4.2a2 3.1 0 1 1 .1 0M769.1 835.6v-4.5a2.1 3.3 0 1 1 .1 0M774.2 836.2v-4.2a2 3.1 0 1 1 .1 0M834.6 822.1v-4.5a2.1 3.3 0 1 1 .1 0M839.7 822.7v-4.2a2 3.1 0 1 1 .1 0M866.8 850.6v-4.5a2.1 3.3 0 1 1 .1 0M871.9 851.2v-4.2a2 3.1 0 1 1 .1 0M893.0 826.5v-4.5a2.1 3.3 0 1 1 .1 0M898.1 827.1v-4.2a2 3.1 0 1 1 .1 0M912.9 844.8v-4.5a2.1 3.3 0 1 1 .1 0M918.0 845.4v-4.2a2 3.1 0 1 1 .1 0M960.3 842.0v-4.5a2.1 3.3 0 1 1 .1 0M965.4 842.6v-4.2a2 3.1 0 1 1 .1 0M990.2 844.7v-4.5a2.1 3.3 0 1 1 .1 0M995.3 845.3v-4.2a2 3.1 0 1 1 .1 0M1042.1 841.6v-4.5a2.1 3.3 0 1 1 .1 0M1047.2 842.2v-4.2a2 3.1 0 1 1 .1 0M1025.2 831.4v-4.5a2.1 3.3 0 1 1 .1 0M1030.3 832.0v-4.2a2 3.1 0 1 1 .1 0M1098.7 817.8v-4.5a2.1 3.3 0 1 1 .1 0M1103.8 818.4v-4.2a2 3.1 0 1 1 .1 0M1112.6 823.1v-4.5a2.1 3.3 0 1 1 .1 0M1117.7 823.7v-4.2a2 3.1 0 1 1 .1 0M1151.2 836.1v-4.5a2.1 3.3 0 1 1 .1 0M1156.3 836.7v-4.2a2 3.1 0 1 1 .1 0M1180.2 852.9v-4.5a2.1 3.3 0 1 1 .1 0M1185.3 853.5v-4.2a2 3.1 0 1 1 .1 0M1183.8 837.4v-4.5a2.1 3.3 0 1 1 .1 0M1188.9 838.0v-4.2a2 3.1 0 1 1 .1 0M1248.7 847.1v-4.5a2.1 3.3 0 1 1 .1 0M1253.8 847.7v-4.2a2 3.1 0 1 1 .1 0M1282.8 828.4v-4.5a2.1 3.3 0 1 1 .1 0M1287.9 829.0v-4.2a2 3.1 0 1 1 .1 0M1304.6 843.1v-4.5a2.1 3.3 0 1 1 .1 0M1309.7 843.7v-4.2a2 3.1 0 1 1 .1 0M1352.1 821.5v-4.5a2.1 3.3 0 1 1 .1 0M1357.2 822.1v-4.2a2 3.1 0 1 1 .1 0M1353.5 839.5v-4.5a2.1 3.3 0 1 1 .1 0M1358.6 840.1v-4.2a2 3.1 0 1 1 .1 0M1377.0 834.3v-4.5a2.1 3.3 0 1 1 .1 0M1382.1 834.9v-4.2a2 3.1 0 1 1 .1 0M1434.0 822.4v-4.5a2.1 3.3 0 1 1 .1 0M1439.1 823.0v-4.2a2 3.1 0 1 1 .1 0M1454.4 851.1v-4.5a2.1 3.3 0 1 1 .1 0M1459.5 851.7v-4.2a2 3.1 0 1 1 .1 0M1482.3 820.9v-4.5a2.1 3.3 0 1 1 .1 0M1487.4 821.5v-4.2a2 3.1 0 1 1 .1 0M1489.9 837.0v-4.5a2.1 3.3 0 1 1 .1 0M1495.0 837.6v-4.2a2 3.1 0 1 1 .1 0M1534.6 828.4v-4.5a2.1 3.3 0 1 1 .1 0M1539.7 829.0v-4.2a2 3.1 0 1 1 .1 0M1570.4 846.1v-4.5a2.1 3.3 0 1 1 .1 0M1575.5 846.7v-4.2a2 3.1 0 1 1 .1 0M1584.0 856.3v-4.5a2.1 3.3 0 1 1 .1 0M1589.1 856.9v-4.2a2 3.1 0 1 1 .1 0M1596.4 857.3v-4.5a2.1 3.3 0 1 1 .1 0M1601.5 857.9v-4.2a2 3.1 0 1 1 .1 0M366.5 898.3v-4.5a2.1 3.3 0 1 1 .1 0M371.6 898.9v-4.2a2 3.1 0 1 1 .1 0M340.1 894.1v-4.5a2.1 3.3 0 1 1 .1 0M345.2 894.7v-4.2a2 3.1 0 1 1 .1 0M388.2 875.1v-4.5a2.1 3.3 0 1 1 .1 0M393.3 875.7v-4.2a2 3.1 0 1 1 .1 0M385.0 883.6v-4.5a2.1 3.3 0 1 1 .1 0M390.1 884.2v-4.2a2 3.1 0 1 1 .1 0M470.3 896.5v-4.5a2.1 3.3 0 1 1 .1 0M475.4 897.1v-4.2a2 3.1 0 1 1 .1 0M515.3 886.4v-4.5a2.1 3.3 0 1 1 .1 0M520.4 887.0v-4.2a2 3.1 0 1 1 .1 0M514.1 883.8v-4.5a2.1 3.3 0 1 1 .1 0M519.2 884.4v-4.2a2 3.1 0 1 1 .1 0M572.1 906.0v-4.5a2.1 3.3 0 1 1 .1 0M577.2 906.6v-4.2a2 3.1 0 1 1 .1 0M564.8 899.0v-4.5a2.1 3.3 0 1 1 .1 0M569.9 899.6v-4.2a2 3.1 0 1 1 .1 0M610.0 876.1v-4.5a2.1 3.3 0 1 1 .1 0M615.1 876.7v-4.2a2 3.1 0 1 1 .1 0M682.2 900.1v-4.5a2.1 3.3 0 1 1 .1 0M687.3 900.7v-4.2a2 3.1 0 1 1 .1 0M733.0 895.9v-4.5a2.1 3.3 0 1 1 .1 0M738.1 896.5v-4.2a2 3.1 0 1 1 .1 0M767.5 879.8v-4.5a2.1 3.3 0 1 1 .1 0M772.6 880.4v-4.2a2 3.1 0 1 1 .1 0M803.8 884.5v-4.5a2.1 3.3 0 1 1 .1 0M808.9 885.1v-4.2a2 3.1 0 1 1 .1 0M882.9 893.7v-4.5a2.1 3.3 0 1 1 .1 0M888.0 894.3v-4.2a2 3.1 0 1 1 .1 0M870.1 886.0v-4.5a2.1 3.3 0 1 1 .1 0M875.2 886.6v-4.2a2 3.1 0 1 1 .1 0M930.8 884.0v-4.5a2.1 3.3 0 1 1 .1 0M935.9 884.6v-4.2a2 3.1 0 1 1 .1 0M996.4 874.1v-4.5a2.1 3.3 0 1 1 .1 0M1001.5 874.7v-4.2a2 3.1 0 1 1 .1 0M1041.7 883.1v-4.5a2.1 3.3 0 1 1 .1 0M1046.8 883.7v-4.2a2 3.1 0 1 1 .1 0M1102.4 867.7v-4.5a2.1 3.3 0 1 1 .1 0M1107.5 868.3v-4.2a2 3.1 0 1 1 .1 0M1118.6 900.4v-4.5a2.1 3.3 0 1 1 .1 0M1123.7 901.0v-4.2a2 3.1 0 1 1 .1 0M1186.3 870.4v-4.5a2.1 3.3 0 1 1 .1 0M1191.4 871.0v-4.2a2 3.1 0 1 1 .1 0M1239.3 897.6v-4.5a2.1 3.3 0 1 1 .1 0M1244.4 898.2v-4.2a2 3.1 0 1 1 .1 0M1295.6 902.5v-4.5a2.1 3.3 0 1 1 .1 0M1300.7 903.1v-4.2a2 3.1 0 1 1 .1 0M1337.6 907.7v-4.5a2.1 3.3 0 1 1 .1 0M1342.7 908.3v-4.2a2 3.1 0 1 1 .1 0M1349.6 883.3v-4.5a2.1 3.3 0 1 1 .1 0M1354.7 883.9v-4.2a2 3.1 0 1 1 .1 0M1405.1 871.4v-4.5a2.1 3.3 0 1 1 .1 0M1410.2 872.0v-4.2a2 3.1 0 1 1 .1 0M1439.1 868.5v-4.5a2.1 3.3 0 1 1 .1 0M1444.2 869.1v-4.2a2 3.1 0 1 1 .1 0M1441.1 866.6v-4.5a2.1 3.3 0 1 1 .1 0M1446.2 867.2v-4.2a2 3.1 0 1 1 .1 0M1493.9 884.5v-4.5a2.1 3.3 0 1 1 .1 0M1499.0 885.1v-4.2a2 3.1 0 1 1 .1 0M1543.0 877.7v-4.5a2.1 3.3 0 1 1 .1 0M1548.1 878.3v-4.2a2 3.1 0 1 1 .1 0M1560.1 907.4v-4.5a2.1 3.3 0 1 1 .1 0M1565.2 908.0v-4.2a2 3.1 0 1 1 .1 0M1602.7 875.6v-4.5a2.1 3.3 0 1 1 .1 0M1607.8 876.2v-4.2a2 3.1 0 1 1 .1 0M348.7 927.3v-4.5a2.1 3.3 0 1 1 .1 0M353.8 927.9v-4.2a2 3.1 0 1 1 .1 0M365.7 953.6v-4.5a2.1 3.3 0 1 1 .1 0M370.8 954.2v-4.2a2 3.1 0 1 1 .1 0M411.4 938.6v-4.5a2.1 3.3 0 1 1 .1 0M416.5 939.2v-4.2a2 3.1 0 1 1 .1 0M445.4 960.4v-4.5a2.1 3.3 0 1 1 .1 0M450.5 961.0v-4.2a2 3.1 0 1 1 .1 0M463.6 954.0v-4.5a2.1 3.3 0 1 1 .1 0M468.7 954.6v-4.2a2 3.1 0 1 1 .1 0M523.4 938.6v-4.5a2.1 3.3 0 1 1 .1 0M528.5 939.2v-4.2a2 3.1 0 1 1 .1 0M511.6 923.5v-4.5a2.1 3.3 0 1 1 .1 0M516.7 924.1v-4.2a2 3.1 0 1 1 .1 0M576.2 933.6v-4.5a2.1 3.3 0 1 1 .1 0M581.3 934.2v-4.2a2 3.1 0 1 1 .1 0M603.3 934.6v-4.5a2.1 3.3 0 1 1 .1 0M608.4 935.2v-4.2a2 3.1 0 1 1 .1 0M610.2 926.2v-4.5a2.1 3.3 0 1 1 .1 0M615.3 926.8v-4.2a2 3.1 0 1 1 .1 0M643.6 949.8v-4.5a2.1 3.3 0 1 1 .1 0M648.7 950.4v-4.2a2 3.1 0 1 1 .1 0M654.3 931.3v-4.5a2.1 3.3 0 1 1 .1 0M659.4 931.9v-4.2a2 3.1 0 1 1 .1 0M716.6 936.9v-4.5a2.1 3.3 0 1 1 .1 0M721.7 937.5v-4.2a2 3.1 0 1 1 .1 0M776.5 933.9v-4.5a2.1 3.3 0 1 1 .1 0M781.6 934.5v-4.2a2 3.1 0 1 1 .1 0M837.1 920.5v-4.5a2.1 3.3 0 1 1 .1 0M842.2 921.1v-4.2a2 3.1 0 1 1 .1 0M891.4 952.5v-4.5a2.1 3.3 0 1 1 .1 0M896.5 953.1v-4.2a2 3.1 0 1 1 .1 0M888.1 945.9v-4.5a2.1 3.3 0 1 1 .1 0M893.2 946.5v-4.2a2 3.1 0 1 1 .1 0M904.2 918.5v-4.5a2.1 3.3 0 1 1 .1 0M909.3 919.1v-4.2a2 3.1 0 1 1 .1 0M984.4 929.0v-4.5a2.1 3.3 0 1 1 .1 0M989.5 929.6v-4.2a2 3.1 0 1 1 .1 0M961.8 928.3v-4.5a2.1 3.3 0 1 1 .1 0M966.9 928.9v-4.2a2 3.1 0 1 1 .1 0M1041.7 933.2v-4.5a2.1 3.3 0 1 1 .1 0M1046.8 933.8v-4.2a2 3.1 0 1 1 .1 0M1047.3 952.8v-4.5a2.1 3.3 0 1 1 .1 0M1052.4 953.4v-4.2a2 3.1 0 1 1 .1 0M1066.9 957.2v-4.5a2.1 3.3 0 1 1 .1 0M1072.0 957.8v-4.2a2 3.1 0 1 1 .1 0M1145.9 947.4v-4.5a2.1 3.3 0 1 1 .1 0M1151.0 948.0v-4.2a2 3.1 0 1 1 .1 0M1198.2 954.9v-4.5a2.1 3.3 0 1 1 .1 0M1203.3 955.5v-4.2a2 3.1 0 1 1 .1 0M1194.0 941.4v-4.5a2.1 3.3 0 1 1 .1 0M1199.1 942.0v-4.2a2 3.1 0 1 1 .1 0M1248.1 937.3v-4.5a2.1 3.3 0 1 1 .1 0M1253.2 937.9v-4.2a2 3.1 0 1 1 .1 0M1291.9 929.6v-4.5a2.1 3.3 0 1 1 .1 0M1297.0 930.2v-4.2a2 3.1 0 1 1 .1 0M1273.6 939.7v-4.5a2.1 3.3 0 1 1 .1 0M1278.7 940.3v-4.2a2 3.1 0 1 1 .1 0M1322.1 938.6v-4.5a2.1 3.3 0 1 1 .1 0M1327.2 939.2v-4.2a2 3.1 0 1 1 .1 0M1341.1 939.9v-4.5a2.1 3.3 0 1 1 .1 0M1346.2 940.5v-4.2a2 3.1 0 1 1 .1 0M1395.2 956.0v-4.5a2.1 3.3 0 1 1 .1 0M1400.3 956.6v-4.2a2 3.1 0 1 1 .1 0M1408.5 938.6v-4.5a2.1 3.3 0 1 1 .1 0M1413.6 939.2v-4.2a2 3.1 0 1 1 .1 0M1448.3 947.3v-4.5a2.1 3.3 0 1 1 .1 0M1453.4 947.9v-4.2a2 3.1 0 1 1 .1 0M1492.0 936.4v-4.5a2.1 3.3 0 1 1 .1 0M1497.1 937.0v-4.2a2 3.1 0 1 1 .1 0M1530.8 946.0v-4.5a2.1 3.3 0 1 1 .1 0M1535.9 946.6v-4.2a2 3.1 0 1 1 .1 0M1580.8 944.8v-4.5a2.1 3.3 0 1 1 .1 0M1585.9 945.4v-4.2a2 3.1 0 1 1 .1 0M372.5 984.5v-4.5a2.1 3.3 0 1 1 .1 0M377.6 985.1v-4.2a2 3.1 0 1 1 .1 0M406.0 991.3v-4.5a2.1 3.3 0 1 1 .1 0M411.1 991.9v-4.2a2 3.1 0 1 1 .1 0M437.0 1001.6v-4.5a2.1 3.3 0 1 1 .1 0M442.1 1002.2v-4.2a2 3.1 0 1 1 .1 0M502.4 1007.9v-4.5a2.1 3.3 0 1 1 .1 0M507.5 1008.5v-4.2a2 3.1 0 1 1 .1 0M508.4 993.1v-4.5a2.1 3.3 0 1 1 .1 0M513.5 993.7v-4.2a2 3.1 0 1 1 .1 0M573.4 979.3v-4.5a2.1 3.3 0 1 1 .1 0M578.5 979.9v-4.2a2 3.1 0 1 1 .1 0M558.1 994.4v-4.5a2.1 3.3 0 1 1 .1 0M563.2 995.0v-4.2a2 3.1 0 1 1 .1 0M627.9 982.9v-4.5a2.1 3.3 0 1 1 .1 0M633.0 983.5v-4.2a2 3.1 0 1 1 .1 0M661.3 992.2v-4.5a2.1 3.3 0 1 1 .1 0M666.4 992.8v-4.2a2 3.1 0 1 1 .1 0M665.8 1012.9v-4.5a2.1 3.3 0 1 1 .1 0M670.9 1013.5v-4.2a2 3.1 0 1 1 .1 0M724.3 1004.8v-4.5a2.1 3.3 0 1 1 .1 0M729.4 1005.4v-4.2a2 3.1 0 1 1 .1 0M709.5 983.2v-4.5a2.1 3.3 0 1 1 .1 0M714.6 983.8v-4.2a2 3.1 0 1 1 .1 0M773.3 997.9v-4.5a2.1 3.3 0 1 1 .1 0M778.4 998.5v-4.2a2 3.1 0 1 1 .1 0M801.3 1001.8v-4.5a2.1 3.3 0 1 1 .1 0M806.4 1002.4v-4.2a2 3.1 0 1 1 .1 0M875.5 972.2v-4.5a2.1 3.3 0 1 1 .1 0M880.6 972.8v-4.2a2 3.1 0 1 1 .1 0M851.8 978.4v-4.5a2.1 3.3 0 1 1 .1 0M856.9 979.0v-4.2a2 3.1 0 1 1 .1 0M944.0 996.8v-4.5a2.1 3.3 0 1 1 .1 0M949.1 997.4v-4.2a2 3.1 0 1 1 .1 0M990.2 1010.0v-4.5a2.1 3.3 0 1 1 .1 0M995.3 1010.6v-4.2a2 3.1 0 1 1 .1 0M1034.6 997.6v-4.5a2.1 3.3 0 1 1 .1 0M1039.7 998.2v-4.2a2 3.1 0 1 1 .1 0M1085.7 1000.0v-4.5a2.1 3.3 0 1 1 .1 0M1090.8 1000.6v-4.2a2 3.1 0 1 1 .1 0M1088.8 990.1v-4.5a2.1 3.3 0 1 1 .1 0M1093.9 990.7v-4.2a2 3.1 0 1 1 .1 0M1145.1 974.5v-4.5a2.1 3.3 0 1 1 .1 0M1150.2 975.1v-4.2a2 3.1 0 1 1 .1 0M1113.1 1004.1v-4.5a2.1 3.3 0 1 1 .1 0M1118.2 1004.7v-4.2a2 3.1 0 1 1 .1 0M1203.7 998.9v-4.5a2.1 3.3 0 1 1 .1 0M1208.8 999.5v-4.2a2 3.1 0 1 1 .1 0M1199.7 1004.6v-4.5a2.1 3.3 0 1 1 .1 0M1204.8 1005.2v-4.2a2 3.1 0 1 1 .1 0M1240.2 981.4v-4.5a2.1 3.3 0 1 1 .1 0M1245.3 982.0v-4.2a2 3.1 0 1 1 .1 0M1234.1 984.0v-4.5a2.1 3.3 0 1 1 .1 0M1239.2 984.6v-4.2a2 3.1 0 1 1 .1 0M1286.4 998.2v-4.5a2.1 3.3 0 1 1 .1 0M1291.5 998.8v-4.2a2 3.1 0 1 1 .1 0M1321.9 995.0v-4.5a2.1 3.3 0 1 1 .1 0M1327.0 995.6v-4.2a2 3.1 0 1 1 .1 0M1324.7 1005.7v-4.5a2.1 3.3 0 1 1 .1 0M1329.8 1006.3v-4.2a2 3.1 0 1 1 .1 0M1396.8 1010.4v-4.5a2.1 3.3 0 1 1 .1 0M1401.9 1011.0v-4.2a2 3.1 0 1 1 .1 0M1372.1 987.0v-4.5a2.1 3.3 0 1 1 .1 0M1377.2 987.6v-4.2a2 3.1 0 1 1 .1 0M1449.5 1011.3v-4.5a2.1 3.3 0 1 1 .1 0M1454.6 1011.9v-4.2a2 3.1 0 1 1 .1 0M1496.4 988.1v-4.5a2.1 3.3 0 1 1 .1 0M1501.5 988.7v-4.2a2 3.1 0 1 1 .1 0M1503.9 979.3v-4.5a2.1 3.3 0 1 1 .1 0M1509.0 979.9v-4.2a2 3.1 0 1 1 .1 0M1534.2 970.7v-4.5a2.1 3.3 0 1 1 .1 0M1539.3 971.3v-4.2a2 3.1 0 1 1 .1 0M1557.6 975.4v-4.5a2.1 3.3 0 1 1 .1 0M1562.7 976.0v-4.2a2 3.1 0 1 1 .1 0M1622.0 973.9v-4.5a2.1 3.3 0 1 1 .1 0M1627.1 974.5v-4.2a2 3.1 0 1 1 .1 0" fill="#2d5a3a" fill-opacity=".12" stroke="#2d5a3a" stroke-width="1.1" opacity=".05"/>
<g font-family="'DejaVu Sans','Liberation Sans',sans-serif" font-size="12" fill="#4d555b" stroke="#d6ead0" stroke-width="1.6" paint-order="stroke" stroke-linejoin="round">
<text transform="translate(1334.5 842) rotate(-16.3)" textLength="257" lengthAdjust="spacingAndGlyphs">Rundweg "Bannwald "Waldmoor-Torfstich"</text>
<text transform="translate(735 1011.8) rotate(-14.8)" textLength="252" lengthAdjust="spacingAndGlyphs">Rundweg "Bannwald "Waldmoor-Torfstich"</text>
</g>
<text transform="translate(943.5 251.5) rotate(-47)" font-family="'DejaVu Sans','Liberation Sans',sans-serif" font-size="12.5" fill="#5a6670" opacity=".13">Rundweg "Bannwald</text>
<g font-family="'DejaVu Sans','Liberation Sans',sans-serif" font-size="11.5" fill="#3f7f94" opacity=".6">
<text transform="translate(483 577) rotate(-31.5)" textLength="180" lengthAdjust="spacingAndGlyphs">Bannwald "Waldmoor-Torfstic</text>
</g>
<text transform="translate(1215 934.5) rotate(-12.8)" font-family="'Liberation Sans',sans-serif" font-size="16.2" fill="#111">nsg_1937</text>
<g fill="#20301c" opacity=".13" filter="url(#sh)"><circle cx="710.0" cy="785.2" r="5.5"/><circle cx="738.8" cy="780.2" r="5.5"/><circle cx="758.0" cy="798.2" r="5.5"/><circle cx="707.5" cy="809.5" r="5.5"/><circle cx="735.8" cy="812.0" r="5.5"/><circle cx="712.0" cy="824.0" r="5.5"/><circle cx="761.2" cy="824.5" r="5.5"/><circle cx="548.8" cy="891.2" r="5.5"/><circle cx="576.8" cy="898.8" r="5.5"/><circle cx="596.2" cy="890.0" r="5.5"/><circle cx="637.5" cy="891.5" r="5.5"/><circle cx="675.0" cy="889.0" r="5.5"/><circle cx="704.5" cy="907.5" r="5.5"/><circle cx="603.8" cy="914.5" r="5.5"/><circle cx="640.0" cy="913.2" r="5.5"/><circle cx="570.0" cy="926.5" r="5.5"/><circle cx="625.0" cy="936.2" r="5.5"/><circle cx="671.2" cy="928.2" r="5.5"/></g>
<g fill="#f80c12"><polygon points="708.1,779.8 706.4,780.7 707.2,782.5 705.3,782.2 704.9,784.1 703.5,782.8 702.1,784.1 701.7,782.2 699.8,782.5 700.6,780.7 698.9,779.8 700.6,778.8 699.8,777.0 701.7,777.3 702.1,775.4 703.5,776.7 704.9,775.4 705.3,777.3 707.2,777.0 706.4,778.8"/><polygon points="736.9,774.8 735.1,775.7 736.0,777.5 734.0,777.2 733.7,779.1 732.2,777.8 730.8,779.1 730.5,777.2 728.5,777.5 729.4,775.7 727.6,774.8 729.4,773.8 728.5,772.0 730.5,772.3 730.8,770.4 732.2,771.7 733.7,770.4 734.0,772.3 736.0,772.0 735.1,773.8"/><polygon points="756.1,792.8 754.4,793.7 755.2,795.5 753.3,795.2 752.9,797.1 751.5,795.8 750.1,797.1 749.7,795.2 747.8,795.5 748.6,793.7 746.9,792.8 748.6,791.8 747.8,790.0 749.7,790.3 750.1,788.4 751.5,789.7 752.9,788.4 753.3,790.3 755.2,790.0 754.4,791.8"/><polygon points="705.6,804.0 703.9,804.9 704.7,806.7 702.8,806.5 702.4,808.4 701.0,807.0 699.6,808.4 699.2,806.5 697.3,806.7 698.1,804.9 696.4,804.0 698.1,803.1 697.3,801.3 699.2,801.5 699.6,799.6 701.0,801.0 702.4,799.6 702.8,801.5 704.7,801.3 703.9,803.1"/><polygon points="733.9,806.5 732.1,807.4 733.0,809.2 731.0,809.0 730.7,810.9 729.2,809.5 727.8,810.9 727.5,809.0 725.5,809.2 726.4,807.4 724.6,806.5 726.4,805.6 725.5,803.8 727.5,804.0 727.8,802.1 729.2,803.5 730.7,802.1 731.0,804.0 733.0,803.8 732.1,805.6"/><polygon points="710.1,818.5 708.4,819.4 709.2,821.2 707.3,821.0 706.9,822.9 705.5,821.5 704.1,822.9 703.7,821.0 701.8,821.2 702.6,819.4 700.9,818.5 702.6,817.6 701.8,815.8 703.7,816.0 704.1,814.1 705.5,815.5 706.9,814.1 707.3,816.0 709.2,815.8 708.4,817.6"/><polygon points="759.4,819.0 757.6,819.9 758.5,821.7 756.5,821.5 756.2,823.4 754.8,822.0 753.3,823.4 753.0,821.5 751.0,821.7 751.9,819.9 750.1,819.0 751.9,818.1 751.0,816.3 753.0,816.5 753.3,814.6 754.8,816.0 756.2,814.6 756.5,816.5 758.5,816.3 757.6,818.1"/><polygon points="546.9,885.8 545.1,886.7 546.0,888.5 544.0,888.2 543.7,890.1 542.2,888.8 540.8,890.1 540.5,888.2 538.5,888.5 539.4,886.7 537.6,885.8 539.4,884.8 538.5,883.0 540.5,883.3 540.8,881.4 542.2,882.7 543.7,881.4 544.0,883.3 546.0,883.0 545.1,884.8"/><polygon points="574.9,893.2 573.1,894.2 574.0,896.0 572.0,895.7 571.7,897.6 570.2,896.3 568.8,897.6 568.5,895.7 566.5,896.0 567.4,894.2 565.6,893.2 567.4,892.3 566.5,890.5 568.5,890.8 568.8,888.9 570.2,890.2 571.7,888.9 572.0,890.8 574.0,890.5 573.1,892.3"/><polygon points="594.4,884.5 592.6,885.4 593.5,887.2 591.5,887.0 591.2,888.9 589.8,887.5 588.3,888.9 588.0,887.0 586.0,887.2 586.9,885.4 585.1,884.5 586.9,883.6 586.0,881.8 588.0,882.0 588.3,880.1 589.8,881.5 591.2,880.1 591.5,882.0 593.5,881.8 592.6,883.6"/><polygon points="635.6,886.0 633.9,886.9 634.7,888.7 632.8,888.5 632.4,890.4 631.0,889.0 629.6,890.4 629.2,888.5 627.3,888.7 628.1,886.9 626.4,886.0 628.1,885.1 627.3,883.3 629.2,883.5 629.6,881.6 631.0,883.0 632.4,881.6 632.8,883.5 634.7,883.3 633.9,885.1"/><polygon points="673.1,883.5 671.4,884.4 672.2,886.2 670.3,886.0 669.9,887.9 668.5,886.5 667.1,887.9 666.7,886.0 664.8,886.2 665.6,884.4 663.9,883.5 665.6,882.6 664.8,880.8 666.7,881.0 667.1,879.1 668.5,880.5 669.9,879.1 670.3,881.0 672.2,880.8 671.4,882.6"/><polygon points="702.6,902.0 700.9,902.9 701.7,904.7 699.8,904.5 699.4,906.4 698.0,905.0 696.6,906.4 696.2,904.5 694.3,904.7 695.1,902.9 693.4,902.0 695.1,901.1 694.3,899.3 696.2,899.5 696.6,897.6 698.0,899.0 699.4,897.6 699.8,899.5 701.7,899.3 700.9,901.1"/><polygon points="601.9,909.0 600.1,909.9 601.0,911.7 599.0,911.5 598.7,913.4 597.2,912.0 595.8,913.4 595.5,911.5 593.5,911.7 594.4,909.9 592.6,909.0 594.4,908.1 593.5,906.3 595.5,906.5 595.8,904.6 597.2,906.0 598.7,904.6 599.0,906.5 601.0,906.3 600.1,908.1"/><polygon points="638.1,907.8 636.4,908.7 637.2,910.5 635.3,910.2 634.9,912.1 633.5,910.8 632.1,912.1 631.7,910.2 629.8,910.5 630.6,908.7 628.9,907.8 630.6,906.8 629.8,905.0 631.7,905.3 632.1,903.4 633.5,904.7 634.9,903.4 635.3,905.3 637.2,905.0 636.4,906.8"/><polygon points="568.1,921.0 566.4,921.9 567.2,923.7 565.3,923.5 564.9,925.4 563.5,924.0 562.1,925.4 561.7,923.5 559.8,923.7 560.6,921.9 558.9,921.0 560.6,920.1 559.8,918.3 561.7,918.5 562.1,916.6 563.5,918.0 564.9,916.6 565.3,918.5 567.2,918.3 566.4,920.1"/><polygon points="623.1,930.8 621.4,931.7 622.2,933.5 620.3,933.2 619.9,935.1 618.5,933.8 617.1,935.1 616.7,933.2 614.8,933.5 615.6,931.7 613.9,930.8 615.6,929.8 614.8,928.0 616.7,928.3 617.1,926.4 618.5,927.7 619.9,926.4 620.3,928.3 622.2,928.0 621.4,929.8"/><polygon points="669.4,922.8 667.6,923.7 668.5,925.5 666.5,925.2 666.2,927.1 664.8,925.8 663.3,927.1 663.0,925.2 661.0,925.5 661.9,923.7 660.1,922.8 661.9,921.8 661.0,920.0 663.0,920.3 663.3,918.4 664.8,919.7 666.2,918.4 666.5,920.3 668.5,920.0 667.6,921.8"/></g>
<circle cx="354.5" cy="559.5" r="7.4" fill="#fff" stroke="#000" stroke-width="1.1"/><circle cx="354.5" cy="559.5" r="2.6" fill="#000"/><circle cx="361.0" cy="625.7" r="7.4" fill="#fff" stroke="#000" stroke-width="1.1"/><circle cx="361.0" cy="625.7" r="2.6" fill="#000"/><circle cx="342.5" cy="645.7" r="7.4" fill="#fff" stroke="#000" stroke-width="1.1"/><circle cx="342.5" cy="645.7" r="2.6" fill="#000"/><circle cx="638.0" cy="475.7" r="7.4" fill="#fff" stroke="#000" stroke-width="1.1"/><circle cx="638.0" cy="475.7" r="2.6" fill="#000"/><circle cx="604.0" cy="636.0" r="7.4" fill="#fff" stroke="#000" stroke-width="1.1"/><circle cx="604.0" cy="636.0" r="2.6" fill="#000"/><circle cx="929.8" cy="235.0" r="7.4" fill="#fff" stroke="#000" stroke-width="1.1"/><circle cx="929.8" cy="235.0" r="2.6" fill="#000"/><circle cx="985.0" cy="356.0" r="7.4" fill="#fff" stroke="#000" stroke-width="1.1"/><circle cx="985.0" cy="356.0" r="2.6" fill="#000"/><circle cx="1186.2" cy="216.8" r="7.4" fill="#fff" stroke="#000" stroke-width="1.1"/><circle cx="1186.2" cy="216.8" r="2.6" fill="#000"/><circle cx="1528.8" cy="691.0" r="7.4" fill="#fff" stroke="#000" stroke-width="1.1"/><circle cx="1528.8" cy="691.0" r="2.6" fill="#000"/><circle cx="722.2" cy="789.0" r="7.4" fill="#fff" stroke="#000" stroke-width="1.1"/><circle cx="722.2" cy="789.0" r="2.6" fill="#000"/><circle cx="463.0" cy="860.2" r="7.4" fill="#fff" stroke="#000" stroke-width="1.1"/><circle cx="463.0" cy="860.2" r="2.6" fill="#000"/><circle cx="711.0" cy="869.0" r="7.4" fill="#fff" stroke="#000" stroke-width="1.1"/><circle cx="711.0" cy="869.0" r="2.6" fill="#000"/><circle cx="739.8" cy="904.0" r="7.4" fill="#fff" stroke="#000" stroke-width="1.1"/><circle cx="739.8" cy="904.0" r="2.6" fill="#000"/><circle cx="404.8" cy="934.0" r="7.4" fill="#fff" stroke="#000" stroke-width="1.1"/><circle cx="404.8" cy="934.0" r="2.6" fill="#000"/><circle cx="648.7" cy="955.5" r="7.4" fill="#fff" stroke="#000" stroke-width="1.1"/><circle cx="648.7" cy="955.5" r="2.6" fill="#000"/><circle cx="336.6" cy="894.3" r="7.4" fill="#fff" stroke="#000" stroke-width="1.1"/><circle cx="336.6" cy="894.3" r="2.6" fill="#000"/><circle cx="617.7" cy="975.0" r="7.4" fill="#fff" stroke="#000" stroke-width="1.1"/><circle cx="617.7" cy="975.0" r="2.6" fill="#000"/><circle cx="1019.0" cy="734.0" r="7.4" fill="#fff" stroke="#000" stroke-width="1.1"/><circle cx="1019.0" cy="734.0" r="2.6" fill="#000"/><circle cx="1274.8" cy="820.8" r="7.4" fill="#fff" stroke="#000" stroke-width="1.1"/><circle cx="1274.8" cy="820.8" r="2.6" fill="#000"/><circle cx="1176.8" cy="844.8" r="7.4" fill="#fff" stroke="#000" stroke-width="1.1"/><circle cx="1176.8" cy="844.8" r="2.6" fill="#000"/><circle cx="978.0" cy="900.8" r="7.4" fill="#fff" stroke="#000" stroke-width="1.1"/><circle cx="978.0" cy="900.8" r="2.6" fill="#000"/><circle cx="1104.8" cy="945.2" r="7.4" fill="#fff" stroke="#000" stroke-width="1.1"/><circle cx="1104.8" cy="945.2" r="2.6" fill="#000"/><circle cx="986.7" cy="970.0" r="7.4" fill="#fff" stroke="#000" stroke-width="1.1"/><circle cx="986.7" cy="970.0" r="2.6" fill="#000"/>
<line x1="1208.5" y1="305.0" x2="1220.8" y2="321.7" stroke="#f80c12" stroke-width="3.1" stroke-linecap="round"/><polygon points="1233.8,339.5 1213.5,323.0 1220.8,321.7 1224.1,315.2" fill="#f80c12"/>
<line x1="880.5" y1="523.0" x2="868.4" y2="540.8" stroke="#f80c12" stroke-width="3.1" stroke-linecap="round"/><polygon points="856.0,559.0 864.8,534.4 868.4,540.8 875.7,541.8" fill="#f80c12"/>
<line x1="545.5" y1="966.5" x2="558.4" y2="952.7" stroke="#f80c12" stroke-width="3.1" stroke-linecap="round"/><polygon points="573.5,936.7 561.0,959.7 558.4,952.7 551.4,950.6" fill="#f80c12"/>
<g font-family="'Liberation Sans',sans-serif" font-size="16" fill="#0a0a0a" text-anchor="middle">
<text x="548.0" y="625.0">vpn</text>
<text x="845.0" y="575.0">vps</text>
<text x="805.5" y="717.0">vpb</text>
<text x="1305.0" y="709.5">vph</text>
<text x="997.0" y="346.0">ev3</text>
<text x="1327.5" y="310.5">ev4</text>
<text x="1240.5" y="353.5">vpd</text>
<text x="580.0" y="927.5">sma</text>
</g>
<rect x="845.5" y="924.5" width="125" height="42" fill="#ffff00" stroke="#000" stroke-width="2"/>
<text x="906" y="952" text-anchor="middle" font-family="'Liberation Sans',sans-serif" font-weight="bold" font-size="18.5" fill="#000">Bild 11</text>
</svg>
<div style="left:337px;top:191px;width:1225px;height:808px;border:1px solid #8f8f8f;background:none"></div>
<div style="left:49px;top:191px;width:1px;height:808px;background:#d0d0d0"></div>
<div style="left:2px;top:998px;width:48px;height:1px;background:#d0d0d0"></div>
<div class="ttl" style="left:51px;top:192px;width:281px;height:30.5px;"></div><div class="t" style="left:56px;top:198.05px;font-size:14.8px;line-height:21px;">Layer</div><svg style="left:284px;top:196px" width="46" height="22" viewBox="0 0 46 22"><g fill="none" stroke="#222" stroke-width="2"><path d="M2.5 9.5h10v8h-10z" stroke-width="2.2"/><path d="M6 9V4.6h10.5v8.2H13" stroke-width="2"/><path d="M2 10h11" stroke-width="3"/><path d="M5.5 5h11" stroke-width="3"/><path d="M28 4.5l13 13M41 4.5l-13 13" stroke-width="3"/></g></svg>
<div class="tree" style="left:51px;top:251px;width:281px;height:552px;"></div>
<div style="left:52px;top:252px;width:274px;height:530px;overflow:hidden">
<div class="cb" style="left:27.5px;top:4.3px;width:15px;height:15px;"></div><svg style="left:27.5px;top:4.3px" width="15" height="15" viewBox="0 0 15 15"><path d="M3.2 7.6l3 3 5.6-6.4" fill="none" stroke="#222" stroke-width="1.4"/></svg>
<svg style="left:47.5px;top:0.3px" width="23" height="23" viewBox="0 0 24 24"><circle cx="12" cy="12" r="8" fill="#fff" stroke="#111" stroke-width="1.300"/><circle cx="12" cy="12" r="2.800" fill="#111"/></svg>
<div class="t" style="left:75.3px;top:2.5px;font-size:14.7px;line-height:21px;font-weight:bold">Funde_WT_2017_2019</div>
<svg style="left:5px;top:29.8px" width="12" height="12" viewBox="0 0 12 12"><path d="M3.5 1.5l4.5 4.5-4.5 4.5" fill="none" stroke="#8a8a8a" stroke-width="1.5"/></svg>
<div class="cb" style="left:27.5px;top:28.3px;width:15px;height:15px;"></div><svg style="left:27.5px;top:28.3px" width="15" height="15" viewBox="0 0 15 15"><path d="M3.2 7.6l3 3 5.6-6.4" fill="none" stroke="#222" stroke-width="1.4"/></svg>
<svg style="left:48.5px;top:25.3px" width="21" height="21" viewBox="0 0 24 24"><rect x="2.500" y="10.500" width="12" height="11" fill="#f4f4f4" stroke="#8c8c8c"/><rect x="6.500" y="6.500" width="13" height="12" fill="#f7f7f7" stroke="#777"/><path d="M10.500 3v9.500c0 2.200 5 2.200 5 0v-8.500" fill="none" stroke="#777" stroke-width="1.400"/></svg>
<div class="t" style="left:75.3px;top:27px;font-size:14.45px;line-height:20px;">Gebiet_und_Wege</div>
<svg style="left:5px;top:53.8px" width="12" height="12" viewBox="0 0 12 12"><path d="M3.5 1.5l4.5 4.5-4.5 4.5" fill="none" stroke="#8a8a8a" stroke-width="1.5"/></svg>
<div class="cb" style="left:27.5px;top:52.3px;width:15px;height:15px;"></div>
<svg style="left:49.5px;top:50.3px" width="19" height="19" viewBox="0 0 24 24"><path d="M2 2h7v7h-7zM9 9h7v7h-7zM16 2h6v7h-6zM2 16h7v6h-7z" fill="#2a426a"/><path d="M9 2h7v7h-7zM2 9h7v7h-7zM16 9h6v7h-6zM9 16h7v6h-7z" fill="#a8c4e4"/><path d="M16 16h6v6h-6z" fill="#6a8ab8"/></svg>
<div class="t" style="left:75.3px;top:51px;font-size:14.35px;line-height:20px;font-weight:bold;font-style:italic;color:#7a7a7a">WMS LGRB-BW BK50: Bodenkarte</div>
<svg style="left:5px;top:77.8px" width="12" height="12" viewBox="0 0 12 12"><path d="M3.5 1.5l4.5 4.5-4.5 4.5" fill="none" stroke="#8a8a8a" stroke-width="1.5"/></svg>
<div class="cb" style="left:27.5px;top:76.3px;width:15px;height:15px;"></div>
<svg style="left:49.5px;top:74.3px" width="19" height="19" viewBox="0 0 24 24"><path d="M2 2h7v7h-7zM9 9h7v7h-7zM16 2h6v7h-6zM2 16h7v6h-7z" fill="#2a426a"/><path d="M9 2h7v7h-7zM2 9h7v7h-7zM16 9h6v7h-6zM9 16h7v6h-7z" fill="#a8c4e4"/><path d="M16 16h6v6h-6z" fill="#6a8ab8"/></svg>
<div class="t" style="left:75.3px;top:75px;font-size:14.35px;line-height:20px;font-weight:bold;font-style:italic;color:#7a7a7a">WMS LGRB-BW GK50: Geologie</div>
<svg style="left:5px;top:101.8px" width="12" height="12" viewBox="0 0 12 12"><path d="M3.5 1.5l4.5 4.5-4.5 4.5" fill="none" stroke="#8a8a8a" stroke-width="1.5"/></svg>
<div class="cb" style="left:27.5px;top:100.3px;width:15px;height:15px;"></div><svg style="left:27.5px;top:100.3px" width="15" height="15" viewBox="0 0 15 15"><path d="M3.2 7.6l3 3 5.6-6.4" fill="none" stroke="#222" stroke-width="1.4"/></svg>
<svg style="left:48.5px;top:97.3px" width="21" height="21" viewBox="0 0 24 24"><rect x="2.500" y="10.500" width="12" height="11" fill="#f4f4f4" stroke="#8c8c8c"/><rect x="6.500" y="6.500" width="13" height="12" fill="#f7f7f7" stroke="#777"/><path d="M10.500 3v9.500c0 2.200 5 2.200 5 0v-8.500" fill="none" stroke="#777" stroke-width="1.400"/></svg>
<div class="t" style="left:75.3px;top:99px;font-size:14.6px;line-height:20px;">Pflanzengesellschaften</div>
<svg style="left:5px;top:125.8px" width="12" height="12" viewBox="0 0 12 12"><path d="M3.5 1.5l4.5 4.5-4.5 4.5" fill="none" stroke="#8a8a8a" stroke-width="1.5"/></svg>
<div class="cb" style="left:27.5px;top:124.3px;width:15px;height:15px;"></div><svg style="left:27.5px;top:124.3px" width="15" height="15" viewBox="0 0 15 15"><path d="M3.2 7.6l3 3 5.6-6.4" fill="none" stroke="#222" stroke-width="1.4"/></svg>
<svg style="left:48.5px;top:121.3px" width="21" height="21" viewBox="0 0 24 24"><rect x="2.500" y="10.500" width="12" height="11" fill="#f4f4f4" stroke="#8c8c8c"/><rect x="6.500" y="6.500" width="13" height="12" fill="#f7f7f7" stroke="#777"/><path d="M10.500 3v9.500c0 2.200 5 2.200 5 0v-8.500" fill="none" stroke="#777" stroke-width="1.400"/></svg>
<div class="t" style="left:75.3px;top:122.5px;font-size:14.7px;line-height:21px;">Biotope</div>
<svg style="left:5px;top:149.8px" width="12" height="12" viewBox="0 0 12 12"><path d="M1.5 3.5l4.5 4.5 4.5-4.5" fill="none" stroke="#333" stroke-width="1.9"/></svg>
<div class="cb" style="left:27.5px;top:148.3px;width:15px;height:15px;"></div><svg style="left:27.5px;top:148.3px" width="15" height="15" viewBox="0 0 15 15"><path d="M3.2 7.6l3 3 5.6-6.4" fill="none" stroke="#222" stroke-width="1.4"/></svg>
<svg style="left:49.5px;top:146.3px" width="19" height="19" viewBox="0 0 24 24"><path d="M2 2h7v7h-7zM9 9h7v7h-7zM16 2h6v7h-6zM2 16h7v6h-7z" fill="#2a426a"/><path d="M9 2h7v7h-7zM2 9h7v7h-7zM16 9h6v7h-6zM9 16h7v6h-7z" fill="#a8c4e4"/><path d="M16 16h6v6h-6z" fill="#6a8ab8"/></svg>
<div class="t" style="left:75.3px;top:146.5px;font-size:14.7px;line-height:21px;font-weight:bold">OpenStreetMap Standard</div>
</div>
<div style="left:326.5px;top:253.3px;width:3.5px;height:21px;background:#e6e6e6"></div>
<div style="left:326.5px;top:277.3px;width:3.5px;height:21px;background:#e6e6e6"></div>
<div style="left:326.5px;top:301.3px;width:3.5px;height:21px;background:#e6e6e6"></div>
<div style="left:326.5px;top:325.3px;width:3.5px;height:21px;background:#e6e6e6"></div>
<div style="left:326.5px;top:349.3px;width:3.5px;height:21px;background:#e6e6e6"></div>
<div style="left:326.5px;top:373.3px;width:3.5px;height:21px;background:#e6e6e6"></div>
<div style="left:326.5px;top:397.3px;width:3.5px;height:21px;background:#e6e6e6"></div>
<div style="left:52px;top:782.5px;width:279px;height:19.5px;background:#f0f0f0"></div>
<div style="left:72.5px;top:782.5px;width:130.5px;height:19.5px;background:#cdcdcd"></div>
<svg style="left:55px;top:786px" width="12" height="12" viewBox="0 0 12 12"><path transform="rotate(180 6 6)" d="M3.5 1.5l4.5 4.5-4.5 4.5" fill="none" stroke="#555" stroke-width="1.5"/></svg>
<svg style="left:314px;top:786px" width="12" height="12" viewBox="0 0 12 12"><path d="M3.5 1.5l4.5 4.5-4.5 4.5" fill="none" stroke="#555" stroke-width="1.5"/></svg>
<div class="ttl" style="left:51px;top:809.5px;width:281px;height:30px;"></div><div class="t" style="left:56px;top:815.3px;font-size:15px;line-height:21px;">Koordinatenaufnahme</div><svg style="left:284px;top:813.5px" width="46" height="22" viewBox="0 0 46 22"><g fill="none" stroke="#222" stroke-width="2"><path d="M2.5 9.5h10v8h-10z" stroke-width="2.2"/><path d="M6 9V4.6h10.5v8.2H13" stroke-width="2"/><path d="M2 10h11" stroke-width="3"/><path d="M5.5 5h11" stroke-width="3"/><path d="M28 4.5l13 13M41 4.5l-13 13" stroke-width="3"/></g></svg>
<div style="left:62px;top:855.5px;width:25px;height:23.5px;background:#e1e1e1;border:1px solid #c2c2c2"></div>
<div style="left:62px;top:920.5px;width:25px;height:23.5px;background:#e1e1e1;border:1px solid #c2c2c2"></div>
<div class="inp" style="left:104px;top:856px;width:217.5px;height:21.5px;"></div>
<div class="inp" style="left:104px;top:888px;width:217.5px;height:21.5px;"></div>
<div class="btn" style="left:105px;top:919.5px;width:215.5px;height:25.5px;"></div>
<div class="btn" style="left:105px;top:955.5px;width:215.5px;height:26px;"></div>
<div class="t" style="left:133px;top:923.5px;font-size:12.75px;line-height:18px;">In Zwischenablage kopieren</div>
<div class="t" style="left:173px;top:960px;font-size:12.75px;line-height:18px;">Aufnahme starten</div>
<svg style="left:2px;top:2.500px" width="22" height="23" viewBox="0 0 22 23"><circle cx="10" cy="11" r="7.300" fill="none" stroke="#6da82e" stroke-width="3.400"/><path d="M10 11l8.300 8.300" stroke="#5c9436" stroke-width="4"/><path d="M7.300 8.300l2 6.200 1.500-2.500 2.600 2.600 1.700-1.700-2.600-2.600 2.500-1z" fill="#f0b62a"/></svg><div class="hd" style="left:3.5px;top:57.5px;height:28px"></div><div class="hd" style="left:203.5px;top:57.5px;height:28px"></div><div class="sep" style="left:199px;top:57.5px;height:28px"></div><div class="sep" style="left:647px;top:57.5px;height:28px"></div><div class="hd" style="left:651.5px;top:57.5px;height:28px"></div><div class="hl" style="left:212.5px;top:56px;width:31px;height:31px"></div><div class="hl" style="left:1030px;top:56px;width:31px;height:31px"></div><svg style="left:14px;top:58.5px" width="26" height="26" viewBox="0 0 24 24"><path d="M5.5 2.5h9l4.5 4.5v14.5h-13.5z" fill="#fff" stroke="#555" stroke-width="1"/><path d="M14.5 2.5v4.5h4.5" fill="#e8e8e8" stroke="#555" stroke-width="1"/></svg><svg style="left:44.5px;top:58.5px" width="26" height="26" viewBox="0 0 24 24"><path d="M2.5 6h6l2 2h9v3h-17z" fill="#e0b63a" stroke="#b98f1f" stroke-width=".8"/><path d="M2.5 19.5l2.2-9.5h17l-2.5 9.5z" fill="#f6d35b" stroke="#c39a26" stroke-width=".8"/></svg><svg style="left:76px;top:58.5px" width="26" height="26" viewBox="0 0 24 24"><rect x="2.5" y="2.5" width="19" height="19" rx="2" fill="#5b8ec6" stroke="#34609a"/><rect x="6" y="3" width="12" height="8" fill="#eef2f8"/><path d="M7.5 5.5h9M7.5 8h9" stroke="#8da5c4"/><rect x="7" y="14" width="10" height="7.5" fill="#34609a"/><rect x="9" y="15.5" width="3" height="4.5" fill="#dfe7f2"/></svg><svg style="left:107px;top:58.5px" width="26" height="26" viewBox="0 0 24 24"><path d="M3.5 3.5h11l5 5v13h-16z" fill="#fbf6dc" stroke="#777"/><path d="M3.5 3.5h4v18h-4z" fill="#f0c84a" stroke="#b0902a" stroke-width=".8"/><path d="M14.5 3.5v5h5" fill="#e4e4e4" stroke="#777"/><path d="M5 6h2M5 9h2M5 12h2M5 15h2" stroke="#8a6d12" stroke-width=".8"/><g transform="translate(12.5 12.5)"><rect width="10" height="10" rx="1" fill="#e9c524" stroke="#b89410" stroke-width=".6"/><path d="M5 1.4v7.2M1.6 3.3l6.8 3.4M1.6 6.7l6.8 -3.4" stroke="#fff" stroke-width="1.5"/></g></svg><svg style="left:138px;top:58.5px" width="26" height="26" viewBox="0 0 24 24"><path d="M3.5 3.5h14l3 3v14h-17z" fill="#fdfdfd" stroke="#777"/><path d="M9 7c2-2 5-1 5 1l7 9-2.5 2-7-9c-2 1-4-1-2.5-3z" fill="#c9ced6" stroke="#666" stroke-width=".8"/><path d="M15.5 14l4.5 5.5" stroke="#c29a3a" stroke-width="2.6"/></svg><svg style="left:168.5px;top:58.5px" width="26" height="26" viewBox="0 0 24 24"><circle cx="7" cy="6.5" r="4.2" fill="#d9573a" stroke="#a93a22" stroke-width=".7"/><rect x="3" y="13" width="8" height="8" fill="#6aa870" stroke="#3f7a43" stroke-width=".7"/><path d="M14 10.5l6-7.5" stroke="#4f86b8" stroke-width="2.6" stroke-linecap="round"/><text x="17.3" y="21" font-family="'Liberation Sans',sans-serif" font-size="11" text-anchor="middle" fill="#333">a</text></svg><svg style="left:215px;top:58.5px" width="26" height="26" viewBox="0 0 24 24"><path d="M8 21c-2-3-4.5-6-5-8.500c-.3-1.400 1.500-2 2.500-.500l2 2.500v-9.500c0-1.700 2.300-1.700 2.300 0v-1.500c0-1.700 2.400-1.700 2.400 0v1.200c0-1.600 2.300-1.600 2.300 0v1.600c0-1.400 2.200-1.400 2.200 0v8.700c0 2.500-1 4-1.700 6z" fill="#fff" stroke="#222" stroke-width="1.1" stroke-linejoin="round"/><path d="M10 12v-6M12.400 12v-6.500M14.700 12v-5" stroke="#222" stroke-width=".8"/></svg><svg style="left:245.5px;top:58.5px" width="26" height="26" viewBox="0 0 24 24"><rect x="7" y="7" width="10" height="10" fill="#f2dc45" stroke="#b79f1e" stroke-width=".8"/><path d="M12 1l3.600 4.500h-7.200zM12 23l3.600-4.500h-7.200zM1 12l4.500-3.600v7.200zM23 12l-4.500-3.600v7.200z" fill="#4f86c0" stroke="#2f5f95" stroke-width=".7"/></svg><svg style="left:276px;top:58.5px" width="26" height="26" viewBox="0 0 24 24"><path d="M10.3 13.8l-7.5 8" stroke="#6b5a1a" stroke-width="3.6" stroke-linecap="round"/><path d="M10.2 14l-7.3 7.8" stroke="#e8c63a" stroke-width="2.2" stroke-linecap="round"/><circle cx="14.5" cy="9" r="6.6" fill="#f4f4f4" stroke="#5a5a5a" stroke-width="1.3"/><path d="M14.5 5.200v7.600M10.700 9h7.600" stroke="#3f78b8" stroke-width="2.4"/></svg><svg style="left:307px;top:58.5px" width="26" height="26" viewBox="0 0 24 24"><path d="M10.3 13.8l-7.5 8" stroke="#6b5a1a" stroke-width="3.6" stroke-linecap="round"/><path d="M10.2 14l-7.3 7.8" stroke="#e8c63a" stroke-width="2.2" stroke-linecap="round"/><circle cx="14.5" cy="9" r="6.6" fill="#f4f4f4" stroke="#5a5a5a" stroke-width="1.3"/><path d="M10.700 9h7.600" stroke="#3f78b8" stroke-width="2.4"/></svg><svg style="left:338px;top:58.5px" width="26" height="26" viewBox="0 0 24 24"><path d="M8.8 15.8l-7.5 8" stroke="#6b5a1a" stroke-width="3.6" stroke-linecap="round"/><path d="M8.7 16l-7.3 7.8" stroke="#e8c63a" stroke-width="2.2" stroke-linecap="round"/><circle cx="13" cy="11" r="5.5" fill="#f4f4f4" stroke="#5a5a5a" stroke-width="1.3"/><path d="M3 2h6l-2 2 3 3-2 2-3-3-2 2zM21 2h-6l2 2-3 3 2 2 3-3 2 2zM21 20h-6l2-2-3-3 2-2 3 3 2-2zM3 20" fill="#4f86c0" stroke="#2f5f95" stroke-width=".6"/></svg><svg style="left:369px;top:58.5px" width="26" height="26" viewBox="0 0 24 24"><rect x="2.500" y="3.500" width="10" height="10" fill="#f2dc45" stroke="#b79f1e" stroke-width=".8"/><path d="M10.8 14.3l-7.5 8" stroke="#6b5a1a" stroke-width="3.6" stroke-linecap="round"/><path d="M10.7 14.5l-7.3 7.8" stroke="#e8c63a" stroke-width="2.2" stroke-linecap="round"/><circle cx="15" cy="9.5" r="6.8" fill="#f7f2d8" stroke="#5a5a5a" stroke-width="1.3"/><path d="M15 5v9" stroke="#d8c890" stroke-width="1"/></svg><svg style="left:400px;top:58.5px" width="26" height="26" viewBox="0 0 24 24"><rect x="2.500" y="3.500" width="10" height="10" fill="#dcdcdc" stroke="#8a8a8a" stroke-width=".8"/><path d="M10.8 14.3l-7.5 8" stroke="#6b5a1a" stroke-width="3.6" stroke-linecap="round"/><path d="M10.7 14.5l-7.3 7.8" stroke="#e8c63a" stroke-width="2.2" stroke-linecap="round"/><circle cx="15" cy="9.5" r="6.8" fill="#f2f2f2" stroke="#5a5a5a" stroke-width="1.3"/><path d="M15 5v9" stroke="#c9c9c9" stroke-width="1"/></svg><svg style="left:431px;top:58.5px" width="26" height="26" viewBox="0 0 24 24"><rect x="3" y="3.500" width="9" height="9" fill="#e6e6e6" stroke="#cdcdcd" stroke-width=".8"/><path d="M10.200 14l-7 7.500" stroke="#cfcfcf" stroke-width="3" stroke-linecap="round"/><circle cx="15" cy="9.500" r="6.800" fill="#ededed" stroke="#c4c4c4" stroke-width="1.200"/><text x="15" y="12.300" font-family="'Liberation Sans',sans-serif" font-size="7.500" text-anchor="middle" fill="#bdbdbd" font-weight="bold">1:1</text></svg><svg style="left:462px;top:58.5px" width="26" height="26" viewBox="0 0 24 24"><path d="M8.8 13.8l-7.5 8" stroke="#6b5a1a" stroke-width="3.6" stroke-linecap="round"/><path d="M8.7 14l-7.3 7.8" stroke="#e8c63a" stroke-width="2.2" stroke-linecap="round"/><circle cx="13" cy="9" r="6.8" fill="#f4f4f4" stroke="#5a5a5a" stroke-width="1.3"/><rect x="11" y="12" width="11" height="10" fill="#4f86c0" stroke="#2f5f95" stroke-width=".7"/><path d="M19.500 14l-5 3 5 3" fill="none" stroke="#fff" stroke-width="1.800"/></svg><svg style="left:493px;top:58.5px" width="26" height="26" viewBox="0 0 24 24"><path d="M9 14l-7 7.500" stroke="#cfcfcf" stroke-width="3" stroke-linecap="round"/><circle cx="13" cy="9" r="6.800" fill="#ededed" stroke="#c9c9c9" stroke-width="1.200"/><rect x="11" y="12" width="11" height="10" fill="#d6d6d6" stroke="#c4c4c4" stroke-width=".7"/><path d="M14 14l5 3-5 3" fill="none" stroke="#f2f2f2" stroke-width="1.800"/></svg><svg style="left:524.5px;top:58.5px" width="26" height="26" viewBox="0 0 24 24"><path d="M3.500 2.500h14.500v17h-11c-2 0-3.500-1-3.500-3z" fill="#dcdcdc" stroke="#8d8d8d"/><path d="M3.500 2.500c2 0 3 1 3 3v14" fill="none" stroke="#8d8d8d"/><g transform="translate(12.5 12.5)"><rect width="10" height="10" rx="1" fill="#e9c524" stroke="#b89410" stroke-width=".6"/><path d="M5 1.4v7.2M1.6 3.3l6.8 3.4M1.6 6.7l6.8 -3.4" stroke="#fff" stroke-width="1.5"/></g></svg><svg style="left:556.5px;top:58.5px" width="26" height="26" viewBox="0 0 24 24"><path d="M5 2h9v15l-1 1h-5z" fill="#5b8ec6" stroke="#2f5f95"/><path d="M5 2h4.500v18l-4.500-3z" fill="#7fa8d8" stroke="#2f5f95" stroke-width=".8"/><g transform="translate(12.5 12.5)"><rect width="10" height="10" rx="1" fill="#e9c524" stroke="#b89410" stroke-width=".6"/><path d="M5 1.4v7.2M1.6 3.3l6.8 3.4M1.6 6.7l6.8 -3.4" stroke="#fff" stroke-width="1.5"/></g></svg><svg style="left:587px;top:58.5px" width="26" height="26" viewBox="0 0 24 24"><path d="M2.500 3.500h19v16h-15c-2 0-4-1-4-3z" fill="#d6d6d6" stroke="#8a8a8a"/><path d="M2.500 3.500c2 0 3.500 1 3.500 3v13" fill="none" stroke="#8a8a8a"/><path d="M13 2.500h4.500v9l-2.250-2.500-2.250 2.500z" fill="#5b8ec6" stroke="#2f5f95" stroke-width=".8"/></svg><svg style="left:617px;top:58.5px" width="26" height="26" viewBox="0 0 24 24"><path d="M3 11a9 9 0 0 1 15.500-5.500l2.500-2.500v8h-8l2.700-2.700a5.200 5.200 0 0 0-8.900 2.700z" fill="#4a90d6" stroke="#2a68a8" stroke-width=".8"/><path d="M21 13a9 9 0 0 1-15.500 5.500l-2.500 2.500v-8h8l-2.700 2.700a5.200 5.200 0 0 0 8.900-2.700z" fill="#4a90d6" stroke="#2a68a8" stroke-width=".8"/></svg><svg style="left:661px;top:58.5px" width="26" height="26" viewBox="0 0 24 24"><circle cx="9.500" cy="9.500" r="8" fill="#4f86c0" stroke="#2f5f95"/><text x="9.500" y="14.200" font-family="'Liberation Serif',serif" font-style="italic" font-weight="bold" font-size="13.500" text-anchor="middle" fill="#fff">i</text><path d="M13.5 9.5l0 12 3-2.800 2.200 4.600 1.900-.9-2.200-4.500h4z" fill="#fff" stroke="#333" stroke-width=".9" stroke-linejoin="round"/></svg><svg style="left:693px;top:58.5px" width="26" height="26" viewBox="0 0 24 24"><circle cx="10" cy="10" r="6" fill="none" stroke="#cfcfcf" stroke-width="4" stroke-dasharray="3.140 1.570"/><circle cx="10" cy="10" r="5" fill="#e4e4e4" stroke="#c8c8c8"/><circle cx="10" cy="10" r="2" fill="#f4f4f4"/><path d="M13.5 10l0 12 3-2.800 2.200 4.600 1.900-.9-2.200-4.500h4z" fill="#f2f2f2" stroke="#c4c4c4" stroke-width=".9" stroke-linejoin="round"/></svg><svg style="left:738px;top:58.5px" width="26" height="26" viewBox="0 0 24 24"><path d="M2.500 3l14 2.500-2 10.500-10-1z" fill="#f2dc45" stroke="#555" stroke-width=".9" stroke-dasharray="2.200 1.300"/><path d="M15 1.500l6 2.500-3 5" fill="none" stroke="#777" stroke-width=".9" stroke-dasharray="2 1.200"/><path d="M11 7.5l0 12 3-2.800 2.200 4.600 1.900-.9-2.200-4.500h4z" fill="#fff" stroke="#333" stroke-width=".9" stroke-linejoin="round"/></svg><svg style="left:786px;top:58.5px" width="26" height="26" viewBox="0 0 24 24"><rect x="2.500" y="3.500" width="14" height="11" fill="#dedede" stroke="#8a8a8a"/><path d="M4.500 6.500h10M4.500 9.500h10" stroke="#9d9d9d" stroke-width="1.500"/><rect x="7.500" y="10.500" width="13" height="10" fill="#f2dc45" stroke="#b79f1e"/></svg><svg style="left:832px;top:58.5px" width="26" height="26" viewBox="0 0 24 24"><rect x="2.500" y="2.500" width="13" height="13" fill="#f2dc45" stroke="#c9a92a"/><circle cx="17" cy="17" r="5" fill="#e05a5a" stroke="#b03030"/><path d="M13.800 20.200l6.400-6.400" stroke="#fff" stroke-width="1.600"/><circle cx="17" cy="17" r="3" fill="none" stroke="#fff" stroke-width="1.200"/></svg><svg style="left:862px;top:58.5px" width="26" height="26" viewBox="0 0 24 24"><rect x="2.500" y="3.500" width="19" height="17" fill="#fff" stroke="#4f86c0" stroke-width="1.200"/><rect x="2.500" y="3.500" width="19" height="4" fill="#8fb4dc"/><path d="M5 10.500h4M11 10.500h8M5 13.500h4M11 13.500h8M5 16.500h4M11 16.500h8" stroke="#4f86c0" stroke-width="1.300"/></svg><svg style="left:893px;top:58.5px" width="26" height="26" viewBox="0 0 24 24"><path d="M3 2.500v18M21 2.500v18M1.500 21h21" stroke="#555" stroke-width="1.600"/><path d="M3 6h18M3 11.500h18M3 17h18" stroke="#777" stroke-width=".8"/><g stroke-width=".8"><circle cx="7" cy="6" r="2" fill="#e0604a" stroke="#a0301a"/><circle cx="12" cy="6" r="2" fill="#e0604a" stroke="#a0301a"/><circle cx="17.500" cy="6" r="2" fill="#e0604a" stroke="#a0301a"/><circle cx="7" cy="11.500" r="2" fill="#6ab07a" stroke="#3a7a4a"/><circle cx="14" cy="11.500" r="2" fill="#6ab07a" stroke="#3a7a4a"/><circle cx="18" cy="11.500" r="2" fill="#6ab07a" stroke="#3a7a4a"/><circle cx="6.500" cy="17" r="2" fill="#5b8ec6" stroke="#2f5f95"/><circle cx="11" cy="17" r="2" fill="#5b8ec6" stroke="#2f5f95"/><circle cx="17" cy="17" r="2" fill="#5b8ec6" stroke="#2f5f95"/></g></svg><svg style="left:923.5px;top:58.5px" width="26" height="26" viewBox="0 0 24 24"><g transform="translate(12 12)"><g fill="#6f9fd6" stroke="#3f6fa8" stroke-width=".7"><rect x="-2" y="-11" width="4" height="6" rx="1" transform="rotate(0)"/><rect x="-2" y="-11" width="4" height="6" rx="1" transform="rotate(45)"/><rect x="-2" y="-11" width="4" height="6" rx="1" transform="rotate(90)"/><rect x="-2" y="-11" width="4" height="6" rx="1" transform="rotate(135)"/><rect x="-2" y="-11" width="4" height="6" rx="1" transform="rotate(180)"/><rect x="-2" y="-11" width="4" height="6" rx="1" transform="rotate(225)"/><rect x="-2" y="-11" width="4" height="6" rx="1" transform="rotate(270)"/><rect x="-2" y="-11" width="4" height="6" rx="1" transform="rotate(315)"/><circle r="7"/></g><circle r="3" fill="#f0f0f0" stroke="#3f6fa8" stroke-width=".7"/></g></svg><svg style="left:954.5px;top:58.5px" width="26" height="26" viewBox="0 0 24 24"><path d="M4.500 3h14.500v4.500h-1.500c0-1.500-1-2-2.500-2h-6.500l5.500 6.500-6 7h7.500c1.800 0 2.800-.7 3-2.500h1.500l-.5 5h-15.500v-1.500l6.500-7.700-6-7z" fill="#a020a0" stroke="#701070" stroke-width=".5"/></svg><svg style="left:986px;top:58.5px" width="26" height="26" viewBox="0 0 24 24"><path d="M2.500 6h19M2.500 3.500v5M21.500 3.500v5" stroke="#2f5f95" stroke-width="1.500"/><rect x="2.500" y="12.500" width="19" height="7" fill="#d0d0d0" stroke="#555"/><path d="M5.500 12.500v3M8.500 12.500v4.500M11.500 12.500v3M14.500 12.500v4.500M17.500 12.500v3" stroke="#555" stroke-width=".9"/></svg><svg style="left:1032px;top:58.5px" width="26" height="26" viewBox="0 0 24 24"><path d="M6 3h12c2.500 0 4 1.500 4 4v4c0 2.500-1.500 4-4 4h-7.500l-4.500 4 1-4.200c-2.500 0-4-1.300-4-3.800v-4c0-2.500 1.500-4 3-4z" fill="#f5e680" stroke="#b8a530" stroke-width=".9"/><circle cx="5" cy="19.500" r="3" fill="#7aaa5a" stroke="#4a7a3a" stroke-width=".8"/></svg><svg style="left:1063px;top:58.5px" width="26" height="26" viewBox="0 0 24 24"><path d="M2.500 2.500h19v13h-11l-6 5.500 1.500-5.500h-3.500z" fill="#fafafa" stroke="#8a8a8a"/><text x="12" y="13.300" font-family="'Liberation Serif',serif" font-size="13" text-anchor="middle" fill="#222">T</text></svg><svg style="left:723.7px;top:68.5px" width="10" height="6" viewBox="0 0 10 6"><path d="M0.5 .5h9l-4.5 5z" fill="#8c8c8c"/></svg><svg style="left:770px;top:68.5px" width="10" height="6" viewBox="0 0 10 6"><path d="M0.5 .5h9l-4.5 5z" fill="#111"/></svg><svg style="left:816px;top:68.5px" width="10" height="6" viewBox="0 0 10 6"><path d="M0.5 .5h9l-4.5 5z" fill="#111"/></svg><svg style="left:1017.5px;top:68.5px" width="10" height="6" viewBox="0 0 10 6"><path d="M0.5 .5h9l-4.5 5z" fill="#111"/></svg><svg style="left:1093.7px;top:68.5px" width="10" height="6" viewBox="0 0 10 6"><path d="M0.5 .5h9l-4.5 5z" fill="#111"/></svg><div class="hd" style="left:3.5px;top:91.5px;height:28px"></div><div class="hd" style="left:210.5px;top:91.5px;height:28px"></div><div class="hd" style="left:610.5px;top:91.5px;height:28px"></div><div class="hd" style="left:918.5px;top:91.5px;height:28px"></div><div class="hd" style="left:1056.5px;top:91.5px;height:28px"></div><div class="hd" style="left:1163.5px;top:91.5px;height:28px"></div><div class="hd" style="left:1363.5px;top:91.5px;height:28px"></div><div class="hd" style="left:1408.5px;top:91.5px;height:28px"></div><div class="sep" style="left:170px;top:91.5px;height:28px"></div><div class="sep" style="left:206px;top:91.5px;height:28px"></div><div class="sep" style="left:607px;top:91.5px;height:28px"></div><div class="sep" style="left:685px;top:91.5px;height:28px"></div><div class="sep" style="left:753.5px;top:91.5px;height:28px"></div><div class="sep" style="left:913.5px;top:91.5px;height:28px"></div><div class="sep" style="left:1052.5px;top:91.5px;height:28px"></div><div class="sep" style="left:1159.5px;top:91.5px;height:28px"></div><div class="sep" style="left:1359px;top:91.5px;height:28px"></div><div class="sep" style="left:1405px;top:91.5px;height:28px"></div><div class="hl" style="left:1417px;top:90px;width:31px;height:31px"></div><svg style="left:14px;top:92.5px" width="26" height="26" viewBox="0 0 24 24"><rect x="3" y="7" width="11" height="11" fill="#e07a2a" stroke="#a04a10" stroke-width=".7" transform="rotate(-18 8 12)"/><rect x="5" y="5" width="11" height="11" fill="#f0c030" stroke="#a88010" stroke-width=".7" transform="rotate(-8 10 10)"/><rect x="8" y="2.500" width="12" height="12" fill="#5b8ec6" stroke="#2f5f95" stroke-width=".7" transform="rotate(8 14 8)"/><g transform="translate(14 14)"><rect width="9" height="9" rx="1.6" fill="#5a9e5e" stroke="#3f7a43" stroke-width=".6"/><path d="M4.5 1.7v5.6M1.7 4.5h5.6" stroke="#fff" stroke-width="1.9"/></g></svg><svg style="left:44.5px;top:92.5px" width="26" height="26" viewBox="0 0 24 24"><path d="M2 9l9-4 10 4v9l-10 4.500-9-4.500z" fill="#e8bc2a" stroke="#8a6a10" stroke-width=".8"/><path d="M2 9l9 4.500 10-4.500M11 13.500v9" fill="none" stroke="#8a6a10" stroke-width=".8"/><circle cx="11.500" cy="7" r="5.500" fill="#5b8ec6" stroke="#2f5f95" stroke-width=".8"/><path d="M8 5c2 0 2 2 4 2s1 3 3 3" fill="none" stroke="#9ac070" stroke-width="1.800"/><g transform="translate(13.5 13.5)"><rect width="9.5" height="9.5" rx="1" fill="#e9c524" stroke="#b89410" stroke-width=".6"/><path d="M4.75 1.4v6.7M1.6 3.05l6.3 3.4M1.6 6.45l6.3 -3.4" stroke="#fff" stroke-width="1.5"/></g></svg><svg style="left:76px;top:92.5px" width="26" height="26" viewBox="0 0 24 24"><path d="M3.500 3.500l6 15.500 9-15" fill="none" stroke="#333" stroke-width="1.300"/><g fill="#fff" stroke="#333" stroke-width=".9"><circle cx="3.500" cy="3.500" r="1.900"/><circle cx="9.500" cy="19" r="1.900"/><circle cx="18.500" cy="4" r="1.900"/></g><g transform="translate(14 14)"><rect width="9" height="9" rx="1" fill="#e9c524" stroke="#b89410" stroke-width=".6"/><path d="M4.5 1.4v6.2M1.6 2.8l5.8 3.4M1.6 6.2l5.8 -3.4" stroke="#fff" stroke-width="1.5"/></g></svg><svg style="left:107px;top:92.5px" width="26" height="26" viewBox="0 0 24 24"><path d="M3 21c1-8 6-16 17-18.500-1 7-6 12-13 14z" fill="#5b8ec6" stroke="#2f5f95" stroke-width=".8"/><path d="M3 21.500c3-8 8-13 15-17" fill="none" stroke="#dfe9f5" stroke-width=".9"/><g transform="translate(14 14)"><rect width="9" height="9" rx="1" fill="#e9c524" stroke="#b89410" stroke-width=".6"/><path d="M4.5 1.4v6.2M1.6 2.8l5.8 3.4M1.6 6.2l5.8 -3.4" stroke="#fff" stroke-width="1.5"/></g></svg><svg style="left:138px;top:92.5px" width="26" height="26" viewBox="0 0 24 24"><rect x="3" y="6.500" width="17" height="10" fill="#4f86c0" stroke="#2f5f95"/><path d="M6 6.500v-3.500M9 6.500v-3.500M12 6.500v-3.500M15 6.500v-3.500M18 6.500v-3.500M6 16.500v3.500M9 16.500v3.500M12 16.500v3.500" stroke="#2f5f95" stroke-width="1.300"/><g transform="translate(14 14)"><rect width="9" height="9" rx="1" fill="#e9c524" stroke="#b89410" stroke-width=".6"/><path d="M4.5 1.4v6.2M1.6 2.8l5.8 3.4M1.6 6.2l5.8 -3.4" stroke="#fff" stroke-width="1.5"/></g></svg><svg style="left:176px;top:92.5px" width="26" height="26" viewBox="0 0 24 24"><rect x="1.500" y="1.500" width="20" height="20" rx="2" fill="#8fb4dc" stroke="#3f6fa8" stroke-width="1.200"/><path d="M5.500 4.500l5 13.500 8-13" fill="none" stroke="#333" stroke-width="1.200"/><g fill="#fff" stroke="#333" stroke-width=".9"><circle cx="5.500" cy="4.500" r="1.700"/><circle cx="10.500" cy="18" r="1.700"/><circle cx="18.500" cy="5" r="1.700"/></g><g transform="translate(14 14)"><rect width="9" height="9" rx="1" fill="#e9c524" stroke="#b89410" stroke-width=".6"/><path d="M4.5 1.4v6.2M1.6 2.8l5.8 3.4M1.6 6.2l5.8 -3.4" stroke="#fff" stroke-width="1.5"/></g></svg><svg style="left:220px;top:92.5px" width="26" height="26" viewBox="0 0 24 24"><path d="M3 19l2-6 8-10 3 2.500-8 10zM8 20l2-5 7-9 2.500 2-7 9z" fill="#d4d4d4" stroke="#c2c2c2" stroke-width=".8"/><path d="M16 19h5l-2.500 3z" fill="#bcbcbc"/></svg><svg style="left:251px;top:92.5px" width="26" height="26" viewBox="0 0 24 24"><path d="M4 21l1.500-6.500 10.500-12 4.500 4-10.500 12z" fill="#f0cc3a" stroke="#8a7010" stroke-width=".9"/><path d="M4 21l1.500-6.500 5 4.500z" fill="#f3e2b8" stroke="#8a7010" stroke-width=".7"/><path d="M4 21l.6-2.600 2 1.800z" fill="#333"/><path d="M14.300 4.500l4.500 4" stroke="#8a7010" stroke-width=".8"/></svg><svg style="left:282px;top:92.5px" width="26" height="26" viewBox="0 0 24 24"><rect x="2.500" y="2.500" width="17" height="17" rx="1.500" fill="#dcdcdc" stroke="#c6c6c6"/><rect x="5.500" y="3" width="11" height="7" fill="#efefef"/><rect x="6.500" y="12.500" width="9" height="7" fill="#cbcbcb"/><path d="M12 21l1-4 7-8 2.500 2.200-7 8z" fill="#d6d6d6" stroke="#c2c2c2" stroke-width=".8"/></svg><svg style="left:313px;top:92.5px" width="26" height="26" viewBox="0 0 24 24"><path d="M3 8c0-4 6-4 8-2s5-2 8-1 3 6 0 7-3 4-7 3-3-2-6-2-3-3-3-5z" fill="#dadada" stroke="#bdbdbd" stroke-width=".8"/><rect x="11" y="13" width="9" height="9" rx="1" fill="#cfcfcf" stroke="#bababa" stroke-width=".6"/><path d="M15.5 14.4v6.2M12.7 15.8l5.6 3.4M12.7 19.2l5.6-3.4" stroke="#f4f4f4" stroke-width="1.4"/></svg><svg style="left:344px;top:92.5px" width="26" height="26" viewBox="0 0 24 24"><path d="M4 4l6 15M10 11l9-5M8 13l9 8" stroke="#cdcdcd" stroke-width="1.200" fill="none"/><circle cx="4.500" cy="4.500" r="2" fill="#ececec" stroke="#c4c4c4"/><path d="M11 12l8 7-2 2-8-7z" fill="#d2d2d2" stroke="#c4c4c4" stroke-width=".6"/><path d="M17 9l-6 10" stroke="#d0d0d0" stroke-width="2.400"/></svg><svg style="left:391px;top:92.5px" width="26" height="26" viewBox="0 0 24 24"><rect x="2.500" y="4.500" width="17" height="16" fill="#dcdcdc" stroke="#c8c8c8"/><path d="M2.500 8.500h17M2.500 12.500h17M2.500 16.500h17" stroke="#cbcbcb"/><path d="M11 19l1.500-5 8-10 3 2.500-8 10z" fill="#d2d2d2" stroke="#c0c0c0" stroke-width=".8"/></svg><svg style="left:421.5px;top:92.5px" width="26" height="26" viewBox="0 0 24 24"><path d="M4.500 8h15l-1.500 14h-12z" fill="#dadada" stroke="#c6c6c6"/><path d="M3 6h18M9 6v-2.500h6v2.500" fill="none" stroke="#c6c6c6" stroke-width="1.600"/><path d="M9 11v8M12 11v8M15 11v8" stroke="#c6c6c6" stroke-width="1.100"/></svg><svg style="left:453px;top:92.5px" width="26" height="26" viewBox="0 0 24 24"><path d="M3 5l13 9M3 14l13-9" stroke="#cacaca" stroke-width="1.800"/><circle cx="18.500" cy="16.500" r="3" fill="none" stroke="#cacaca" stroke-width="1.600"/><circle cx="18.500" cy="4.500" r="2.600" fill="none" stroke="#cacaca" stroke-width="1.600"/></svg><svg style="left:483.5px;top:92.5px" width="26" height="26" viewBox="0 0 24 24"><path d="M4.500 6.500h9v14h-9z" fill="#ececec" stroke="#c4c4c4"/><path d="M9.500 2.500h7l3 3v12h-10z" fill="#f2f2f2" stroke="#c4c4c4"/><path d="M11.500 8.500h6M11.500 11h6M11.500 13.500h6" stroke="#d0d0d0"/></svg><svg style="left:514.5px;top:92.5px" width="26" height="26" viewBox="0 0 24 24"><rect x="3.500" y="3.500" width="15" height="18" rx="1" fill="#dedede" stroke="#c4c4c4"/><rect x="7.500" y="2" width="7" height="3.500" fill="#cfcfcf" stroke="#c0c0c0" stroke-width=".7"/><path d="M7.500 8.500h10.500v13h-10.500z" fill="#f0f0f0" stroke="#c8c8c8"/><path d="M9.500 11.500h6.500M9.500 14h6.500M9.500 16.500h6.500" stroke="#d2d2d2"/></svg><svg style="left:546px;top:92.5px" width="26" height="26" viewBox="0 0 24 24"><path d="M3 9l7-6v4c6 0 10 3 10 8 0 3-2 5-4 6 1-4-1-7-6-7v4z" fill="#d6d6d6" stroke="#c8c8c8" stroke-width=".7"/></svg><svg style="left:577px;top:92.5px" width="26" height="26" viewBox="0 0 24 24"><path d="M21 9l-7-6v4c-6 0-10 3-10 8 0 3 2 5 4 6-1-4 1-7 6-7v4z" fill="#d6d6d6" stroke="#c8c8c8" stroke-width=".7"/></svg><svg style="left:621px;top:92.5px" width="26" height="26" viewBox="0 0 24 24"><g transform="translate(1.500 0)"><path d="M1 8.5l4.5-4.7h13.5v9.4H5.5z" fill="#f2d648" stroke="#a88c14" stroke-width="1"/><text x="11.95" y="11.6" font-family="'DejaVu Sans','Liberation Sans',sans-serif" font-weight="bold" font-size="7.6" text-anchor="middle" fill="#222">abc</text></g></svg><svg style="left:652px;top:92.5px" width="26" height="26" viewBox="0 0 24 24"><circle cx="9" cy="9" r="7" fill="#6ab04c" stroke="#333" stroke-width=".7"/><path d="M9 9v-7a7 7 0 0 1 6.600 4.600z" fill="#f0c020" stroke="#333" stroke-width=".6"/><path d="M9 9l6.600-2.400a7 7 0 0 1-3 8.700z" fill="#d83a2a" stroke="#333" stroke-width=".6"/><rect x="11" y="12" width="4" height="10" fill="#f0c020" stroke="#333" stroke-width=".6"/><rect x="15" y="15" width="3.500" height="7" fill="#3a9a3a" stroke="#333" stroke-width=".6"/><rect x="18.500" y="17.500" width="3.500" height="4.500" fill="#d83a2a" stroke="#333" stroke-width=".6"/></svg><svg style="left:691px;top:92.5px" width="26" height="26" viewBox="0 0 24 24"><path d="M1 8.5l4.5-4.7h12v9.4H5.5z" fill="#b8d4ee" stroke="#4f86c0" stroke-width="1"/><text x="11.2" y="11.6" font-family="'DejaVu Sans','Liberation Sans',sans-serif" font-weight="bold" font-size="7.6" text-anchor="middle" fill="#222">ab</text><path d="M16 9v8" stroke="#e8e8e8" stroke-width="2.200"/><circle cx="16" cy="18.5" r="3.700" fill="#b8202a" stroke="#701018" stroke-width=".7"/></svg><svg style="left:721px;top:92.5px" width="26" height="26" viewBox="0 0 24 24"><g transform="translate(1.500 0)"><path d="M1 8.5l4.5-4.7h13.5v9.4H5.5z" fill="#f8d0d0" stroke="#d02828" stroke-width="1"/><text x="11.95" y="11.6" font-family="'DejaVu Sans','Liberation Sans',sans-serif" font-weight="bold" font-size="7.6" text-anchor="middle" fill="#c01818">abc</text></g></svg><svg style="left:759.5px;top:92.5px" width="26" height="26" viewBox="0 0 24 24"><path d="M1 8.5l4.5-4.7h12v9.4H5.5z" fill="#f2d648" stroke="#a88c14" stroke-width="1"/><text x="11.2" y="11.6" font-family="'DejaVu Sans','Liberation Sans',sans-serif" font-weight="bold" font-size="7.6" text-anchor="middle" fill="#222">ab</text><path d="M16 9v8" stroke="#e8e8e8" stroke-width="2.200"/><circle cx="16" cy="18.5" r="3.700" fill="#b8202a" stroke="#701018" stroke-width=".7"/></svg><svg style="left:791px;top:92.5px" width="26" height="26" viewBox="0 0 24 24"><g transform="translate(1.500 0)"><path d="M1 8.5l4.5-4.7h13.5v9.4H5.5z" fill="#f2d648" stroke="#a88c14" stroke-width="1"/><text x="11.95" y="11.6" font-family="'DejaVu Sans','Liberation Sans',sans-serif" font-weight="bold" font-size="7.6" text-anchor="middle" fill="#222">abc</text></g><path d="M7 19c3-4.500 10-4.500 13 0-3 4-10 4-13 0z" fill="#fff" stroke="#333" stroke-width=".8"/><circle cx="13.500" cy="19" r="2.300" fill="#2f5f95"/></svg><svg style="left:822px;top:92.5px" width="26" height="26" viewBox="0 0 24 24"><g transform="translate(1.500 0)"><path d="M1 8.5l4.5-4.7h13.5v9.4H5.5z" fill="#f2d648" stroke="#a88c14" stroke-width="1"/><text x="11.95" y="11.6" font-family="'DejaVu Sans','Liberation Sans',sans-serif" font-weight="bold" font-size="7.6" text-anchor="middle" fill="#222">abc</text></g><rect x="13" y="13.500" width="9" height="9" rx="1.500" fill="#34507a" stroke="#1a2f50" stroke-width=".6"/><path d="M14.500 17h3v-2l3.300 3-3.300 3v-2h-3z" fill="#fff"/></svg><svg style="left:853px;top:92.5px" width="26" height="26" viewBox="0 0 24 24"><g transform="translate(1.500 0)"><path d="M1 8.5l4.5-4.7h13.5v9.4H5.5z" fill="#f2d648" stroke="#a88c14" stroke-width="1"/><text x="11.95" y="11.6" font-family="'DejaVu Sans','Liberation Sans',sans-serif" font-weight="bold" font-size="7.6" text-anchor="middle" fill="#222">abc</text></g><rect x="13" y="13.500" width="9" height="9" rx="1.500" fill="#34507a" stroke="#1a2f50" stroke-width=".6"/><path d="M15 19.500a2.600 2.600 0 1 0 1.300-3.600" fill="none" stroke="#fff" stroke-width="1.400"/></svg><svg style="left:883.5px;top:92.5px" width="26" height="26" viewBox="0 0 24 24"><g transform="translate(1.500 0)"><path d="M1 8.5l4.5-4.7h13.5v9.4H5.5z" fill="#f2d648" stroke="#a88c14" stroke-width="1"/><text x="11.95" y="11.6" font-family="'DejaVu Sans','Liberation Sans',sans-serif" font-weight="bold" font-size="7.6" text-anchor="middle" fill="#222">abc</text></g><rect x="13" y="13.500" width="9" height="9" rx="1" fill="#e9c524" stroke="#a88c14" stroke-width=".6"/><path d="M14.800 21l1-2.500 3.500-3.500 1.500 1.500-3.500 3.500z" fill="#fff"/></svg><svg style="left:929px;top:92.5px" width="26" height="26" viewBox="0 0 24 24"><path d="M3 5c0-4 17-4 17 0v14c0 4-17 4-17 0z" fill="#2faa3a" stroke="#14701e"/><ellipse cx="11.500" cy="5" rx="8.500" ry="2.800" fill="#5ed068" stroke="#14701e" stroke-width=".8"/><path d="M6 3v18M17 3v18" stroke="#7ee08a" stroke-width="1.200" opacity=".7"/><path d="M9 15l5-5 2 2-5 5z" fill="#f0f0f0" stroke="#777" stroke-width=".5"/></svg><svg style="left:960px;top:92.5px" width="26" height="26" viewBox="0 0 24 24"><text x="9" y="21" font-family="'Liberation Sans',sans-serif" font-weight="bold" font-size="15" text-anchor="middle" fill="#3ab83a" stroke="#167a16" stroke-width=".7">ID</text><path d="M11 14l8-8" stroke="#111" stroke-width="2"/><path d="M22 2.500l-2.500 8-5.500-5.500z" fill="#111"/></svg><svg style="left:991.5px;top:92.5px" width="26" height="26" viewBox="0 0 24 24"><rect x="2.500" y="3.500" width="19" height="18" fill="#5a7a4a" stroke="#2a4a2a"/><rect x="2.500" y="3.500" width="19" height="3.500" fill="#2aa02a"/><path d="M2.500 21l6-9 4 5 3-4 6 8z" fill="#8aa070" opacity=".9"/><rect x="2.500" y="9" width="19" height="2" fill="#c8d8c0" opacity=".6"/></svg><svg style="left:1022px;top:92.5px" width="26" height="26" viewBox="0 0 24 24"><path d="M3 5.500v13c0 4 18 4 18 0v-13z" fill="#5b8ec6" stroke="#2f5f95"/><ellipse cx="12" cy="5.500" rx="9" ry="3.300" fill="#8fb4dc" stroke="#2f5f95"/><path d="M3 10c0 4 18 4 18 0M3 14.500c0 4 18 4 18 0" fill="none" stroke="#2f5f95" stroke-width=".9"/></svg><svg style="left:1067px;top:92.5px" width="26" height="26" viewBox="0 0 24 24"><circle cx="11" cy="11" r="9.5" fill="#7fa8d8" stroke="#4a6a94" stroke-width="1"/><path d="M4 7c3 1 5 0 6 3s-3 4-2 7M9 12c2 3 6 2 7 5" fill="none" stroke="#b8c4d2" stroke-width="2.2"/><ellipse cx="11" cy="11" rx="4.275" ry="9.5" fill="none" stroke="#3d5f8c" stroke-width=".7"/><path d="M1.5 11h19M11 1.5v19" stroke="#3d5f8c" stroke-width=".7"/><rect x="13.500" y="14" width="8.500" height="8" rx="1.500" fill="#4a7a4a" stroke="#2a4a2a" stroke-width=".5"/><path d="M15 17h5.500l-2.750 3.500z" fill="#111"/></svg><svg style="left:1098px;top:92.5px" width="26" height="26" viewBox="0 0 24 24"><circle cx="11" cy="11" r="9.5" fill="#7fa8d8" stroke="#4a6a94" stroke-width="1"/><path d="M4 7c3 1 5 0 6 3s-3 4-2 7M9 12c2 3 6 2 7 5" fill="none" stroke="#b8c4d2" stroke-width="2.2"/><ellipse cx="11" cy="11" rx="4.275" ry="9.5" fill="none" stroke="#3d5f8c" stroke-width=".7"/><path d="M1.5 11h19M11 1.5v19" stroke="#3d5f8c" stroke-width=".7"/><rect x="13.500" y="14" width="8.500" height="8" rx="1.500" fill="#5a9e5e" stroke="#3f7a43" stroke-width=".5"/><circle cx="17.200" cy="17.500" r="2" fill="none" stroke="#fff" stroke-width="1.100"/><path d="M18.700 19l2 2" stroke="#fff" stroke-width="1.200"/></svg><svg style="left:1129px;top:92.5px" width="26" height="26" viewBox="0 0 24 24"><circle cx="12" cy="10" r="9.500" fill="#d8dde4" stroke="#3a4a5c" stroke-width="1"/><path d="M5 6c3 1 5 0 6 3s-3 4-2 7M13 3c2 3 6 2 7 5" fill="none" stroke="#4a6a94" stroke-width="2.500"/><ellipse cx="12" cy="10" rx="4.300" ry="9.500" fill="none" stroke="#3a4a5c" stroke-width=".7"/><path d="M2.500 10h19" stroke="#3a4a5c" stroke-width=".7"/><path d="M6 14h4l2 6h-8zM14 14h4l2 6h-8z" fill="#111"/><circle cx="7" cy="19.500" r="3" fill="#111"/><circle cx="17" cy="19.500" r="3" fill="#111"/><rect x="10" y="15" width="4" height="3" fill="#111"/></svg><svg style="left:1174px;top:92.5px" width="26" height="26" viewBox="0 0 24 24"><path d="M11 2c-5 0-5 2-5 3.500v2.500h5.500v1h-7.500c-2 0-3 2-3 4.500s1 4.500 3 4.500h2v-3c0-2 1.500-3 3-3h5c1.500 0 2.500-1 2.500-2.500v-4c0-2-2-3.500-5.500-3.500z" fill="#3a74a8"/><circle cx="8.300" cy="4.700" r="1" fill="#fff"/><path d="M12 22c5 0 5-2 5-3.500v-2.500h-5.500v-1h7.500c2 0 3-2 3-4.500s-1-4.500-3-4.500h-2v3c0 2-1.500 3-3 3h-5c-1.500 0-2.500 1-2.500 2.500v4c0 2 2 3.500 5.500 3.500z" fill="#f4cc40"/><path d="M17 17.500l4.500 2.300-4.500 2.300" fill="none" stroke="#333" stroke-width="1.100"/></svg><svg style="left:1205.5px;top:92.5px" width="26" height="26" viewBox="0 0 24 24"><text x="10" y="11.500" font-family="'Liberation Sans',sans-serif" font-weight="bold" font-size="9.500" text-anchor="middle" fill="#333">KML</text><g transform="translate(13 13.5)"><rect width="9" height="9" rx="1.6" fill="#5a9e5e" stroke="#3f7a43" stroke-width=".6"/><path d="M4.5 1.7v5.6M1.7 4.5h5.6" stroke="#fff" stroke-width="1.9"/></g></svg><svg style="left:1236px;top:92.5px" width="26" height="26" viewBox="0 0 24 24"><text x="11.500" y="10" font-family="'Liberation Sans',sans-serif" font-weight="bold" font-size="8.800" text-anchor="middle" fill="#111" textLength="22" lengthAdjust="spacingAndGlyphs">HTML</text><g transform="translate(13 13)"><rect width="9.5" height="9.5" rx="1" fill="#e9c524" stroke="#b89410" stroke-width=".6"/><path d="M4.75 1.4v6.7M1.6 3.05l6.3 3.4M1.6 6.45l6.3 -3.4" stroke="#fff" stroke-width="1.5"/></g></svg><svg style="left:1267px;top:92.5px" width="26" height="26" viewBox="0 0 24 24"><rect x="1.500" y="3" width="18" height="14" rx="4" fill="#b8cce4" stroke="#34507a"/><path d="M3 5h5v4h-5zM13 5h5v4h-5zM8 9h5v4h-5zM3 13h5v3h-5zM13 13h5v3h-5z" fill="#34507a"/><g transform="translate(13.5 13.5)"><rect width="9.5" height="9.5" rx="1.6" fill="#5a9e5e" stroke="#3f7a43" stroke-width=".6"/><path d="M4.75 1.7v6.1M1.7 4.75h6.1" stroke="#fff" stroke-width="1.9"/></g></svg><svg style="left:1298px;top:92.5px" width="26" height="26" viewBox="0 0 24 24"><rect x="1.5" y="1" width="4.500" height="4.500" rx=".8" fill="#c8c84a" stroke="#999" stroke-width=".3"/><rect x="1.5" y="6.5" width="4.500" height="4.500" rx=".8" fill="#8ac8a0" stroke="#999" stroke-width=".3"/><rect x="1.5" y="12" width="4.500" height="4.500" rx=".8" fill="#e0a060" stroke="#999" stroke-width=".3"/><rect x="1.5" y="17.5" width="4.500" height="4.500" rx=".8" fill="#b09ae0" stroke="#999" stroke-width=".3"/><rect x="7" y="1" width="4.500" height="4.500" rx=".8" fill="#b09ae0" stroke="#999" stroke-width=".3"/><rect x="7" y="6.5" width="4.500" height="4.500" rx=".8" fill="#8ab0e0" stroke="#999" stroke-width=".3"/><rect x="7" y="12" width="4.500" height="4.500" rx=".8" fill="#e08a8a" stroke="#999" stroke-width=".3"/><rect x="7" y="17.5" width="4.500" height="4.500" rx=".8" fill="#c8c84a" stroke="#999" stroke-width=".3"/><rect x="12.5" y="1" width="4.500" height="4.500" rx=".8" fill="#c8c84a" stroke="#999" stroke-width=".3"/><rect x="12.5" y="6.5" width="4.500" height="4.500" rx=".8" fill="#8ac8a0" stroke="#999" stroke-width=".3"/><rect x="12.5" y="12" width="4.500" height="4.500" rx=".8" fill="#e0a060" stroke="#999" stroke-width=".3"/><rect x="12.5" y="17.5" width="4.500" height="4.500" rx=".8" fill="#b09ae0" stroke="#999" stroke-width=".3"/><rect x="18" y="1" width="4.500" height="4.500" rx=".8" fill="#b09ae0" stroke="#999" stroke-width=".3"/><rect x="18" y="6.5" width="4.500" height="4.500" rx=".8" fill="#8ab0e0" stroke="#999" stroke-width=".3"/><rect x="18" y="12" width="4.500" height="4.500" rx=".8" fill="#e08a8a" stroke="#999" stroke-width=".3"/><rect x="18" y="17.5" width="4.500" height="4.500" rx=".8" fill="#c8c84a" stroke="#999" stroke-width=".3"/></svg><svg style="left:1328.5px;top:92.5px" width="26" height="26" viewBox="0 0 24 24"><rect x="2" y="2" width="17" height="17" fill="#f4f8fc" stroke="#6f9fd6" stroke-width="1.200"/><path d="M7.700 2v17M13.400 2v17M2 7.700h17M2 13.400h17" stroke="#6f9fd6" stroke-width="1.100"/><g transform="translate(14 14)"><rect width="9" height="9" rx="1" fill="#e9c524" stroke="#b89410" stroke-width=".6"/><path d="M4.5 1.4v6.2M1.6 2.8l5.8 3.4M1.6 6.2l5.8 -3.4" stroke="#fff" stroke-width="1.5"/></g></svg><svg style="left:1373.5px;top:92.5px" width="26" height="26" viewBox="0 0 24 24"><rect x="2.500" y="2" width="19" height="20" rx="1" fill="#4a6a94" stroke="#1a2f50"/><rect x="2.500" y="2" width="4" height="20" fill="#1a2f50"/><text x="14" y="17" font-family="'Liberation Sans',sans-serif" font-size="14" text-anchor="middle" fill="#e8eef8">?</text></svg><svg style="left:1419.5px;top:92.5px" width="26" height="26" viewBox="0 0 24 24"><path d="M12 2v20M2 12h20" stroke="#333" stroke-width="1"/><circle cx="12" cy="12" r="3.300" fill="none" stroke="#b02020" stroke-width="1"/></svg><svg style="left:376px;top:102.5px" width="10" height="6" viewBox="0 0 10 6"><path d="M0.5 .5h9l-4.5 5z" fill="#8c8c8c"/></svg><div class="hd" style="left:3.5px;top:125.5px;height:28px"></div><svg style="left:13.5px;top:126px" width="27" height="27" viewBox="0 0 24 24"><path d="M2.500 21.500v-18l18 18z" fill="#dcdcdc" stroke="#c2c2c2"/><path d="M7 17.500v-6l6 6z" fill="#f0f0f0" stroke="#c2c2c2" stroke-width=".8"/><path d="M19 4v16" stroke="#cfcfcf" stroke-width="3"/></svg><svg style="left:44px;top:126px" width="27" height="27" viewBox="0 0 24 24"><path d="M3 8c0-4 6-4 8-2s5-2 8-1 3 6 0 7-3 4-7 3-3-2-6-2-3-3-3-5z" fill="#dadada" stroke="#bdbdbd" stroke-width=".8"/><rect x="12" y="13" width="9" height="9" rx="1" fill="#cfcfcf" stroke="#bababa" stroke-width=".6"/><path d="M13.3 16.2h4v-2l3 3.4-3 3.4v-2h-4z" fill="#f4f4f4"/></svg><svg style="left:90.5px;top:126px" width="27" height="27" viewBox="0 0 24 24"><path d="M3 8c0-4 6-4 8-2s5-2 8-1 3 6 0 7-3 4-7 3-3-2-6-2-3-3-3-5z" fill="#dadada" stroke="#bdbdbd" stroke-width=".8"/><rect x="12" y="13" width="9" height="9" rx="1" fill="#cfcfcf" stroke="#bababa" stroke-width=".6"/><circle cx="16.5" cy="17.5" r="2.6" fill="none" stroke="#f4f4f4" stroke-width="1.3"/></svg><svg style="left:121.5px;top:126px" width="27" height="27" viewBox="0 0 24 24"><path d="M3 8c0-4 6-4 8-2s5-2 8-1 3 6 0 7-3 4-7 3-3-2-6-2-3-3-3-5z" fill="#dadada" stroke="#bdbdbd" stroke-width=".8"/><path d="M9 12l6-3 6 3v7l-6 3-6-3z" fill="#d4d4d4" stroke="#c2c2c2" stroke-width=".7"/></svg><svg style="left:152.5px;top:126px" width="27" height="27" viewBox="0 0 24 24"><path d="M3 8c0-4 6-4 8-2s5-2 8-1 3 6 0 7-3 4-7 3-3-2-6-2-3-3-3-5z" fill="#dadada" stroke="#bdbdbd" stroke-width=".8"/><rect x="12" y="13" width="9" height="9" rx="1" fill="#cfcfcf" stroke="#bababa" stroke-width=".6"/><path d="M16.5 14.4v6.2M13.7 15.8l5.6 3.4M13.7 19.2l5.6-3.4" stroke="#f4f4f4" stroke-width="1.4"/></svg><svg style="left:183.5px;top:126px" width="27" height="27" viewBox="0 0 24 24"><path d="M3 8c0-4 6-4 8-2s5-2 8-1 3 6 0 7-3 4-7 3-3-2-6-2-3-3-3-5z" fill="#dadada" stroke="#bdbdbd" stroke-width=".8"/><rect x="13" y="13" width="9" height="9" rx="1" fill="#cfcfcf" stroke="#bababa" stroke-width=".6"/><path d="M17.5 14.4v6.2M14.7 15.8l5.6 3.4M14.7 19.2l5.6-3.4" stroke="#f4f4f4" stroke-width="1.4"/><path d="M2 17c2-3 6-2 7 0s-2 5-5 4z" fill="#d6d6d6" stroke="#c4c4c4" stroke-width=".6"/></svg><svg style="left:214.5px;top:126px" width="27" height="27" viewBox="0 0 24 24"><path d="M3 8c0-4 6-4 8-2s5-2 8-1 3 6 0 7-3 4-7 3-3-2-6-2-3-3-3-5z" fill="#dadada" stroke="#bdbdbd" stroke-width=".8"/><rect x="12" y="13" width="9" height="9" rx="1" fill="#cfcfcf" stroke="#bababa" stroke-width=".6"/><path d="M14 15l5 5M14 20l5-5" stroke="#f4f4f4" stroke-width="1.6"/></svg><svg style="left:245.5px;top:126px" width="27" height="27" viewBox="0 0 24 24"><path d="M3 8c0-4 6-4 8-2s5-2 8-1 3 6 0 7-3 4-7 3-3-2-6-2-3-3-3-5z" fill="#dadada" stroke="#bdbdbd" stroke-width=".8"/><rect x="13" y="13" width="9" height="9" rx="1" fill="#cfcfcf" stroke="#bababa" stroke-width=".6"/><path d="M15 15l5 5M15 20l5-5" stroke="#f4f4f4" stroke-width="1.6"/><path d="M2 17c2-3 6-2 7 0s-2 5-5 4z" fill="#d6d6d6" stroke="#c4c4c4" stroke-width=".6"/></svg><svg style="left:276.5px;top:126px" width="27" height="27" viewBox="0 0 24 24"><path d="M3 8c0-4 6-4 8-2s5-2 8-1 3 6 0 7-3 4-7 3-3-2-6-2-3-3-3-5z" fill="#dadada" stroke="#bdbdbd" stroke-width=".8"/><rect x="13" y="13" width="9" height="9" rx="1" fill="#cfcfcf" stroke="#bababa" stroke-width=".6"/><path d="M17.5 14.4v6.2M14.7 15.8l5.6 3.4M14.7 19.2l5.6-3.4" stroke="#f4f4f4" stroke-width="1.4"/><path d="M2 17c2-3 6-2 7 0s-2 5-5 4z" fill="#d6d6d6" stroke="#c4c4c4" stroke-width=".6"/></svg><svg style="left:307.5px;top:126px" width="27" height="27" viewBox="0 0 24 24"><path d="M4 6c3-4 10-2 13-1s4 4 1 6-6 0-7 4-2 7-5 6-1-5-2-8-2-5 0-7z" fill="#d8d8d8" stroke="#c4c4c4" stroke-width=".8"/></svg><svg style="left:338.5px;top:126px" width="27" height="27" viewBox="0 0 24 24"><path d="M3 14c0-4 4-4 6-6s5-5 9-3 3 6 0 8-5 2-7 5-8 0-8-4z" fill="#d4d4d4" stroke="#c4c4c4" stroke-width=".8"/><path d="M7 15c3-1 6-5 10-6" fill="none" stroke="#e8e8e8" stroke-width="1.500"/></svg><svg style="left:369.5px;top:126px" width="27" height="27" viewBox="0 0 24 24"><path d="M4 3l5 13 7-12" fill="none" stroke="#cdcdcd" stroke-width="1.200"/><circle cx="4" cy="3.500" r="1.700" fill="#eee" stroke="#c8c8c8"/><circle cx="16" cy="4" r="1.700" fill="#eee" stroke="#c8c8c8"/><rect x="12" y="13" width="9" height="9" rx="1" fill="#cfcfcf" stroke="#bababa" stroke-width=".6"/><circle cx="16.5" cy="17.5" r="2.6" fill="none" stroke="#f4f4f4" stroke-width="1.3"/></svg><svg style="left:400.5px;top:126px" width="27" height="27" viewBox="0 0 24 24"><path d="M9 1v22M2 10h20" stroke="#d0d0d0" stroke-width="1.300"/><rect x="14" y="3" width="5" height="5" fill="#ececec" stroke="#cbcbcb"/><rect x="3" y="15" width="5" height="5" fill="#ececec" stroke="#cbcbcb"/><circle cx="12" cy="10" r="1.800" fill="#ececec" stroke="#cbcbcb"/><path d="M15 13v9" stroke="#d0d0d0"/></svg><svg style="left:431.5px;top:126px" width="27" height="27" viewBox="0 0 24 24"><path d="M3 6c2-4 7-3 8 0s2-4 6-3 5 5 2 7-6 1-8-1-5 3-8 0z" fill="#d8d8d8" stroke="#c6c6c6" stroke-width=".7"/><path d="M9 10l6 9M15 10l-6 9" stroke="#c9c9c9" stroke-width="1.600"/><circle cx="8" cy="20.500" r="2" fill="none" stroke="#c9c9c9" stroke-width="1.300"/><circle cx="16" cy="20.500" r="2" fill="none" stroke="#c9c9c9" stroke-width="1.300"/></svg><svg style="left:462.5px;top:126px" width="27" height="27" viewBox="0 0 24 24"><path d="M3 6c2-4 7-3 8 0s2-4 6-3 5 5 2 7-6 1-8-1-5 3-8 0z" fill="#d8d8d8" stroke="#c6c6c6" stroke-width=".7"/><path d="M9 10l6 9M15 10l-6 9" stroke="#c9c9c9" stroke-width="1.600"/><circle cx="8" cy="20.500" r="2" fill="none" stroke="#c9c9c9" stroke-width="1.300"/><circle cx="16" cy="20.500" r="2" fill="none" stroke="#c9c9c9" stroke-width="1.300"/></svg><svg style="left:494px;top:126px" width="27" height="27" viewBox="0 0 24 24"><path d="M3 6c2-4 7-3 8 0s2-4 6-3 5 5 2 7-6 1-8-1-5 3-8 0z" fill="#d8d8d8" stroke="#c6c6c6" stroke-width=".7"/><path d="M3 7h18" stroke="#ececec" stroke-width="1.200"/><path d="M9 11c0 5 5 5 3 10" fill="none" stroke="#c9c9c9" stroke-width="1.500"/></svg><svg style="left:525px;top:126px" width="27" height="27" viewBox="0 0 24 24"><path d="M3 5h18M3 10h18M3 15h18M3 20h18" stroke="#d4d4d4" stroke-width="1.100"/><path d="M12 3v19" stroke="#d4d4d4" stroke-width="1.100"/><path d="M8 3v4M16 8v4M8 13v4M16 18v3" stroke="#cfcfcf" stroke-width="1.800"/></svg><svg style="left:555.5px;top:126px" width="27" height="27" viewBox="0 0 24 24"><path d="M9 20c-4-4-3-11 3-15" fill="none" stroke="#d0d0d0" stroke-width="1.300"/><path d="M12 3l9 6-9 5z" fill="#e4e4e4" stroke="#cbcbcb" stroke-width=".8"/><path d="M7 21h10l-5-5z" fill="#e2e2e2" stroke="#d0d0d0" stroke-width=".7"/></svg><svg style="left:76px;top:136.5px" width="10" height="6" viewBox="0 0 10 6"><path d="M0.5 .5h9l-4.5 5z" fill="#8c8c8c"/></svg><svg style="left:587.5px;top:136.5px" width="10" height="6" viewBox="0 0 10 6"><path d="M0.5 .5h9l-4.5 5z" fill="#8c8c8c"/></svg><div class="hd" style="left:3.5px;top:159.5px;height:28px"></div><div class="sep" style="left:75px;top:159.5px;height:28px"></div><div class="hd" style="left:79.5px;top:159.5px;height:28px"></div><svg style="left:14px;top:160.5px" width="26" height="26" viewBox="0 0 24 24"><path d="M2 5l6-2 7 2 7-2v16l-7 2-7-2-6 2z" fill="#b8dca0" stroke="#8ab878" stroke-width=".6"/><path d="M4 7c3 2 5-1 8 1s5 0 8 2M5 14c4-2 6 2 9 0" fill="none" stroke="#8ec4d8" stroke-width="1.600"/><path d="M13 18l2.500 2.500 5.500-6" fill="none" stroke="#3f8a2a" stroke-width="2"/><circle cx="8" cy="10" r="3" fill="#d8ecc0" opacity=".8"/></svg><svg style="left:44.5px;top:160.5px" width="26" height="26" viewBox="0 0 24 24"><path d="M2 6l6-2 7 2 7-2v15l-7 2-7-2-6 2z" fill="#f4e4a0" stroke="#c8b060" stroke-width=".6"/><path d="M3 14l7-4 5 8" fill="#8ac8e8"/><path d="M5 5h6v5h-6z" fill="#7cc47a"/><path d="M9 21l1.500-5 9-13 2.500 2-9 13z" fill="#a85a2a" stroke="#5a2a0a" stroke-width=".7"/><path d="M8 10l6 1-2 5-5-1z" fill="#e8a0a0" opacity=".7"/></svg><svg style="left:90px;top:160.5px" width="26" height="26" viewBox="0 0 24 24"><path d="M12 2l3.500 4.500h-2.400v4h-2.200v-4h-2.400z" fill="#111"/><path d="M5 11.500h3l1-1.500h6l1 1.500h3v10h-14z" fill="#111"/><circle cx="12" cy="16.500" r="3.200" fill="#111" stroke="#fff" stroke-width="1.100"/><circle cx="12" cy="16.500" r="1.200" fill="#fff"/></svg><svg style="left:120px;top:160.5px" width="26" height="26" viewBox="0 0 24 24"><rect x="2.500" y="3.500" width="16" height="13" fill="none" stroke="#111" stroke-width="2.200" stroke-dasharray="3.500 1.800"/><path d="M5 14l4-5 3 3 2.500-3 2 5z" fill="#333"/><path d="M13.5 9.5l0 12 3-2.800 2.200 4.600 1.900-.9-2.200-4.500h4z" fill="#fff" stroke="#333" stroke-width=".9" stroke-linejoin="round"/></svg><div class="hd" style="left:5px;top:194px;width:42px;height:3px;background-size:4px 3px"></div><svg style="left:3.55px;top:204.25px" width="25.5" height="25.5" viewBox="0 0 24 24"><path d="M3 3l6.500 15.500 9.500-15" fill="none" stroke="#333" stroke-width="1.300"/><g fill="#fff" stroke="#333" stroke-width=".9"><circle cx="3" cy="3" r="1.900"/><circle cx="9.500" cy="18.500" r="1.900"/><circle cx="19" cy="3.500" r="1.900"/></g><g transform="translate(14 14)"><rect width="9.5" height="9.5" rx="1.6" fill="#5a9e5e" stroke="#3f7a43" stroke-width=".6"/><path d="M4.75 1.7v6.1M1.7 4.75h6.1" stroke="#fff" stroke-width="1.9"/></g></svg><svg style="left:3.55px;top:234.75px" width="25.5" height="25.5" viewBox="0 0 24 24"><path d="M2 2h6v6h-6zM14 2h6v6h-6zM8 8h6v6h-6zM2 14h6v6h-6z" fill="#34507a"/><path d="M8 2h6v6h-6zM2 8h6v6h-6zM14 8h6v6h-6zM8 14h6v6h-6z" fill="#9ab8dc"/><g transform="translate(14 14)"><rect width="9.5" height="9.5" rx="1.6" fill="#5a9e5e" stroke="#3f7a43" stroke-width=".6"/><path d="M4.75 1.7v6.1M1.7 4.75h6.1" stroke="#fff" stroke-width="1.9"/></g></svg><svg style="left:3.55px;top:265.25px" width="25.5" height="25.5" viewBox="0 0 24 24"><rect x="2" y="2" width="19" height="19" fill="#b8cce4" stroke="#34507a" stroke-width="1.200"/><path d="M2 12h19M12 2v19M2 2l10 10M21 2l-9 10" stroke="#34507a" stroke-width="1.100"/><g transform="translate(14 14)"><rect width="9.5" height="9.5" rx="1.6" fill="#5a9e5e" stroke="#3f7a43" stroke-width=".6"/><path d="M4.75 1.7v6.1M1.7 4.75h6.1" stroke="#fff" stroke-width="1.9"/></g></svg><svg style="left:3.55px;top:295.25px" width="25.5" height="25.5" viewBox="0 0 24 24"><path d="M8 3c4-1 8 2 7 7s-6 8-11 8c3-2 5-4 5-7-3 1-6-1-5-4s2-3.500 4-4z" fill="#4f86c0" stroke="#2f5f95" stroke-width=".8"/><g transform="translate(14 14)"><rect width="9.5" height="9.5" rx="1.6" fill="#5a9e5e" stroke="#3f7a43" stroke-width=".6"/><path d="M4.75 1.7v6.1M1.7 4.75h6.1" stroke="#fff" stroke-width="1.9"/></g></svg><svg style="left:3.55px;top:325.25px" width="25.5" height="25.5" viewBox="0 0 24 24"><path d="M2 21c1-8 6-16 18-19-1 7-6 12-14 14.500z" fill="#5b8ec6" stroke="#2f5f95" stroke-width=".8"/><path d="M2 21.500c3-8 8-13 16-17.500" fill="none" stroke="#dfe9f5" stroke-width=".9"/><g transform="translate(14 14)"><rect width="9.5" height="9.5" rx="1.6" fill="#5a9e5e" stroke="#3f7a43" stroke-width=".6"/><path d="M4.75 1.7v6.1M1.7 4.75h6.1" stroke="#fff" stroke-width="1.9"/></g></svg><svg style="left:3.55px;top:355.25px" width="25.5" height="25.5" viewBox="0 0 24 24"><rect x="1.500" y="1.500" width="20" height="20" rx="2" fill="#b8cce4" stroke="#6f8fb8" stroke-width="1.200"/><path d="M5.500 4.500l5 13.500 8-13" fill="none" stroke="#333" stroke-width="1.200"/><g fill="#fff" stroke="#333" stroke-width=".9"><circle cx="5.500" cy="4.500" r="1.700"/><circle cx="10.500" cy="18" r="1.700"/><circle cx="18.500" cy="5" r="1.700"/></g><g transform="translate(14 14)"><rect width="9.5" height="9.5" rx="1.6" fill="#5a9e5e" stroke="#3f7a43" stroke-width=".6"/><path d="M4.75 1.7v6.1M1.7 4.75h6.1" stroke="#fff" stroke-width="1.9"/></g></svg><svg style="left:3.55px;top:385.25px" width="25.5" height="25.5" viewBox="0 0 24 24"><path d="M4 4c4-4 12-3 14 2s0 9-2 12-2-2-3-4-2 4-4 3-1-5-3-7-4-3-2-6z" fill="#6f9fd6" stroke="#2f5f95" stroke-width=".9"/><circle cx="8" cy="7" r="1" fill="#fff"/><path d="M14 8c2 2 2 6 0 8" fill="none" stroke="#2f5f95" stroke-width=".8"/><g transform="translate(14 14)"><rect width="9.5" height="9.5" rx="1.6" fill="#5a9e5e" stroke="#3f7a43" stroke-width=".6"/><path d="M4.75 1.7v6.1M1.7 4.75h6.1" stroke="#fff" stroke-width="1.9"/></g></svg><svg style="left:3.55px;top:415.25px" width="25.5" height="25.5" viewBox="0 0 24 24"><circle cx="11" cy="10.5" r="9.5" fill="#7fa8d8" stroke="#4a6a94" stroke-width="1"/><path d="M4 6.5c3 1 5 0 6 3s-3 4-2 7M9 11.5c2 3 6 2 7 5" fill="none" stroke="#b8c4d2" stroke-width="2.2"/><ellipse cx="11" cy="10.5" rx="4.275" ry="9.5" fill="none" stroke="#3d5f8c" stroke-width=".7"/><path d="M1.5 10.5h19M11 1v19" stroke="#3d5f8c" stroke-width=".7"/><g transform="translate(14 14)"><rect width="9.5" height="9.5" rx="1.6" fill="#5a9e5e" stroke="#3f7a43" stroke-width=".6"/><path d="M4.75 1.7v6.1M1.7 4.75h6.1" stroke="#fff" stroke-width="1.9"/></g></svg><svg style="left:3.55px;top:445.25px" width="25.5" height="25.5" viewBox="0 0 24 24"><circle cx="11" cy="10.500" r="9.500" fill="#e8eef6" stroke="#34507a" stroke-width="1.100"/><path d="M1.500 10.500h19M11 1v19M3 5.500h16M3 15.500h16" stroke="#34507a" stroke-width="1"/><ellipse cx="11" cy="10.500" rx="4.500" ry="9.500" fill="none" stroke="#34507a" stroke-width="1"/><path d="M2 8h18v5h-18z" fill="#4f86c0" opacity=".75"/><g transform="translate(14 14)"><rect width="9.5" height="9.5" rx="1.6" fill="#5a9e5e" stroke="#3f7a43" stroke-width=".6"/><path d="M4.75 1.7v6.1M1.7 4.75h6.1" stroke="#fff" stroke-width="1.9"/></g></svg><svg style="left:3.55px;top:475.25px" width="25.5" height="25.5" viewBox="0 0 24 24"><circle cx="11" cy="10.500" r="9.500" fill="#dce8f4" stroke="#6f8fb8" stroke-width="1"/><ellipse cx="11" cy="10.500" rx="4.500" ry="9.500" fill="none" stroke="#8aa8cc" stroke-width=".8"/><path d="M1.500 10.500h19" stroke="#8aa8cc" stroke-width=".8"/><path d="M5 5l4.500 11 6.500-10.500" fill="none" stroke="#333" stroke-width="1.100"/><g fill="#fff" stroke="#333" stroke-width=".8"><circle cx="5" cy="5" r="1.500"/><circle cx="9.500" cy="16" r="1.500"/><circle cx="16" cy="5.500" r="1.500"/></g><g transform="translate(14 14)"><rect width="9.5" height="9.5" rx="1.6" fill="#5a9e5e" stroke="#3f7a43" stroke-width=".6"/><path d="M4.75 1.7v6.1M1.7 4.75h6.1" stroke="#fff" stroke-width="1.9"/></g></svg><svg style="left:3.55px;top:505.25px" width="25.5" height="25.5" viewBox="0 0 24 24"><path d="M3 3l6.500 15.500 9.500-15" fill="none" stroke="#333" stroke-width="1.300"/><g fill="#fff" stroke="#333" stroke-width=".9"><circle cx="3" cy="3" r="1.900"/><circle cx="9.500" cy="18.500" r="1.900"/><circle cx="19" cy="3.500" r="1.900"/></g><g transform="translate(14 14)"><rect width="9" height="9" rx="1" fill="#e9c524" stroke="#b89410" stroke-width=".6"/><path d="M4.5 1.4v6.2M1.6 2.8l5.8 3.4M1.6 6.2l5.8 -3.4" stroke="#fff" stroke-width="1.5"/></g></svg><svg style="left:3.55px;top:535.75px" width="25.5" height="25.5" viewBox="0 0 24 24"><rect x="2" y="2.500" width="18" height="17" fill="#dce8f6" stroke="#34609a" stroke-width="1.100"/><rect x="2" y="2.500" width="18" height="4" fill="#4f78b0"/><path d="M6.500 2.500v17M11 2.500v17M15.500 2.500v17M2 10.500h18M2 15h18" stroke="#34609a" stroke-width=".9"/><g transform="translate(14 14)"><rect width="9.5" height="9.5" rx="1.6" fill="#5a9e5e" stroke="#3f7a43" stroke-width=".6"/><path d="M4.75 1.7v6.1M1.7 4.75h6.1" stroke="#fff" stroke-width="1.9"/></g></svg><svg style="left:35px;top:395px" width="10" height="6" viewBox="0 0 10 6"><path d="M0.5 .5h9l-4.5 5z" fill="#111"/></svg><svg style="left:35px;top:425px" width="10" height="6" viewBox="0 0 10 6"><path d="M0.5 .5h9l-4.5 5z" fill="#111"/></svg><svg style="left:35px;top:485px" width="10" height="6" viewBox="0 0 10 6"><path d="M0.5 .5h9l-4.5 5z" fill="#111"/></svg><svg style="left:35px;top:515px" width="10" height="6" viewBox="0 0 10 6"><path d="M0.5 .5h9l-4.5 5z" fill="#111"/></svg><svg style="left:53.5px;top:228px" width="19" height="19" viewBox="0 0 24 24"><path d="M3 14l9-6 3 4-8 6c-2 1-5-1-4-4z" fill="#e8a040" stroke="#8a5010" stroke-width=".7"/><path d="M12 8l6-5 3 3-6 6z" fill="#c04a2a" stroke="#7a2a10" stroke-width=".7"/><path d="M4 16l4 3" stroke="#f4d890" stroke-width="1.200"/></svg><svg style="left:76.5px;top:228px" width="19" height="19" viewBox="0 0 24 24"><rect x="4.500" y="8.500" width="10" height="11" fill="#e8e8e8" stroke="#777"/><rect x="8.500" y="4.500" width="9" height="11" fill="#f4f4f4" stroke="#777"/><path d="M11 3v8M14 3v8" stroke="#777" stroke-width="1.100"/><g transform="translate(12 13)"><rect width="8" height="8" rx="1.6" fill="#5a9e5e" stroke="#3f7a43" stroke-width=".6"/><path d="M4 1.7v4.6M1.7 4h4.6" stroke="#fff" stroke-width="1.9"/></g></svg><svg style="left:99.5px;top:228px" width="19" height="19" viewBox="0 0 24 24"><path d="M2 12c4-6 14-6 18 0-4 5.500-14 5.500-18 0z" fill="#f4f4f4" stroke="#777" stroke-width=".9"/><circle cx="11" cy="12" r="3.400" fill="#6f8fb8" stroke="#34507a" stroke-width=".7"/><path d="M14 17.500h7l-3.500 4z" fill="#111"/></svg><svg style="left:122.5px;top:228px" width="19" height="19" viewBox="0 0 24 24"><path d="M3 4h18l-7 8v8l-4-2v-6z" fill="#6fa0d0" stroke="#2f5f95" stroke-width=".9"/><ellipse cx="12" cy="4.500" rx="9" ry="1.800" fill="#a8c8e8" stroke="#2f5f95" stroke-width=".8"/></svg><svg style="left:144.5px;top:228px" width="19" height="19" viewBox="0 0 24 24"><text x="8" y="14.500" font-family="'Liberation Serif',serif" font-size="17" text-anchor="middle" fill="#8a2a8a">ε</text><rect x="12" y="13" width="8" height="7" fill="#e8e8e8" stroke="#999" stroke-width=".7"/></svg><svg style="left:184.5px;top:228px" width="19" height="19" viewBox="0 0 24 24"><rect x="3.500" y="3.500" width="13" height="17" fill="#f6e9b8" stroke="#b8962a" stroke-width=".8"/><path d="M6 7h4M6 11h4M6 15h4" stroke="#b8962a" stroke-width="1.500"/><path d="M15.500 5v8h-3l5 7 5-7h-3v-8z" fill="#4f86c0" stroke="#2f5f95" stroke-width=".7"/></svg><svg style="left:207px;top:228px" width="19" height="19" viewBox="0 0 24 24"><rect x="3.500" y="6.500" width="13" height="14" fill="#f6e9b8" stroke="#b8962a" stroke-width=".8"/><path d="M6 10h4M6 14h4M6 18h4" stroke="#b8962a" stroke-width="1.500"/><path d="M15.500 19v-8h-3l5-7 5 7h-3v8z" fill="#4f86c0" stroke="#2f5f95" stroke-width=".7"/></svg><svg style="left:229.5px;top:228px" width="19" height="19" viewBox="0 0 24 24"><rect x="3.500" y="3.500" width="14" height="13" fill="#fafafa" stroke="#888"/><rect x="12.500" y="13.500" width="9" height="7" rx="1.500" fill="#e06060" stroke="#a02828" stroke-width=".7"/><path d="M14.500 17h5" stroke="#fff" stroke-width="1.600"/></svg><svg style="left:169.5px;top:235.5px" width="10" height="6" viewBox="0 0 10 6"><path d="M0.5 .5h9l-4.5 5z" fill="#111"/></svg><svg style="left:1571px;top:228.5px" width="18" height="18" viewBox="0 0 24 24"><rect x="3.500" y="3.500" width="14" height="13" fill="#fafafa" stroke="#888"/><circle cx="17.500" cy="17" r="3.300" fill="#7ab87a" stroke="#3f7a43" stroke-width=".8"/></svg><svg style="left:1594px;top:228.5px" width="18" height="18" viewBox="0 0 24 24"><path d="M3 11a9 9 0 0 1 15.500-5.500l2.500-2.500v8h-8l2.700-2.700a5.200 5.200 0 0 0-8.900 2.700z" fill="#4a90d6" stroke="#2a68a8" stroke-width=".8"/><path d="M21 13a9 9 0 0 1-15.500 5.500l-2.500 2.500v-8h8l-2.700 2.700a5.200 5.200 0 0 0 8.900-2.700z" fill="#4a90d6" stroke="#2a68a8" stroke-width=".8"/></svg><svg style="left:1617px;top:228.5px" width="18" height="18" viewBox="0 0 24 24"><path d="M3 4h18l-7 8v8l-4-2v-6z" fill="#6fa0d0" stroke="#2f5f95" stroke-width=".9"/><ellipse cx="12" cy="4.500" rx="9" ry="1.800" fill="#a8c8e8" stroke="#2f5f95" stroke-width=".8"/></svg><svg style="left:1640.5px;top:228.5px" width="18" height="18" viewBox="0 0 24 24"><rect x="3.500" y="6.500" width="13" height="14" fill="#f6e9b8" stroke="#b8962a" stroke-width=".8"/><path d="M6 10h4M6 14h4M6 18h4" stroke="#b8962a" stroke-width="1.500"/><path d="M15.500 19v-8h-3l5-7 5 7h-3v8z" fill="#4f86c0" stroke="#2f5f95" stroke-width=".7"/></svg><svg style="left:1663px;top:228.5px" width="18" height="18" viewBox="0 0 24 24"><circle cx="12" cy="12" r="9" fill="#4f86c0" stroke="#2f5f95"/><text x="12" y="17.500" font-family="'Liberation Serif',serif" font-style="italic" font-weight="bold" font-size="15" text-anchor="middle" fill="#fff">i</text></svg><svg style="left:63.25px;top:855.75px" width="22.5" height="22.5" viewBox="0 0 24 24"><circle cx="12" cy="12" r="9.500" fill="none" stroke="#111" stroke-width="1.500"/><path d="M12 2.500l9.500 9.500-9.500 9.500-9.500-9.500z" fill="none" stroke="#111" stroke-width="1.300"/><circle cx="12" cy="12" r="4.500" fill="none" stroke="#111" stroke-width="1.300"/><path d="M2.500 12h19M12 2.500v19" stroke="#111" stroke-width=".9"/></svg><svg style="left:60.75px;top:887.25px" width="22.5" height="22.5" viewBox="0 0 24 24"><rect x="2" y="2.500" width="20" height="19" rx="1.500" fill="#fff" stroke="#111" stroke-width="1.500"/><path d="M7 2.500v19M12 2.500v19M17 2.500v19M2 7.300h20M2 12h20M2 16.800h20" stroke="#111" stroke-width="1.200"/></svg><svg style="left:63.5px;top:921px" width="22" height="22" viewBox="0 0 24 24"><path d="M6 4c4-3 9 0 11 5s2 9-2 11-8-1-10-6-2-8 1-10z" fill="#fff" stroke="#111" stroke-width="1.500"/><path d="M8 5l4 8M5 10l9-4" stroke="#111" stroke-width="1.300"/><ellipse cx="9" cy="7" rx="2" ry="3.500" fill="#111" transform="rotate(-25 9 7)"/><circle cx="14" cy="16.500" r="2.700" fill="none" stroke="#111" stroke-width="1.200"/><path d="M17 3l1 1M20 5l1-1M20 9h1" stroke="#111" stroke-width="1.100"/></svg><svg style="left:150.5px;top:959.5px" width="19" height="19" viewBox="0 0 24 24"><path d="M12 1v22M1 12h22" stroke="#8a8a8a" stroke-width="1.100"/><circle cx="12" cy="12" r="3.800" fill="none" stroke="#b06a6a" stroke-width="1.200"/></svg>
<div class="ttl" style="left:1567px;top:192px;width:351px;height:30.5px;"></div><div class="t" style="left:1572px;top:198.05px;font-size:14.8px;line-height:21px;">Browser</div><svg style="left:1870px;top:196px" width="46" height="22" viewBox="0 0 46 22"><g fill="none" stroke="#222" stroke-width="2"><path d="M2.5 9.5h10v8h-10z" stroke-width="2.2"/><path d="M6 9V4.6h10.5v8.2H13" stroke-width="2"/><path d="M2 10h11" stroke-width="3"/><path d="M5.5 5h11" stroke-width="3"/><path d="M28 4.5l13 13M41 4.5l-13 13" stroke-width="3"/></g></svg>
<div class="tree" style="left:1567px;top:251px;width:351px;height:747.5px;"></div>
<div style="left:1568px;top:252px;width:331px;height:725px;overflow:hidden">
<svg style="left:8.6px;top:6.6px" width="12" height="12" viewBox="0 0 12 12"><path d="M1.5 3.5l4.5 4.5 4.5-4.5" fill="none" stroke="#333" stroke-width="1.9"/></svg>
<svg style="left:29.5px;top:0.8px" width="22" height="22" viewBox="0 0 22 22"><path d="M2.500 19.500v-16h7.500l2 2.500h7.500v13.500z" fill="#e9e9e9" stroke="#909090" stroke-width="1.400"/><path d="M2.500 3.500h7.500l2 2.500h7.500v3h-8l-2 2h-7z" fill="#8e8e8e"/></svg>
<div class="t" style="left:56.8px;top:3.5px;font-size:14.25px;line-height:20px;color:#111">_QGIS für Pilzfreunde</div>
<svg style="left:33.7px;top:30.6px" width="12" height="12" viewBox="0 0 12 12"><path d="M3.5 1.5l4.5 4.5-4.5 4.5" fill="none" stroke="#8a8a8a" stroke-width="1.5"/></svg>
<svg style="left:54.5px;top:24.8px" width="22" height="22" viewBox="0 0 22 22"><path d="M2.500 19.500v-14.800h6.500l2 2.300h8.500v12.500z" fill="#ececec" stroke="#9b9b9b" stroke-width="1.400" stroke-linejoin="round"/></svg>
<div class="t" style="left:82.6px;top:27px;font-size:14.9px;line-height:21px;color:#111">Beide Biotope - Docs</div>
<svg style="left:33.7px;top:54.6px" width="12" height="12" viewBox="0 0 12 12"><path d="M3.5 1.5l4.5 4.5-4.5 4.5" fill="none" stroke="#8a8a8a" stroke-width="1.5"/></svg>
<svg style="left:54.5px;top:48.8px" width="22" height="22" viewBox="0 0 22 22"><path d="M2.500 19.500v-14.800h6.500l2 2.300h8.500v12.500z" fill="#ececec" stroke="#9b9b9b" stroke-width="1.400" stroke-linejoin="round"/></svg>
<div class="t" style="left:82.6px;top:51px;font-size:14.9px;line-height:21px;color:#111">Bilder_alt</div>
<svg style="left:33.7px;top:78.6px" width="12" height="12" viewBox="0 0 12 12"><path d="M3.5 1.5l4.5 4.5-4.5 4.5" fill="none" stroke="#8a8a8a" stroke-width="1.5"/></svg>
<svg style="left:54.5px;top:72.8px" width="22" height="22" viewBox="0 0 22 22"><path d="M2.500 19.500v-14.800h6.500l2 2.300h8.500v12.500z" fill="#ececec" stroke="#9b9b9b" stroke-width="1.400" stroke-linejoin="round"/></svg>
<div class="t" style="left:82.6px;top:75px;font-size:14.9px;line-height:21px;color:#111">csv-Importe</div>
<svg style="left:33.7px;top:102.6px" width="12" height="12" viewBox="0 0 12 12"><path d="M3.5 1.5l4.5 4.5-4.5 4.5" fill="none" stroke="#8a8a8a" stroke-width="1.5"/></svg>
<svg style="left:54.5px;top:96.8px" width="22" height="22" viewBox="0 0 22 22"><path d="M2.500 19.500v-14.800h6.500l2 2.300h8.500v12.500z" fill="#ececec" stroke="#9b9b9b" stroke-width="1.400" stroke-linejoin="round"/></svg>
<div class="t" style="left:82.6px;top:99px;font-size:14.9px;line-height:21px;color:#111">Forst - WMS-Dienste</div>
<svg style="left:33.7px;top:126.6px" width="12" height="12" viewBox="0 0 12 12"><path d="M1.5 3.5l4.5 4.5 4.5-4.5" fill="none" stroke="#333" stroke-width="1.9"/></svg>
<svg style="left:54.5px;top:120.8px" width="22" height="22" viewBox="0 0 22 22"><path d="M2.500 19.500v-16h7.500l2 2.500h7.500v13.500z" fill="#e9e9e9" stroke="#909090" stroke-width="1.400"/><path d="M2.500 3.500h7.500l2 2.500h7.500v3h-8l-2 2h-7z" fill="#8e8e8e"/></svg>
<div class="t" style="left:82.6px;top:123px;font-size:14.9px;line-height:21px;color:#111">Forums-Beiträge</div>
<svg style="left:58.7px;top:150.6px" width="12" height="12" viewBox="0 0 12 12"><path d="M3.5 1.5l4.5 4.5-4.5 4.5" fill="none" stroke="#8a8a8a" stroke-width="1.5"/></svg>
<svg style="left:79.5px;top:144.8px" width="22" height="22" viewBox="0 0 22 22"><path d="M2.500 19.500v-14.800h6.500l2 2.300h8.500v12.500z" fill="#ececec" stroke="#9b9b9b" stroke-width="1.400" stroke-linejoin="round"/></svg>
<div class="t" style="left:107.2px;top:147px;font-size:14.9px;line-height:21px;color:#111">!&nbsp;&nbsp;&nbsp;&nbsp;&nbsp;!&nbsp;&nbsp;&nbsp;&nbsp;&nbsp;9a - Waldortkarte anhand alter Karten</div>
<svg style="left:58.7px;top:174.6px" width="12" height="12" viewBox="0 0 12 12"><path d="M3.5 1.5l4.5 4.5-4.5 4.5" fill="none" stroke="#8a8a8a" stroke-width="1.5"/></svg>
<svg style="left:79.5px;top:168.8px" width="22" height="22" viewBox="0 0 22 22"><path d="M2.500 19.500v-14.800h6.500l2 2.300h8.500v12.500z" fill="#ececec" stroke="#9b9b9b" stroke-width="1.400" stroke-linejoin="round"/></svg>
<div class="t" style="left:107.2px;top:171px;font-size:14.9px;line-height:21px;color:#111">1 – Installation</div>
<svg style="left:58.7px;top:198.6px" width="12" height="12" viewBox="0 0 12 12"><path d="M3.5 1.5l4.5 4.5-4.5 4.5" fill="none" stroke="#8a8a8a" stroke-width="1.5"/></svg>
<svg style="left:79.5px;top:192.8px" width="22" height="22" viewBox="0 0 22 22"><path d="M2.500 19.500v-14.800h6.500l2 2.300h8.500v12.500z" fill="#ececec" stroke="#9b9b9b" stroke-width="1.400" stroke-linejoin="round"/></svg>
<div class="t" style="left:107.2px;top:195px;font-size:14.9px;line-height:21px;color:#111">10 - Offline Basiskarten erstellen (QTiles)</div>
<svg style="left:58.7px;top:222.6px" width="12" height="12" viewBox="0 0 12 12"><path d="M3.5 1.5l4.5 4.5-4.5 4.5" fill="none" stroke="#8a8a8a" stroke-width="1.5"/></svg>
<svg style="left:79.5px;top:216.8px" width="22" height="22" viewBox="0 0 22 22"><path d="M2.500 19.500v-14.800h6.500l2 2.300h8.500v12.500z" fill="#ececec" stroke="#9b9b9b" stroke-width="1.400" stroke-linejoin="round"/></svg>
<div class="t" style="left:107.2px;top:219px;font-size:14.9px;line-height:21px;color:#111">11 – Mykis-Export in QGIS einpflegen</div>
<svg style="left:58.7px;top:246.6px" width="12" height="12" viewBox="0 0 12 12"><path d="M3.5 1.5l4.5 4.5-4.5 4.5" fill="none" stroke="#8a8a8a" stroke-width="1.5"/></svg>
<svg style="left:79.5px;top:240.8px" width="22" height="22" viewBox="0 0 22 22"><path d="M2.500 19.500v-14.800h6.500l2 2.300h8.500v12.500z" fill="#ececec" stroke="#9b9b9b" stroke-width="1.400" stroke-linejoin="round"/></svg>
<div class="t" style="left:107.2px;top:243px;font-size:14.9px;line-height:21px;color:#111">12 – Entwurf der Fundtabelle und Import</div>
<svg style="left:58.7px;top:270.6px" width="12" height="12" viewBox="0 0 12 12"><path d="M3.5 1.5l4.5 4.5-4.5 4.5" fill="none" stroke="#8a8a8a" stroke-width="1.5"/></svg>
<svg style="left:79.5px;top:264.8px" width="22" height="22" viewBox="0 0 22 22"><path d="M2.500 19.500v-14.800h6.500l2 2.300h8.500v12.500z" fill="#ececec" stroke="#9b9b9b" stroke-width="1.400" stroke-linejoin="round"/></svg>
<div class="t" style="left:107.2px;top:267px;font-size:14.9px;line-height:21px;color:#111">13 - Import der Fundtabelle</div>
<svg style="left:58.7px;top:294.6px" width="12" height="12" viewBox="0 0 12 12"><path d="M3.5 1.5l4.5 4.5-4.5 4.5" fill="none" stroke="#8a8a8a" stroke-width="1.5"/></svg>
<svg style="left:79.5px;top:288.8px" width="22" height="22" viewBox="0 0 22 22"><path d="M2.500 19.500v-14.800h6.500l2 2.300h8.500v12.500z" fill="#ececec" stroke="#9b9b9b" stroke-width="1.400" stroke-linejoin="round"/></svg>
<div class="t" style="left:107.2px;top:291px;font-size:14.9px;line-height:21px;color:#111">14 - Fotos mit eVis</div>
<svg style="left:58.7px;top:318.6px" width="12" height="12" viewBox="0 0 12 12"><path d="M3.5 1.5l4.5 4.5-4.5 4.5" fill="none" stroke="#8a8a8a" stroke-width="1.5"/></svg>
<svg style="left:79.5px;top:312.8px" width="22" height="22" viewBox="0 0 22 22"><path d="M2.500 19.500v-14.800h6.500l2 2.300h8.500v12.500z" fill="#ececec" stroke="#9b9b9b" stroke-width="1.400" stroke-linejoin="round"/></svg>
<div class="t" style="left:107.2px;top:315px;font-size:14.9px;line-height:21px;color:#111">15 - Objekte umpositionieren</div>
<svg style="left:58.7px;top:342.6px" width="12" height="12" viewBox="0 0 12 12"><path d="M3.5 1.5l4.5 4.5-4.5 4.5" fill="none" stroke="#8a8a8a" stroke-width="1.5"/></svg>
<svg style="left:79.5px;top:336.8px" width="22" height="22" viewBox="0 0 22 22"><path d="M2.500 19.500v-14.800h6.500l2 2.300h8.500v12.500z" fill="#ececec" stroke="#9b9b9b" stroke-width="1.400" stroke-linejoin="round"/></svg>
<div class="t" style="left:107.2px;top:339px;font-size:14.9px;line-height:21px;color:#111">16 - Geotiff-Datei erzeugen</div>
<svg style="left:58.7px;top:366.6px" width="12" height="12" viewBox="0 0 12 12"><path d="M3.5 1.5l4.5 4.5-4.5 4.5" fill="none" stroke="#8a8a8a" stroke-width="1.5"/></svg>
<svg style="left:79.5px;top:360.8px" width="22" height="22" viewBox="0 0 22 22"><path d="M2.500 19.500v-14.800h6.500l2 2.300h8.500v12.500z" fill="#ececec" stroke="#9b9b9b" stroke-width="1.400" stroke-linejoin="round"/></svg>
<div class="t" style="left:107.2px;top:363px;font-size:14.9px;line-height:21px;color:#111">17 – (ehemals 4a) Lidar-Daten importieren</div>
<svg style="left:58.7px;top:390.6px" width="12" height="12" viewBox="0 0 12 12"><path d="M3.5 1.5l4.5 4.5-4.5 4.5" fill="none" stroke="#8a8a8a" stroke-width="1.5"/></svg>
<svg style="left:79.5px;top:384.8px" width="22" height="22" viewBox="0 0 22 22"><path d="M2.500 19.500v-14.800h6.500l2 2.300h8.500v12.500z" fill="#ececec" stroke="#9b9b9b" stroke-width="1.400" stroke-linejoin="round"/></svg>
<div class="t" style="left:107.2px;top:387px;font-size:14.9px;line-height:21px;color:#111">18 - Geländerelief aus xyz-File (DGM)</div>
<svg style="left:58.7px;top:414.6px" width="12" height="12" viewBox="0 0 12 12"><path d="M3.5 1.5l4.5 4.5-4.5 4.5" fill="none" stroke="#8a8a8a" stroke-width="1.5"/></svg>
<svg style="left:79.5px;top:408.8px" width="22" height="22" viewBox="0 0 22 22"><path d="M2.500 19.500v-14.800h6.500l2 2.300h8.500v12.500z" fill="#ececec" stroke="#9b9b9b" stroke-width="1.400" stroke-linejoin="round"/></svg>
<div class="t" style="left:107.2px;top:411px;font-size:14.9px;line-height:21px;color:#111">18a - Workaround mit PlanlaufTerrain</div>
<svg style="left:58.7px;top:438.6px" width="12" height="12" viewBox="0 0 12 12"><path d="M3.5 1.5l4.5 4.5-4.5 4.5" fill="none" stroke="#8a8a8a" stroke-width="1.5"/></svg>
<svg style="left:79.5px;top:432.8px" width="22" height="22" viewBox="0 0 22 22"><path d="M2.500 19.500v-14.800h6.500l2 2.300h8.500v12.500z" fill="#ececec" stroke="#9b9b9b" stroke-width="1.400" stroke-linejoin="round"/></svg>
<div class="t" style="left:107.2px;top:435px;font-size:14.9px;line-height:21px;color:#111">18b - vielleicht später mal = 3D-Gelände</div>
<svg style="left:58.7px;top:462.6px" width="12" height="12" viewBox="0 0 12 12"><path d="M3.5 1.5l4.5 4.5-4.5 4.5" fill="none" stroke="#8a8a8a" stroke-width="1.5"/></svg>
<svg style="left:79.5px;top:456.8px" width="22" height="22" viewBox="0 0 22 22"><path d="M2.500 19.500v-14.800h6.500l2 2.300h8.500v12.500z" fill="#ececec" stroke="#9b9b9b" stroke-width="1.400" stroke-linejoin="round"/></svg>
<div class="t" style="left:107.2px;top:459px;font-size:14.9px;line-height:21px;color:#111">19 - Punkt-, Linien und Polygonlayer</div>
<svg style="left:58.7px;top:486.6px" width="12" height="12" viewBox="0 0 12 12"><path d="M3.5 1.5l4.5 4.5-4.5 4.5" fill="none" stroke="#8a8a8a" stroke-width="1.5"/></svg>
<svg style="left:79.5px;top:480.8px" width="22" height="22" viewBox="0 0 22 22"><path d="M2.500 19.500v-14.800h6.500l2 2.300h8.500v12.500z" fill="#ececec" stroke="#9b9b9b" stroke-width="1.400" stroke-linejoin="round"/></svg>
<div class="t" style="left:107.2px;top:483px;font-size:14.9px;line-height:21px;color:#111">2 – KBS, Basiskarten</div>
<svg style="left:58.7px;top:510.6px" width="12" height="12" viewBox="0 0 12 12"><path d="M3.5 1.5l4.5 4.5-4.5 4.5" fill="none" stroke="#8a8a8a" stroke-width="1.5"/></svg>
<svg style="left:79.5px;top:504.8px" width="22" height="22" viewBox="0 0 22 22"><path d="M2.500 19.500v-14.800h6.500l2 2.300h8.500v12.500z" fill="#ececec" stroke="#9b9b9b" stroke-width="1.400" stroke-linejoin="round"/></svg>
<div class="t" style="left:107.2px;top:507px;font-size:14.9px;line-height:21px;color:#111">20 - Kategorisierung und Eingabemasken</div>
<svg style="left:58.7px;top:534.6px" width="12" height="12" viewBox="0 0 12 12"><path d="M3.5 1.5l4.5 4.5-4.5 4.5" fill="none" stroke="#8a8a8a" stroke-width="1.5"/></svg>
<svg style="left:79.5px;top:528.8px" width="22" height="22" viewBox="0 0 22 22"><path d="M2.500 19.500v-14.800h6.500l2 2.300h8.500v12.500z" fill="#ececec" stroke="#9b9b9b" stroke-width="1.400" stroke-linejoin="round"/></svg>
<div class="t" style="left:107.2px;top:531px;font-size:14.9px;line-height:21px;color:#111">21 - Mykorrhizabereiche um Bäume</div>
<svg style="left:58.7px;top:558.6px" width="12" height="12" viewBox="0 0 12 12"><path d="M3.5 1.5l4.5 4.5-4.5 4.5" fill="none" stroke="#8a8a8a" stroke-width="1.5"/></svg>
<svg style="left:79.5px;top:552.8px" width="22" height="22" viewBox="0 0 22 22"><path d="M2.500 19.500v-14.800h6.500l2 2.300h8.500v12.500z" fill="#ececec" stroke="#9b9b9b" stroke-width="1.400" stroke-linejoin="round"/></svg>
<div class="t" style="left:107.2px;top:555px;font-size:14.9px;line-height:21px;color:#111">22 - Anwendung A - Installation, Kurzanleitung</div>
<svg style="left:58.7px;top:582.6px" width="12" height="12" viewBox="0 0 12 12"><path d="M3.5 1.5l4.5 4.5-4.5 4.5" fill="none" stroke="#8a8a8a" stroke-width="1.5"/></svg>
<svg style="left:79.5px;top:576.8px" width="22" height="22" viewBox="0 0 22 22"><path d="M2.500 19.500v-14.800h6.500l2 2.300h8.500v12.500z" fill="#ececec" stroke="#9b9b9b" stroke-width="1.400" stroke-linejoin="round"/></svg>
<div class="t" style="left:107.2px;top:579px;font-size:14.9px;line-height:21px;color:#111">23 - Anwendung B - Biotope</div>
<svg style="left:58.7px;top:606.6px" width="12" height="12" viewBox="0 0 12 12"><path d="M3.5 1.5l4.5 4.5-4.5 4.5" fill="none" stroke="#8a8a8a" stroke-width="1.5"/></svg>
<svg style="left:79.5px;top:600.8px" width="22" height="22" viewBox="0 0 22 22"><path d="M2.500 19.500v-14.800h6.500l2 2.300h8.500v12.500z" fill="#ececec" stroke="#9b9b9b" stroke-width="1.400" stroke-linejoin="round"/></svg>
<div class="t" style="left:107.2px;top:603px;font-size:14.9px;line-height:21px;color:#111">24 - Anwendung C - Pflanzengwesellschaften</div>
<svg style="left:58.7px;top:630.6px" width="12" height="12" viewBox="0 0 12 12"><path d="M3.5 1.5l4.5 4.5-4.5 4.5" fill="none" stroke="#8a8a8a" stroke-width="1.5"/></svg>
<svg style="left:79.5px;top:624.8px" width="22" height="22" viewBox="0 0 22 22"><path d="M2.500 19.500v-14.800h6.500l2 2.300h8.500v12.500z" fill="#ececec" stroke="#9b9b9b" stroke-width="1.400" stroke-linejoin="round"/></svg>
<div class="t" style="left:107.2px;top:627px;font-size:14.9px;line-height:21px;color:#111">25 - Anwendung D - PflGes Erläuterungen</div>
<svg style="left:58.7px;top:654.6px" width="12" height="12" viewBox="0 0 12 12"><path d="M3.5 1.5l4.5 4.5-4.5 4.5" fill="none" stroke="#8a8a8a" stroke-width="1.5"/></svg>
<svg style="left:79.5px;top:648.8px" width="22" height="22" viewBox="0 0 22 22"><path d="M2.500 19.500v-14.800h6.500l2 2.300h8.500v12.500z" fill="#ececec" stroke="#9b9b9b" stroke-width="1.400" stroke-linejoin="round"/></svg>
<div class="t" style="left:107.2px;top:651px;font-size:14.9px;line-height:21px;color:#111">26 - Anwendung E - PflGes Fotos</div>
<svg style="left:58.7px;top:678.6px" width="12" height="12" viewBox="0 0 12 12"><path d="M3.5 1.5l4.5 4.5-4.5 4.5" fill="none" stroke="#8a8a8a" stroke-width="1.5"/></svg>
<svg style="left:79.5px;top:672.8px" width="22" height="22" viewBox="0 0 22 22"><path d="M2.500 19.500v-14.800h6.500l2 2.300h8.500v12.500z" fill="#ececec" stroke="#9b9b9b" stroke-width="1.400" stroke-linejoin="round"/></svg>
<div class="t" style="left:107.2px;top:675px;font-size:14.9px;line-height:21px;color:#111">27 - Anwendung F - Die Pilzfunde</div>
<svg style="left:58.7px;top:702.6px" width="12" height="12" viewBox="0 0 12 12"><path d="M3.5 1.5l4.5 4.5-4.5 4.5" fill="none" stroke="#8a8a8a" stroke-width="1.5"/></svg>
<svg style="left:79.5px;top:696.8px" width="22" height="22" viewBox="0 0 22 22"><path d="M2.500 19.500v-14.800h6.500l2 2.300h8.500v12.500z" fill="#ececec" stroke="#9b9b9b" stroke-width="1.400" stroke-linejoin="round"/></svg>
<div class="t" style="left:107.2px;top:699px;font-size:14.9px;line-height:21px;color:#111">28 - Anwendung G - Beschriftung</div>
<svg style="left:58.7px;top:726.6px" width="12" height="12" viewBox="0 0 12 12"><path d="M3.5 1.5l4.5 4.5-4.5 4.5" fill="none" stroke="#8a8a8a" stroke-width="1.5"/></svg>
<svg style="left:79.5px;top:720.8px" width="22" height="22" viewBox="0 0 22 22"><path d="M2.500 19.500v-14.800h6.500l2 2.300h8.500v12.500z" fill="#ececec" stroke="#9b9b9b" stroke-width="1.400" stroke-linejoin="round"/></svg>
<div class="t" style="left:107.2px;top:723px;font-size:14.9px;line-height:21px;color:#111">29 - Anwendung H - Drucklayout</div>
</div>
<div style="left:1899px;top:252.5px;width:18px;height:724.5px;background:#f0f0f0"></div>
<div style="left:1899px;top:340px;width:18px;height:154px;background:#cdcdcd"></div>
<svg style="left:1902px;top:258.5px" width="12" height="12" viewBox="0 0 12 12"><path transform="rotate(180 6 6)" d="M1.5 3.5l4.5 4.5 4.5-4.5" fill="none" stroke="#555" stroke-width="1.5"/></svg>
<svg style="left:1902.5px;top:959.5px" width="12" height="12" viewBox="0 0 12 12"><path d="M1.5 3.5l4.5 4.5 4.5-4.5" fill="none" stroke="#555" stroke-width="1.5"/></svg>
<div style="left:1568px;top:977px;width:349px;height:20.5px;background:#f0f0f0"></div>
<div style="left:1610.5px;top:977px;width:143px;height:20.5px;background:#cdcdcd"></div>
<svg style="left:1572px;top:981px" width="12" height="12" viewBox="0 0 12 12"><path transform="rotate(180 6 6)" d="M3.5 1.5l4.5 4.5-4.5 4.5" fill="none" stroke="#555" stroke-width="1.5"/></svg>
<svg style="left:1881.5px;top:981px" width="12" height="12" viewBox="0 0 12 12"><path d="M3.5 1.5l4.5 4.5-4.5 4.5" fill="none" stroke="#555" stroke-width="1.5"/></svg>
<div class="inp" style="left:4px;top:1004.5px;width:279.5px;height:21.5px;border-color:#7a7a7a"></div>
<div class="t" style="left:32.5px;top:1006.5px;font-size:12.9px;line-height:18px;color:#7b7b7b">Zu suchender Typ (Strg+K)</div>
<svg style="left:10px;top:1008px" width="16" height="16" viewBox="0 0 16 16"><circle cx="6.3" cy="6.3" r="4.2" fill="none" stroke="#9a9a9a" stroke-width="1.5"/><path d="M9.5 9.5l4 4" stroke="#9a9a9a" stroke-width="1.7"/></svg>
<div class="t" style="left:924px;top:1007px;font-size:12.4px;line-height:17px;">Koordinate</div>
<div class="inp" style="left:988.5px;top:1004.5px;width:132px;height:21.5px;"></div>
<div class="t" style="left:993.5px;top:1006.5px;font-size:12.6px;line-height:18px;">473650.0,5397456.0</div>
<div class="t" style="left:1157.5px;top:1007px;font-size:12.4px;line-height:17px;">Maßstab</div>
<div style="left:1208px;top:1004.5px;width:90.5px;height:21.5px;background:#fff;border:1px solid #7a7a7a"></div>
<div class="t" style="left:1213px;top:1006.5px;font-size:12.6px;line-height:18px;">1:800</div>
<svg style="left:1282px;top:1009px" width="12" height="12" viewBox="0 0 12 12"><path d="M1.5 3.5l4.5 4.5 4.5-4.5" fill="none" stroke="#444" stroke-width="1.5"/></svg>
<div class="t" style="left:1334.6px;top:1006.5px;font-size:12.8px;line-height:18px;">Vergrößerung</div>
<div class="inp" style="left:1417px;top:1004.5px;width:86px;height:21.5px;"></div>
<div class="t" style="left:1420.5px;top:1006.5px;font-size:12.6px;line-height:18px;">100%</div>
<div class="t" style="left:1513.6px;top:1006.5px;font-size:12.5px;line-height:18px;">Drehung</div>
<div class="inp" style="left:1569.5px;top:1005px;width:85px;height:21.5px;"></div>
<div class="t" style="left:1573.5px;top:1006.5px;font-size:12.6px;line-height:18px;">0,0 °</div>
<svg style="left:1489.5px;top:1006px" width="10" height="19" viewBox="0 0 10 19"><rect x=".5" y=".5" width="9" height="18" fill="#e9e9e9" stroke="#bdbdbd"/><path d="M2 7.5l3-4 3 4zM2 11.5l3 4 3-4z" fill="#222"/></svg>
<svg style="left:1641px;top:1006px" width="10" height="19" viewBox="0 0 10 19"><rect x=".5" y=".5" width="9" height="18" fill="#e9e9e9" stroke="#bdbdbd"/><path d="M2 7.5l3-4 3 4zM2 11.5l3 4 3-4z" fill="#222"/></svg>
<div class="cb" style="left:1661.5px;top:1007.5px;width:15px;height:15px;"></div><svg style="left:1661.5px;top:1007.5px" width="15" height="15" viewBox="0 0 15 15"><path d="M3.2 7.6l3 3 5.6-6.4" fill="none" stroke="#222" stroke-width="1.4"/></svg>
<div class="t" style="left:1682.7px;top:1006.5px;font-size:12.5px;line-height:18px;">Zeichnen</div>
<div class="t" style="left:1775.7px;top:1007px;font-size:11.9px;line-height:17px;">EPSG:25832</div>
<svg style="left:1122.5px;top:1004.5px" width="21" height="21" viewBox="0 0 24 24"><path d="M6 4c4-3 9 0 11 5s2 9-2 11-8-1-10-6-2-8 1-10z" fill="#fff" stroke="#111" stroke-width="1.500"/><path d="M8 5l4 8M5 10l9-4" stroke="#111" stroke-width="1.300"/><ellipse cx="9" cy="7" rx="2" ry="3.500" fill="#111" transform="rotate(-25 9 7)"/><circle cx="14" cy="16.500" r="2.700" fill="none" stroke="#111" stroke-width="1.200"/><path d="M17 3l1 1M20 5l1-1M20 9h1" stroke="#111" stroke-width="1.100"/></svg><svg style="left:1307.5px;top:1004.5px" width="21" height="21" viewBox="0 0 24 24"><rect x="4" y="10.500" width="15" height="11" rx="1.500" fill="#8a8a8a" stroke="#6a6a6a"/><path d="M7 10.500v-3.500c0-6 9-6 9 0v3.500" fill="none" stroke="#8a8a8a" stroke-width="2.200"/></svg><svg style="left:1751.5px;top:1005.5px" width="19" height="19" viewBox="0 0 24 24"><circle cx="12" cy="12" r="9.500" fill="none" stroke="#555" stroke-width="1.300"/><ellipse cx="12" cy="12" rx="4.500" ry="9.500" fill="none" stroke="#555" stroke-width="1.100"/><path d="M2.500 12h19M12 2.500v19M4 7h16M4 17h16" stroke="#555" stroke-width="1.100"/></svg><svg style="left:1862.5px;top:1004.5px" width="22" height="22" viewBox="0 0 24 24"><path d="M12 3c6 0 10 3.500 10 8s-4 8-9 8l4 3.500c-4 0-6-2-7-3.800-4-1-8-3.500-8-7.700 0-4.500 4-8 10-8z" fill="#5f5f5f"/><circle cx="7.500" cy="11" r="1.400" fill="#fff"/><circle cx="12" cy="11" r="1.400" fill="#fff"/><circle cx="16.500" cy="11" r="1.400" fill="#fff"/></svg><svg style="left:1892.5px;top:1003.5px" width="23" height="23" viewBox="0 0 24 24"><path d="M3 8h5c-1.500-3 4-4 3.500 0h5v5c3-1.500 4 4 0 3.500v5.500h-13.500z" fill="#9a9a9a" stroke="#6f6f6f" stroke-width="1"/><path d="M14 6c3-5 8-3 7 2" fill="none" stroke="#8a8a8a" stroke-width="1.300"/><path d="M4 9l12 12" stroke="#c8c8c8" stroke-width="1.500"/></svg>
<div style="left:0px;top:0px;width:1920px;height:1px;background:#a31a22"></div>
<div style="left:0px;top:0px;width:1.2px;height:1032px;background:#a31a22"></div>
<div style="left:1919px;top:0px;width:1px;height:1032px;background:#c4202e"></div>
<div style="left:0px;top:1030px;width:1920px;height:2px;background:#c4202e"></div>
</body></html>
